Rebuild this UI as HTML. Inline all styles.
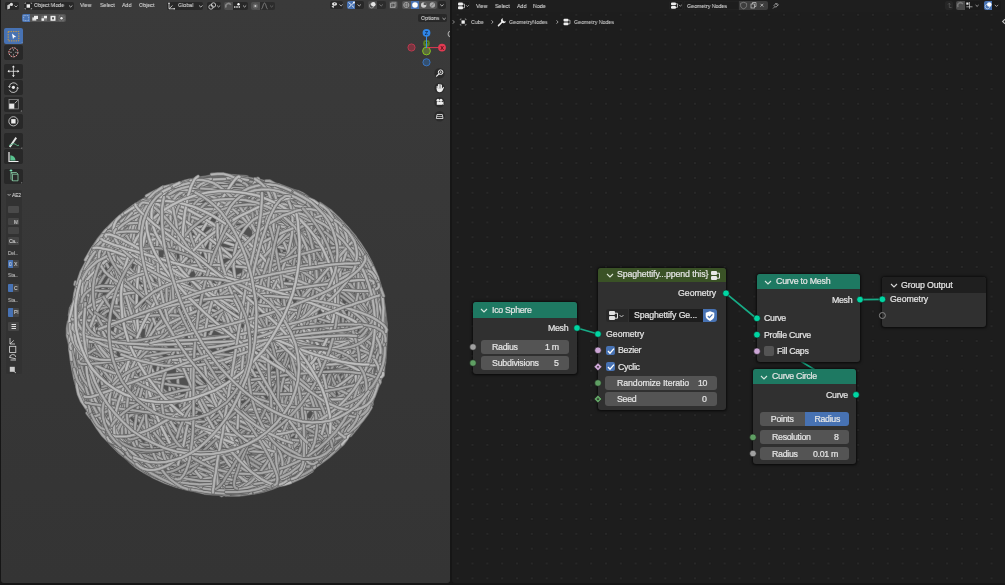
<!DOCTYPE html>
<html><head><meta charset="utf-8">
<style>
*{margin:0;padding:0;box-sizing:border-box}
html,body{width:1005px;height:585px;overflow:hidden;background:#161616;font-family:"Liberation Sans",sans-serif;color:#e6e6e6}
.a{position:absolute}
#vp{left:1px;top:0;width:449px;height:583px;background:linear-gradient(#3a3a3a,#343434);border-radius:0 0 3px 3px;overflow:hidden}
#ne{left:452px;top:0;width:553px;height:583px;background-color:#1d1d1d;border-radius:0 0 0 3px;overflow:hidden;
}
.ht{will-change:transform;-webkit-text-stroke:0.1px currentColor;font-size:6.1px;color:#d6d6d6;line-height:10px;top:-0.3px;transform:scaleX(.87);transform-origin:0 0;white-space:nowrap}
.hb{background:#282828;border-radius:2px}
.tb{left:4px;width:19px;background:#282828;border-radius:2px}
.node{background:#303030;border-radius:3px;box-shadow:0 0 2.5px 0.5px rgba(0,0,0,0.55),0 1px 3px rgba(0,0,0,0.3)}
.nh{left:0;top:0;right:0;border-radius:3px 3px 0 0;}
.nt{will-change:transform;-webkit-text-stroke:0.2px currentColor;font-size:8.8px;letter-spacing:-0.3px;line-height:10px;color:#e6e6e6;white-space:nowrap}
.fld{background:#545454;border-radius:3px}
.sk{width:6px;height:6px;border-radius:50%}
</style></head><body>
<div id="vp" class="a">
<svg class="a" style="left:-1px;top:0" width="450" height="583" viewBox="0 0 450 583">
<style>#ball use{fill:none;stroke-linecap:round;stroke-linejoin:round}.o0{stroke:#424242;stroke-width:3.8px}.c0{stroke:#747474;stroke-width:2.7px}.h0{stroke:#888888;stroke-width:1.0px}.o1{stroke:#494949;stroke-width:3.8px}.c1{stroke:#7e7e7e;stroke-width:2.7px}.h1{stroke:#929292;stroke-width:1.0px}.o2{stroke:#505050;stroke-width:3.8px}.c2{stroke:#888888;stroke-width:2.7px}.h2{stroke:#9c9c9c;stroke-width:1.0px}.o3{stroke:#575757;stroke-width:3.8px}.c3{stroke:#929292;stroke-width:2.7px}.h3{stroke:#a6a6a6;stroke-width:1.0px}.o4{stroke:#5e5e5e;stroke-width:3.8px}.c4{stroke:#9c9c9c;stroke-width:2.7px}.h4{stroke:#b0b0b0;stroke-width:1.0px}.o5{stroke:#656565;stroke-width:3.8px}.c5{stroke:#a6a6a6;stroke-width:2.7px}.h5{stroke:#bababa;stroke-width:1.0px}.o6{stroke:#6c6c6c;stroke-width:3.8px}.c6{stroke:#b0b0b0;stroke-width:2.7px}.h6{stroke:#c4c4c4;stroke-width:1.0px}</style>
<circle cx="227.5" cy="334.5" r="151.3" fill="#505050"/>
<defs>
<path id="s0" d="M108 232.5l2.5-4.5"/>
<path id="s1" d="M163 474l3.5 2.5"/>
<path id="s2" d="M164.5 190l-6 2"/>
<path id="s3" d="M351 249.5l2.5 2"/>
<path id="s4" d="M104.5 236l6.5-8"/>
<path id="s5" d="M171.5 482.5l-11.5-5-11.5-6"/>
<path id="s6" d="M267.5 477l-10 2.5-10 2"/>
<path id="s7" d="M309.5 459.5l10-7 9-7.5 8.5-8.5 7.5-9"/>
<path id="s8" d="M294.5 192.5l10.5 5"/>
<path id="s9" d="M176 198.5l-10.5 5-10.5 5-9.5 6.5-9.5 6.5-8.5 8-8.5 8-7 9-7 9.5-5.5 10.5-5.5 10-4 11-3 11-2.5 11.5"/>
<path id="s12" d="M224.5 175.5l-12.5 1"/>
<path id="s13" d="M272.5 195.5l10.5 3.5 10.5 5 10 5.5 10 6.5 9 7 8.5 8 7.5 8.5"/>
<path id="s14" d="M368.5 267.5l5 11.5 4 11.5 3 12.5 2 12 1 12.5 0 12.5-1 12.5"/>
<path id="s15" d="M382.5 362l-2.5 12-3.5 12-4.5 11.5-5.5 11.5-6.5 10.5-7 10.5"/>
<path id="s16" d="M109.5 229l-7.5 8.5-6.5 9"/>
<path id="s17" d="M170.5 472l10 4 10 3"/>
<path id="s18" d="M104 432l-7-10"/>
<path id="s20" d="M80 294l4-11"/>
<path id="s21" d="M367.5 262l5.5 11 4.5 11.5 3.5 12 2.5 12.5 1.5 12.5 .5 12.5-.5 13-1.5 12.5-2.5 12"/>
<path id="s23" d="M103 261l-1.5 1.5-1 1.5"/>
<path id="s24" d="M75 284.5l.5-2.5"/>
<path id="s25" d="M140 462.5l10.5 6.5 11 6 11 4.5 11.5 4 11.5 3"/>
<path id="s27" d="M258.5 180l0-.5-1 0"/>
<path id="s29" d="M79.5 363.5l1.5 7 2 7.5"/>
<path id="s30" d="M152 215.5l2.5-1.5"/>
<path id="s32" d="M76 295l3-10.5"/>
<path id="s33" d="M74 317l.5 0"/>
<path id="s34" d="M88.5 385l-3.5-10.5-3-11-2-11-.5-12 0-11.5 .5-12 2-11.5 3-11.5 3.5-11.5 4.5-10.5 5-10 6-9.5"/>
<path id="s35" d="M337.5 226l-.5-1.5-.5-1-2-.5"/>
<path id="s36" d="M172.5 190l10.5-4 11.5-3 12-2.5 12-1 12.5 0 12 .5 12.5 2 12 2.5 12 3.5 11 4.5 11 5.5"/>
<path id="s37" d="M263.5 187.5l6 1 5.5 2"/>
<path id="s38" d="M327.5 454.5l-9.5 7.5-10 6.5-10 5.5-11 5"/>
<path id="s39" d="M138 458l-3-1.5-2.5-2"/>
<path id="s40" d="M376 274l-4.5-10.5-5.5-10.5-6.5-10-7.5-9.5"/>
<path id="s41" d="M117.5 429.5l8 8.5 8.5 7.5 9 7 9.5 6.5 9.5 5.5 10.5 4.5 10.5 3.5 11 3"/>
<path id="s42" d="M204.5 491l10.5 2 10.5 .5 9.5-.5 8.5-1"/>
<path id="s43" d="M354 418.5l-5.5 8.5-7 8.5-8 8.5-8.5 8-10 7-10 6.5-11 6-11 5-11 4-11 2.5"/>
<path id="s44" d="M247 177l-12-1-12.5-.5-12 1-12.5 2-12 2.5-12 4-12 5-11 5.5-11 6.5-10.5 7.5-9.5 7.5-8.5 9-7.5 9"/>
<path id="s45" d="M320 203.5l10 7 9 8.5 8.5 9 8 9.5"/>
<path id="s46" d="M266.5 488.5l-12.5 2.5-12.5 2-12.5 .5-12.5-.5-12.5-1-12.5-2.5-12-3.5-12-4-11.5-5.5-11-6-10.5-7-10-8-9.5-8.5-8.5-9.5-8-10-7-10.5-6-10.5-5-11.5"/>
<path id="s48" d="M121 223l-.5 0 .5 .5"/>
<path id="s49" d="M365.5 301.5l2 10.5 1.5 11 .5 11-.5 11-1 11-2.5 11-3 11-4 10.5-4.5 10.5-5.5 10-6.5 9-7 9-8 8.5-8 7.5-9 7-9 6-9.5 5-9.5 4.5"/>
<path id="s50" d="M188.5 488l11.5 3 12 1.5 12 1 12.5-.5 12-1 12.5-2.5 12.5-3 12-4.5 11.5-5 11-6 10.5-6.5 10-7.5 9-8 8-8.5"/>
<path id="s51" d="M195 183l-1.5-.5-2 1-2.5 1.5"/>
<path id="s52" d="M307.5 197l-4.5-3-5.5-2.5-6-1.5"/>
<path id="s53" d="M94.5 264l6-10 7-10 7.5-9.5 8-8.5 8.5-8 9.5-7 10-6"/>
<path id="s54" d="M369 406.5l5-10.5 4.5-11 3-11.5 2.5-12 1.5-12.5 .5-12.5 0-13-1.5-12.5-2.5-12.5-3-12-4-11.5-5-11-5.5-10.5"/>
<path id="s55" d="M340 224l-8.5-8.5-9.5-7.5-10-7-10.5-6-11-5.5-11.5-4.5-12-3-12.5-2.5-12.5-2-12.5-.5-12.5 .5-12.5 1-12.5 2-12 3.5-11.5 4-11 5-11 5.5-10 7"/>
<path id="s56" d="M375 287.5l0-2.5 0-.5-.5 1.5-1 3"/>
<path id="s57" d="M161.5 477l9.5 4 10.5 4 11 2.5 12 2.5 12 1 13 .5 12.5-1"/>
<path id="s58" d="M350.5 435.5l6.5-8 6-8.5 5-8.5"/>
<path id="s59" d="M358.5 391l-2.5 7.5-3.5 7"/>
<path id="s60" d="M260.5 488.5l.5 0 .5-.5-.5-1.5"/>
<path id="s61" d="M84 281.5l-3.5 9.5-3 10-1.5 10.5"/>
<path id="s62" d="M103.5 235.5l-2 2"/>
<path id="s63" d="M379 349.5l-1 12-2.5 11-3 11-4.5 10.5-4.5 10-6 9-6.5 8.5-7 8"/>
<path id="s64" d="M303 453l2-1 1.5-1.5 1.5-3"/>
<path id="s65" d="M168.5 476.5l4 2 3 1 3-1"/>
<path id="s66" d="M319 219.5l7 5 6 5.5 5 6 4 6 2.5 6"/>
<path id="s67" d="M282.5 186.5l11.5 4.5 11 5.5 11 6 10 7.5 9.5 7.5 8.5 9 8.5 9 7 10.5 6.5 10.5"/>
<path id="s68" d="M379.5 343.5l-.5 9.5-1.5 9.5-2 10-3.5 9.5-4 9.5-5.5 9"/>
<path id="s69" d="M342 237.5l-6.5-8-7.5-7-8-6.5-9-5.5-9-5"/>
<path id="s70" d="M196.5 189l-10 2.5-10 3.5-10 4-10 5.5-10 6-9.5 7-9 7.5-8.5 8.5-8 9-7 9-6 9.5-5 9.5-4.5 9.5"/>
<path id="s71" d="M133 456.5l-9.5-8-8.5-8.5-8-9-7.5-9.5-6-10.5-6-11-4.5-11.5-4-11.5-2.5-12-2-12-1-12.5 0-12 1-12.5 2-12 3-12 4-12 5-11.5 5.5-10.5 6.5-10.5 7.5-10 8-9.5 9-8.5"/>
<path id="s72" d="M209 199l-10.5 1.5-10.5 2.5-10 3-10 4-9 4.5-8.5 5.5-8.5 6"/>
<path id="s73" d="M103.5 237l6.5-8.5 7-8 7.5-7"/>
<path id="s74" d="M135 454l-8-5.5-7-6-6.5-6.5-5.5-7"/>
<path id="s75" d="M305.5 197.5l-2-1-2.5-.5-3 0"/>
<path id="s76" d="M68.5 322l-1 6.5 0 7 1.5 6 2 6.5"/>
<path id="s77" d="M86 369l-2-8.5-1.5-9.5-.5-10.5 .5-11 1-11.5 2-11 2.5-11.5 3.5-11 4-10.5 4.5-10 5-9"/>
<path id="s78" d="M155.5 469.5l-10-6-10-6.5-9.5-8-8.5-8-8-9-7-9.5-6.5-10-5.5-10.5-4.5-11-3.5-11.5-3-11.5-1.5-11.5-1-12 .5-12"/>
<path id="s79" d="M359 383.5l-1 4-2 3.5-2.5 3-3.5 2.5"/>
<path id="s80" d="M286 473l-9.5 5-10.5 3.5-10 3-11 2-10.5 1-10.5 0"/>
<path id="s81" d="M110 441l-1.5-1-1.5-2.5-1-3.5-1-4.5"/>
<path id="s82" d="M278 480l-8.5 4-8.5 3-9 1.5"/>
<path id="s83" d="M345.5 426.5l6.5-8.5 5.5-9 5-9.5 4-10.5 3.5-10.5 2.5-11.5 2-11.5 1-12 0-12-.5-12-1.5-11.5-2.5-11.5-3-11.5-3.5-10-4-9.5-5-9"/>
<path id="s84" d="M135 457.5l-2-1-1-1.5-.5-2 1-2.5"/>
<path id="s85" d="M234.5 491l-11 1-11.5 .5-11.5-1-12-2-11.5-3-11.5-4-11-5-10.5-6-10.5-7"/>
<path id="s86" d="M129.5 448l-4-1.5-3-2.5"/>
<path id="s87" d="M147 453.5l8 5 7.5 4 8 3 8 2.5 7.5 1 7.5-.5"/>
<path id="s88" d="M159 464.5l-8.5-5-8.5-5-7-6-6.5-6.5-6-7.5-4.5-7.5-4-8"/>
<path id="s89" d="M178.5 479l9.5 3.5 8.5 2 9 1.5 8 0 8-1 7.5-2 7-2.5"/>
<path id="s90" d="M376 327l1-8.5 0-8-.5-8-1.5-7"/>
<path id="s91" d="M88.5 381l0 0 1 1 2 1 3.5 1.5"/>
<path id="s92" d="M254 187l-11-2-11-.5-11 0-11 1-10.5 2-10.5 2.5-10 4-9.5 4.5-9.5 6-9 6-8.5 7.5"/>
<path id="s93" d="M140.5 201.5l-9 6.5-8.5 7.5-8 8.5-8 9-7 10-6 10.5-6 11-5 11.5-4 12-3.5 12.5-3 12-1.5 12.5-.5 12 0 12 1 12 2 11.5 3 11.5 4 10.5 5 10.5"/>
<path id="s94" d="M87.5 357l-1 7 0 7 1.5 8 2.5 8 3.5 8.5"/>
<path id="s95" d="M214.5 182l-12 1.5-12 3-12 3.5-11.5 4.5-11.5 5.5-10.5 6-10.5 7-9.5 7.5-9 8-8 8.5-7.5 9.5-6.5 9.5-6 10.5-4.5 11-4 11-3.5 11.5-2 12"/>
<path id="s96" d="M306.5 211l1.5 .5 2 2 2 3 2.5 4.5 2 5.5"/>
<path id="s97" d="M143 452l-8.5-6.5-8-7-7.5-7.5-6.5-8.5-6-9-5.5-9-4.5-10-3.5-10.5-3-11-2-11-1.5-11.5-.5-11.5 .5-11.5 1.5-11.5 2-11 3-11.5 3.5-11 4.5-10.5 5.5-10.5 6-9.5 6.5-9.5 7-8.5 8-8 8.5-7.5 8.5-6.5 9.5-5.5 9.5-5 10-4 10-3 10-2.5"/>
<path id="s98" d="M368.5 397.5l1.5 3 0 2.5-.5 2.5"/>
<path id="s99" d="M316 441.5l5.5-1 5-1.5 5-3 4-3.5 3.5-4"/>
<path id="s100" d="M83.5 336.5l0 7.5 .5 8 2 9 3 9.5 3.5 9.5 4.5 10 5.5 10.5 6 9.5 6.5 9.5 7 9 7.5 8.5"/>
<path id="s101" d="M342 236.5l-3-7.5-4-6.5-5-6-6-5.5-6.5-5"/>
<path id="s102" d="M355.5 396l2.5-5.5 2-5.5 1-6 .5-6.5-.5-6.5-1.5-7"/>
<path id="s103" d="M293 193.5l-9.5-4.5-10-4-10.5-2.5-11-1.5-11-1-11 0-11.5 1.5-11.5 2-11 3-11.5 4-11 4.5"/>
<path id="s104" d="M73 310.5l-1.5 11.5-1 11 .5 11 1.5 10.5 2 10 3.5 10 4 9.5 5.5 8.5 6 8 7 7.5"/>
<path id="s105" d="M149.5 474.5l-6.5-3.5-6.5-4-6.5-5.5-5.5-6.5-5.5-7-5-8.5-4.5-8.5"/>
<path id="s106" d="M174.5 469.5l-11-2.5-10-4-10-5-9.5-5.5-8.5-6.5-8.5-7-7.5-8-6.5-8.5-6.5-9-5-10"/>
<path id="s107" d="M296.5 195l-5-3-5.5-2.5-6.5-1.5-6.5-1-7.5 0-7.5 1-8 2"/>
<path id="s108" d="M96.5 422l-5.5-8-4-7.5-3-8-2-8-.5-7.5 0-7.5 2-7.5"/>
<path id="s109" d="M148 229l5.5-7 6-6 6.5-5 7-4.5 8-3.5 8-3 9-2.5"/>
<path id="s110" d="M326.5 444l4.5 .5 3 0 2.5-.5 1-1"/>
<path id="s111" d="M377.5 333l0-10.5-1.5-10-2-10.5-3-10-4-10.5-5-10-5.5-9.5-7-9.5-7-9-8.5-8.5-8.5-8.5-9.5-7.5-9.5-6.5-10.5-6.5-11-5-11-5-11-3.5-11-3-11.5-2.5-11-1-11-.5-10.5 .5-10.5 1-10 2.5-9.5 3"/>
<path id="s112" d="M246 487l-3 3-3.5 1.5-4.5 1"/>
<path id="s113" d="M272.5 485.5l-12.5 2.5-12.5 2-13 1-12.5 0-13-1-12.5-1.5-12.5-3-12-3.5-11.5-4.5-11-5-10.5-6-10-6.5-9.5-7.5-8.5-8.5-7.5-9"/>
<path id="s114" d="M90.5 286l-2.5 6-1.5 7-1 6.5 .5 7.5 1 7 2 7.5 2.5 8"/>
<path id="s115" d="M143.5 468l9.5 6 10 5 10 4 10 3 9.5 1.5 10 .5 9.5 0 9.5-2 9-2.5 8.5-3.5"/>
<path id="s116" d="M374.5 338.5l2-10 1-10 .5-10-1-9-1.5-9.5-2.5-8.5-3.5-8.5"/>
<path id="s117" d="M220 471l2.5 3.5 2 3 1.5 1.5 2 1 1 0"/>
<path id="s118" d="M366 384.5l-2.5 8-3.5 8.5-5 8-5.5 8-6.5 8-7.5 7.5-8.5 7-8.5 6.5-10 6.5-10 5.5-10.5 5.5-11 4-11.5 4-11 3-12 2-11.5 1.5-11.5 0-11.5 0-11-1.5-11-1.5-10.5-3-10-3.5-9-4.5-9-5-7.5-5.5"/>
<path id="s119" d="M72.5 304.5l-2 4-.5 4 0 3 1.5 3 2.5 2.5 4 2 4.5 2"/>
<path id="s120" d="M81.5 387l-3.5-9-3-10-1.5-10.5-1-11 .5-11 1-11.5 2-11.5 3-11.5 3.5-11.5 4.5-11.5 5.5-11 6-11 7-10.5 7.5-9.5 8-9.5 9-8.5 9.5-8 9.5-7 10.5-6.5 11-5.5 11-4 11.5-3.5 11.5-3 11.5-1.5 12-.5"/>
<path id="s121" d="M177 483.5l-11-4-10.5-4.5-9.5-5.5-8-6-7-6.5-5-6.5-4-7-2-7-1-6.5"/>
<path id="s122" d="M92.5 271.5l2.5-10 3-9 4-9 5-8 6-8 6.5-7.5 8-6.5"/>
<path id="s123" d="M370.5 406l1.5-1.5 0-2-1.5-2-2.5-1.5-4-.5"/>
<path id="s124" d="M213 198.5l0-3.5 .5-3 .5-2 .5-1 .5 0"/>
<path id="s125" d="M132.5 223l-7.5 3.5-6.5 3-5.5 4-4.5 3.5-3.5 4"/>
<path id="s126" d="M239 479.5l7.5 2 6.5 1.5 6.5 0 6.5-.5 5.5-1.5"/>
<path id="s127" d="M104.5 427l-5.5-2-4.5-3.5-4-4-3.5-4.5"/>
<path id="s128" d="M119 435.5l7.5 8 8 7 8.5 6.5 9.5 5.5 10 5 10.5 4 10.5 3.5 11 2.5 11.5 1.5 11.5 .5 11.5 0 11.5-1.5 11.5-2 11.5-3 11-4 11-4.5 10.5-5.5 10.5-6 9.5-7 9-7.5 8.5-8 8-8.5 7.5-9 6.5-9.5 5.5-9.5 5-10 4-10 3-10 2-10 1-10.5 0-10"/>
<path id="s129" d="M291 211.5l5 2 5 3.5 5 4 4 4.5 4 6 3.5 6 3 7 3 8"/>
<path id="s130" d="M125.5 426l-5-5.5-4.5-5.5-3-5.5-1.5-5.5-1-5.5 .5-5 1.5-5.5 2.5-5"/>
<path id="s131" d="M354 249l-5.5-8-6.5-8-7.5-7-8-6.5-8.5-6-9.5-5.5-10-4.5-11-4.5-11-3-11.5-3-12-2-12-1"/>
<path id="s132" d="M169 201l11-4.5 11.5-4 12-2.5 12-2 12-1 12 0 12 1 12 2 12 3 11.5 4 11 5 10.5 6 10 6.5 9.5 7.5 9 8 8 9 7.5 10 6.5 10 6 10.5 5 11.5 3.5 11.5 3 11.5 2 12 1.5 12.5 0 12-1 12-2 12.5-3 11.5-3.5 11.5-5 11.5-5.5 11-6.5 10-7.5 10-8 9-8.5 8.5-9.5 8-10 7-10.5 6-11 5.5-11.5 4-11.5 3.5-12 2.5-12 1-12 .5-11.5-.5-11.5-2-11.5-3-10.5-3.5-10-5-9.5-6-8.5-6.5-7.5-7.5-6.5-8-5.5-8.5-4.5-9.5"/>
<path id="s133" d="M296.5 220.5l7 .5 7 1 6.5 2 6 3 5.5 3.5 5.5 5 5 5.5"/>
<path id="s134" d="M99.5 380.5l-5.5-3-4.5-4.5-4-5-3-6-2-7-1.5-8-.5-9"/>
<path id="s135" d="M329.5 441l-5 8.5-6 7.5-6.5 6.5-7 6.5-8 5-9 4.5-9 3.5"/>
<path id="s136" d="M79 347l-1-8 0-9 1-9 2-9 2.5-9.5 4-10 4.5-9.5 5.5-10 6-9.5 7-9 7.5-9.5 8-8.5 8.5-8.5 8.5-8 9-7.5 8.5-6.5 8-5.5 8-4.5 7-4 6.5-2 5.5-1.5"/>
<path id="s137" d="M376 361l.5 1.5-1 1.5-1.5 1.5-2.5 2.5-4 2.5-4.5 3-5.5 3.5"/>
<path id="s138" d="M365.5 259l5 10 4.5 10 3 10.5 2.5 10.5 1 10.5 0 10.5-1 10-2 10-3 9.5-4 9-5.5 8.5"/>
<path id="s139" d="M379 354.5l2.5 6 1.5 5 .5 5.5-.5 4.5"/>
<path id="s140" d="M275 472l10.5-2 10.5-2.5 10-3 9.5-4.5 8.5-5 8.5-5.5 7.5-6.5 6.5-7 6-8"/>
<path id="s141" d="M263.5 488l-11 2-11.5 1.5-11.5 0-12-.5-11.5-2-11.5-2.5-11.5-4-11.5-4.5-11-5.5-10.5-6.5-10-7-10-8-9-8.5-8.5-9.5-7.5-10-7-10.5-6-11-5.5-11.5-4.5-11.5-3.5-12-3-12-1.5-12-1-12 0-12 1-11.5 1.5-11.5 3-11 3.5-11 5-10 5.5-10"/>
<path id="s142" d="M174 192.5l5.5-2.5 6.5-2.5 7-1 7.5-.5 8.5 0 9.5 1 9.5 2 10.5 2.5 10 3 11 4"/>
<path id="s143" d="M85.5 386l0 3 .5 2.5 2 2 2.5 2 3.5 1.5 4.5 1.5 5.5 1 6 .5"/>
<path id="s144" d="M327.5 451l0 1-.5 0-1-.5-1.5-2-1.5-2.5-2.5-3.5-2.5-4.5"/>
<path id="s145" d="M224.5 178l-12 .5-12 1.5-11.5 2.5-11.5 3.5-11 4.5-11 5.5-10.5 6-9.5 7.5-9.5 7.5-8.5 9-8 9-7.5 10-6.5 11-5.5 11-5 11.5-3.5 11.5-3 12.5-2 12-1 12.5 .5 12.5 1.5 12.5 2 12 4 12 4.5 11.5 5.5 11 6.5 10 7 10"/>
<path id="s146" d="M371 366l-2.5 12-3 11.5-4 11.5-5 11-6 10.5-7 10-7.5 9.5-8.5 9-9 7.5-9 7.5-10 6-10.5 5.5-10.5 4.5-11 3.5-11 2.5-11 1.5"/>
<path id="s147" d="M75 322.5l-1 7.5 .5 7 1 5.5 2.5 4.5 3.5 3 4 2 5 0"/>
<path id="s148" d="M257 457l-1.5 4.5-1.5 4-2 3-2 2-2.5 1.5-2.5 .5"/>
<path id="s149" d="M174.5 190l10-3.5 11-2.5 10.5-2 11-.5 11.5 0 11.5 1 11 2 11.5 3 11 4 11 4.5 10.5 6 10.5 6.5 9.5 7 9.5 8 9 8.5 8 9 7.5 10 6.5 10.5 6 10.5 5 11.5 4.5 11.5 3 11.5 2.5 12 1.5 12 .5 12-.5 11.5-1.5 12-2.5 11.5-3.5 11.5-4 11-5.5 10.5-6.5 10.5-7 10-8 9-8.5 8.5-9.5 8-10 7-10.5 6.5-11 5-11.5 4.5-11.5 3.5-11.5 2-11.5 1-11.5 .5-11-1-11.5-2-11-2.5-11-4-11-4.5-10.5-5.5-9.5-6.5-9.5-7.5-8.5-8-8-9-7.5-9.5"/>
<path id="s150" d="M105.5 372.5l-5.5-7-4.5-7.5-3.5-7.5-2.5-8-2-8-1-8 0-8.5 1-8 2-8"/>
<path id="s151" d="M168.5 196l-10.5 5.5-10.5 6-10 7-9 8-8.5 8.5-7.5 9.5-7 9.5-6 10.5-5 11-4.5 11.5-3.5 11.5-3 12-2 12-1 12-.5 12 1 12 1 11.5 2 11.5 3 11 4 10.5 4.5 10 5 9 5.5 8.5 6.5 7.5"/>
<path id="s152" d="M213.5 189l-8-3-8-2-8.5-.5-8.5 0-8.5 1.5-8.5 2.5-8.5 4-8.5 4.5"/>
<path id="s153" d="M100.5 307.5l-4 1-3.5 1-2.5 1-1.5 1-.5 1"/>
<path id="s154" d="M127.5 438.5l-3 3-3 1.5-2 1-2 .5-1-1"/>
<path id="s155" d="M371 354.5l4.5-8 3.5-8 2.5-8.5 1.5-9 .5-8.5-.5-9-2-9-3-9.5"/>
<path id="s156" d="M320.5 450l.5 4 0 3.5 0 2.5-1 2"/>
<path id="s157" d="M183 472l-2.5 0-3-1-3.5-2.5-3.5-3-4-4-4-5.5-4.5-6-4.5-7.5-4.5-7.5"/>
<path id="s158" d="M228 495l11 0 10.5-1.5 11-2 10.5-3 11-4.5 10.5-5 10-6 10-7 9.5-8 9-8.5 8.5-9.5 8-10 7.5-10.5 6-11 6-11.5"/>
<path id="s159" d="M284 478.5l-1.5 1-2 .5-2.5-1-2.5-1.5-3.5-2.5-3.5-3-4-4.5"/>
<path id="s160" d="M86.5 355l-5-2-4-2.5-3-2-2-2.5-1-3.5-.5-3.5"/>
<path id="s161" d="M204 492l8 1.5 8.5 .5 9.5-.5 10-1 10.5-2.5 10.5-3.5 11-4 10.5-5 11-6 10.5-6.5 10.5-7.5 10-7.5 9.5-8.5 9.5-8.5 8-9 8-9 6.5-9 6-9 4.5-8.5 3.5-8 2.5-7.5"/>
<path id="s162" d="M277.5 476l-7.5 3-7.5 2-9 1-9.5 .5-10 0-10.5-1.5-11-1.5-11-3-11-3.5-11.5-4-10.5-5-11-5.5-10-6.5-10-6.5-9-7.5-9-8-8-8.5-7.5-8.5-6-8.5-6-9-4.5-9-4-9"/>
<path id="s163" d="M375 274.5l3.5 9.5 3 10 2 10.5 1 11 0 11-.5 12-2 11.5-2.5 12-3.5 12-4.5 11.5-5.5 11.5-6 11-7 10.5-7.5 10-8.5 9.5-9 9-10 8-10 8-11 6.5-11 6-11.5 5-12 4-12 3-12 2-12 1.5-12.5 0-12-1-12-2-12-3-11.5-4-11-4.5-11-6-10-6.5-9.5-7.5"/>
<path id="s164" d="M377.5 322.5l1 5 .5 6-.5 7-2 7.5-2.5 8-3.5 8.5-4 9-5 9.5-5.5 10-6.5 10-6.5 10-7.5 10-7 9.5-8 9-7.5 8-7 7.5-7.5 6.5-6 5.5-6 4-4.5 2.5-3.5 1.5"/>
<path id="s165" d="M146 442l3.5 7.5 4.5 7 5.5 6 6 5.5 6.5 4.5 7.5 4 7.5 3 8 2"/>
<path id="s166" d="M126 452.5l4 3.5 4.5 3.5 6 3 6.5 2.5 8 2 8.5 1.5 9 .5 10 .5 10.5 0"/>
<path id="s167" d="M311 206l-4.5-3.5-5-3-5.5-2-6-1-6 0-6.5 .5-7 1.5-7.5 2.5-7.5 3.5"/>
<path id="s168" d="M381.5 314.5l-1.5-10.5-2.5-10.5-3.5-10-4.5-10-5-10-6-9-7.5-9-7.5-8.5-9-8-9-7.5-10-6.5-10.5-6-11-5.5-11.5-5-12-3.5-12-3.5-12-2-12.5-1.5"/>
<path id="s169" d="M123 454l-9.5-8.5-8.5-9.5-7.5-9.5-6.5-10.5-5.5-10.5-5-11-3.5-11-2.5-10.5-1-11 0-10.5 1-10 2.5-9 4-8.5 4.5-8 6-7 6.5-6 8-4.5"/>
<path id="s170" d="M177 195.5l-6 2-6 3-6 4-5.5 5-5 5.5-5 6.5-4 7.5-3.5 7.5-3 8.5"/>
<path id="s171" d="M284 204.5l-5.5-6-5-5.5-5.5-4.5-5.5-3-5-2.5-5.5-1.5"/>
<path id="s172" d="M303 228l-5.5-8-6-7-6.5-6-7-5.5-7-4.5-8-3.5-8-2.5-8-2-8.5-1"/>
<path id="s173" d="M104 234.5l-2.5 3-1.5 3-1 4 .5 4 1.5 4.5 2 4.5 3.5 5"/>
<path id="s174" d="M383 353l1-.5 0-1.5-1-2-2-2.5-3-3-4-3.5-4.5-4-6-4"/>
<path id="s175" d="M367.5 392l-3 6.5-4 7-4.5 7-6 7-7 7-8 6.5-8.5 6.5-9.5 6-10 6-10.5 5.5-11 5-11 4.5-11.5 4.5-11 3.5-11 3-10.5 2.5-9.5 1.5-9.5 1-8 0-7.5 0-6-1.5"/>
<path id="s176" d="M308.5 435.5l3 4 3 3.5 3 2.5 2.5 1.5 2 0 2-.5 1.5-1.5"/>
<path id="s177" d="M218 476l8 4.5 8.5 3.5 9 2.5 9.5 1.5 9.5 0 10-1 10-2.5 10-3 10-4.5 9.5-6"/>
<path id="s178" d="M97 255l-2.5 2.5-2 3.5-1 4.5-.5 5 0 6 1 7 1 7.5 2.5 8 2.5 8.5"/>
<path id="s179" d="M212.5 458.5l-10 1.5-10 0-9.5-.5-10-2-10-3-9.5-4-9-5-8.5-6-8.5-6.5-7.5-7.5-7-8-6-9-5.5-9.5-5-10-4-10.5-3-11-2.5-11-1-11-.5-11.5 .5-11.5 1.5-11 2-11 3.5-11 4-10.5 5-9.5 5.5-9.5 6.5-9 7-8 7.5-7 8.5-6.5 8.5-5.5 9.5-4.5 9.5-3.5 9.5-3 10.5-2 10-.5 10.5 0 10.5 1 10 2 10.5 2.5 10 4 10 4.5 9.5 5"/>
<path id="s180" d="M309 460l8.5-5.5 8-6.5 7.5-7 6.5-8 6-8.5 5.5-9 4.5-10 4-10 3.5-11 2.5-11 1.5-11.5 1-11.5 .5-12-.5-12-1.5-12-2.5-11.5-3-12-3.5-11-4-11-5-10.5-5.5-10"/>
<path id="s181" d="M136 432l-2 6-1 6 0 5 1.5 5 3 5 4 4.5 5.5 4 6.5 3.5"/>
<path id="s182" d="M195.5 198l-3-4.5-3-4-3-2.5-3-1.5-2.5-.5-2.5 0"/>
<path id="s183" d="M148.5 228l.5-6 2-6 2-5 2.5-4 3-3 3-2.5"/>
<path id="s184" d="M93 279.5l-6 6.5-5.5 6.5-4.5 6-3.5 6-2.5 5-1.5 5.5"/>
<path id="s185" d="M76.5 331.5l0-9 1-9.5 2-9 3-9 4-8.5 5-9 5.5-8.5 6.5-8.5 7.5-8 8-8 8.5-8 9.5-7 10-7 10-6.5 10.5-6 11-5.5 10.5-5 11-4 10.5-3.5 10-2.5 10-2 9.5-1 8.5-.5 8 0 6.5 1.5"/>
<path id="s186" d="M168.5 193l11.5-4 11.5-3.5 11.5-2.5 12-1.5 12-.5 12 .5 12 2 11.5 2.5 11.5 3 11 4.5 11 5.5 10 6 9.5 7 8.5 8 8 8.5 7.5 9 6 9.5 5.5 10.5 4.5 10.5 3.5 11 2.5 11.5 1.5 11.5 .5 11.5-.5 12-1.5 11.5-2.5 12-3 11.5-4 11-5.5 11"/>
<path id="s187" d="M362.5 372.5l2 8.5 1 8 0 8-.5 7.5-2 7-3 7-3.5 6"/>
<path id="s188" d="M233 194l-10.5 1.5-10.5 2-11 3-11 3.5-10.5 4-11 4.5-10 5.5-10 6-9.5 7-9 7-8 7.5-8 8-6.5 8.5-6.5 9-5 9-4.5 9.5-4 9-2.5 9.5-2 9-.5 9"/>
<path id="s189" d="M194 182l-.5-.5-1.5 .5-2 1.5-2 3-3 4-3 5-3 5.5-4 7-3.5 7.5"/>
<path id="s190" d="M308.5 230l-6.5-9-7-8.5-7.5-7.5-8-6.5-8.5-6-9.5-4.5-10-4-10-2.5-10.5-2-10.5-.5-11 0-10.5 1.5-10.5 2-10.5 3.5"/>
<path id="s191" d="M114.5 390l2 11 2.5 10.5 3.5 10 4.5 9.5 5.5 9.5 6 8 7 8 7.5 7 8.5 6 9 5.5 9.5 4.5 10.5 4 11 2.5 11 2 11.5 .5 12 0 12-1.5"/>
<path id="s192" d="M79.5 390.5l-2.5-5-2-6.5-1-7-.5-8.5 .5-10 1-10 1.5-11 2.5-11.5 3-12 3-12 4-12.5 4.5-11.5 4.5-11.5 5-11 6-10.5 5.5-9.5 6.5-9 7-8"/>
<path id="s193" d="M90 403l4.5 6 6 6.5 7 6.5 8 7 9 7 9.5 7 10 7 10.5 6.5 10.5 6 11 5.5 11 5 10.5 4.5 10.5 3.5 10 3 9.5 2 9 1 8 .5 7.5-.5 7-1.5"/>
<path id="s194" d="M354.5 293.5l1.5-8.5 1-8.5-.5-8.5-1-7.5-2-7.5-2.5-6.5-3.5-6.5-4-5.5"/>
<path id="s195" d="M330.5 380l7-5 7-6 5.5-6 5-7 4.5-7 3-7.5 2.5-8.5 1-8.5 .5-9-1-9-1.5-9-3-9.5-3.5-9.5"/>
<path id="s196" d="M344 411.5l-5.5 8.5-6 7-6.5 7-7.5 6-8 6-8.5 4.5-9 4.5-9.5 3-10 2.5-9.5 1.5-10.5 1-10-.5-10.5-1-10-1.5-10.5-3-10-3.5-9.5-4.5-10-5-9-6"/>
<path id="s197" d="M298.5 197l7 3.5 6.5 4.5 6.5 5.5 6.5 6.5 6 7.5 6 8.5 5.5 9.5 5 10 4.5 10.5 4 11 3.5 11.5 3 12 2 12 2 12.5 1 12.5 .5 12-.5 12-1 12-1.5 11.5-2 11-3 10-3.5 10-4 9-5 8.5-5.5 7.5-5.5 7-6.5 6"/>
<path id="s198" d="M112.5 407l-8.5-3.5-7-3.5-6-3.5-5.5-3-4-3.5-3-3-2-3-1-3.5"/>
<path id="s199" d="M229 179l10.5 0 10 1 10.5 2.5 10 3 10 4 9.5 5 9.5 6 8.5 6.5 8.5 7.5 7.5 8.5 7 9 6.5 10 6 10 5 11 4.5 11.5 4 11.5 3 12"/>
<path id="s200" d="M147.5 457l1.5 1.5 1.5 0 1.5-.5 2-1.5 2-3 2-3.5 2-4.5 2-6 2-6.5"/>
<path id="s201" d="M310 457l-9.5 6.5-10 5-10 4.5-11 3.5-10.5 2.5-11 2-11.5 .5-11 0-11.5-1-11.5-2-11-3-11-4-10.5-4.5-10-5.5-10-6.5-9-7-8.5-8-8-8.5-7.5-9.5-6.5-9.5-5.5-10.5-5-10.5-3.5-11.5-3-11.5-2-11.5-.5-11.5 0-12 1.5-11.5 2.5-11.5 3.5-11 5-10.5 5.5-9.5 7-9 8-8 8.5-6.5 9.5-5.5"/>
<path id="s202" d="M201 489l1.5 1.5 2.5 .5 2-.5 2.5-2 3-2.5 3-3.5 3.5-4 3.5-5.5 4-6 4-7"/>
<path id="s203" d="M309.5 441l-7 9-7.5 8.5-8.5 7.5-9 6.5-9.5 5.5-10 4.5-10 4-11 2.5-11 1.5-11 .5-10.5-.5-11-1.5-11-2.5-10.5-3.5"/>
<path id="s204" d="M322.5 264l-2-9-2-8-2.5-8-2.5-6.5-2.5-6-3-5.5-2.5-4-3-2.5-2-2"/>
<path id="s205" d="M182.5 212l-8.5-2-7-1.5-6.5-1-4.5-1.5-3.5-1-2-.5-.5-.5"/>
<path id="s206" d="M331.5 413l5 4.5 4.5 3.5 3.5 3.5 3 2.5 2 2 1.5 1.5 .5 .5 0 0"/>
<path id="s207" d="M334.5 328.5l3.5 9.5 2.5 9.5 2 9 1.5 9.5 .5 9-.5 9-1 8.5-2 8.5-3 8-3.5 8-4.5 7.5-5.5 6.5-6 6-6.5 5.5-7 5"/>
<path id="s208" d="M249.5 182l4.5 0 5.5 1 6 2.5 7 3.5 7 4.5 7.5 5.5 8 6.5 7.5 7 8 8 8 9 8 9 7.5 10 7.5 10 7 10 6.5 10 6 10.5 5 10 4.5 10 4 9.5 3 9 2 8.5 1.5 7.5 0 7.5-.5 6.5"/>
<path id="s209" d="M139.5 204l-6 4-6 5-5.5 6-5.5 7.5-5 8-4.5 9-4.5 10-4 10.5-3.5 11.5-3 11.5-2.5 12-1.5 12.5-1.5 12.5-.5 12.5 0 12.5 0 12.5 1 12 1.5 11 1.5 10.5 2 9.5 2.5 9 3 7.5 3 6.5 3.5 5"/>
<path id="s210" d="M326 254.5l-5.5-10-6-9-6-8.5-6-7.5-6-7-5.5-5.5-5-5-4.5-4-4.5-2.5-3.5-1"/>
<path id="s211" d="M91.5 377.5l-2.5-8.5-2-8.5-1-9 0-9 .5-9 2-9 2.5-9.5 3-9 4.5-9.5 5-9 5.5-8.5 6.5-8.5 7-8.5 8-8 8.5-7 9-7 9.5-6.5 9.5-6 10-5 10.5-5 10.5-4 11-3.5 10.5-2.5 10.5-2 10-2 10-.5 9.5-.5 9 0 8 1 7.5 1.5 7 2 6 2.5 5.5 3.5"/>
<path id="s212" d="M315.5 420l-4 10.5-5 9.5-5.5 9.5-6.5 8-6.5 8-7.5 6.5-8.5 6-8.5 5-9.5 4-9.5 3-10.5 2-11 1-11-.5-11.5-1.5-11.5-2-11.5-3.5-12-4.5"/>
<path id="s213" d="M368.5 289.5l1 1 1 2.5 .5 4-.5 5-1 6.5-1.5 7.5-2 8.5-2.5 9-3.5 9.5-3.5 10-4.5 10-5 10.5-5.5 10.5"/>
<path id="s214" d="M170 447.5l10 5 10.5 4 11 3.5 11 2.5 11.5 1.5 11 1 11 0 11-.5 10.5-1.5 10.5-2 10-2.5 9.5-3.5 8.5-4 8.5-5 7.5-5 6.5-5.5 6-6"/>
<path id="s215" d="M128 263.5l4-10 4.5-9.5 5.5-9 5.5-8.5 6.5-7.5 6.5-7 7.5-6.5 7.5-5 8-4.5 8.5-4 8-2.5 9-2 8.5-.5"/>
<path id="s216" d="M304 249.5l-7-8.5-8-7.5-8.5-7.5-9-6-9-5.5-9.5-5-10-4-10-3-10-2-10.5-1-10 0-10.5 .5-10 2-10 3-10 3.5-9.5 4.5-9 6-8.5 6-8 7-7.5 8-6.5 8"/>
<path id="s217" d="M342.5 432l-7 8.5-8.5 8-8.5 7-9.5 6.5-10 5.5-10.5 4.5-11 4-11.5 3-11.5 2.5-11.5 1-12 0-11.5-.5-11.5-2-11.5-2.5-11-4-10.5-5-10.5-5.5-9.5-6.5-9-7.5-8.5-8-7.5-9-6.5-9.5-6-10-5-10.5-4-11-3-11.5-1.5-11.5-1-12 .5-11.5 1.5-12 3-11"/>
<path id="s218" d="M380.5 312.5l-.5-7-1.5-7-2.5-7.5-3.5-7.5-4.5-7.5-5.5-7.5-6.5-7.5-7.5-7.5-8.5-7.5-8.5-7-9.5-6.5-10.5-6-10.5-6-11-5-11.5-5-12-4-12-3.5-12-2.5-12-2.5-11.5-1.5-12-1-11 0-11.5 .5-10.5 1.5-10.5 2.5-10 3-9 3.5-9 5-8.5 5.5-7.5 6-7 7-6.5 7.5"/>
<path id="s219" d="M76 336l-.5 .5 0 .5 1.5-.5 2-.5 3.5-1.5 4-1.5 5-2 6-2.5 6.5-3 7.5-3"/>
<path id="s220" d="M363.5 269l2 2 .5 2-.5 2-2 2-2.5 1.5-4 1.5-5 1.5-5.5 1-7 .5-8 0"/>
<path id="s221" d="M157 473l-11-5.5-10-6.5-8.5-7-7.5-7-6.5-7.5-5-7.5-3.5-7.5-2-7.5-.5-7 1-7.5 2-7 3.5-6.5 5-6 6-5.5 7-5.5"/>
<path id="s222" d="M255 477l-12 1-12.5 0-12.5-.5-12.5-1.5-12-2.5-12-3.5-12-4.5-11.5-5-10.5-6-10.5-6.5-10-7.5-9-8-8.5-8-8-9-7-9.5-6-9.5-5.5-10-4-10-3.5-10-2.5-10.5-1.5-10 0-9.5"/>
<path id="s223" d="M157.5 477l.5 .5 .5-.5 .5-1.5 0-3 0-4.5-.5-5-.5-6.5-1-7.5-1.5-8.5"/>
<path id="s224" d="M311.5 243l9 .5 8 .5 7.5 1.5 6.5 1.5 5.5 2.5 5 2 4 3 3 3 2 3"/>
<path id="s225" d="M84.5 273.5l3-7.5 4-7 5-7 5.5-6 6.5-5.5 7-5.5 8-4.5 8.5-4 9.5-3 9.5-2.5 10.5-1.5 10.5-.5 10.5 0"/>
<path id="s226" d="M199 207l11.5-3.5 12-3 12-2 12-.5 12.5 .5 12 1.5 11.5 2.5 11.5 4 11.5 5 10.5 6 10 7 9.5 7.5 8.5 9 8 9.5 7 10 6.5 11 5 11 4.5 12 3 12 2 12 1 12.5 0 13-1 12.5-2.5 12-3.5 12.5-4.5 11.5-5 11.5-6 11-7 10.5-8 10-8.5 9-8.5 8.5-9.5 8-10 7-10.5 6.5-10.5 5-11 4.5"/>
<path id="s227" d="M374.5 385l-2 6-2.5 5.5-3.5 6-4.5 5.5-6 5-6 5-7.5 4.5-8 3.5-8.5 3.5-9.5 3-10 2-10 1.5"/>
<path id="s228" d="M374.5 382l2-8.5 1.5-9 0-9-.5-9.5-1-10-2.5-10-3-10-4-10.5-4.5-10-5.5-10.5-6.5-10-7-10-7-10-8-9.5-8.5-9-8.5-8.5-8.5-8.5-8.5-7.5-8.5-7-8-6.5-8-5-7-4.5-7-3.5-6.5-3-6-1.5-5 0"/>
<path id="s229" d="M179.5 477.5l6.5 2.5 6.5 2 7.5 1 7 0 8-1 7.5-1.5 8-3 8-3.5 8-4.5 8.5-5 8-6 8.5-7 8-7 8-8"/>
<path id="s230" d="M152 238.5l-8.5-1-8.5 .5-8 .5-7.5 2-6.5 2.5-6.5 3-5 4-5 4-3.5 5.5-3 5.5"/>
<path id="s231" d="M307.5 198l7.5 4 7 5 7 6 6.5 7 6 8 5.5 8.5 5 9.5 4 10 3.5 11 3 11 2 11.5 1.5 12 .5 12.5 0 12.5-.5 12.5-2 12.5-2 12.5-3.5 12-4 12-4.5 12-5.5 11-6.5 11-7 10-7.5 10-8 8.5-9 8.5-9 7.5-9.5 6.5-10 5.5-10 5-10.5 4-10.5 2.5-10.5 2-10.5 1-10 0-10.5-1.5"/>
<path id="s232" d="M91.5 253.5l-5.5 9.5-5 9.5-3.5 10.5-2.5 10-1.5 10.5-1 11 .5 10.5 1.5 11 2.5 10.5 3.5 10.5 4 10.5 5.5 10.5 6 10 6.5 9.5 8 9.5 8.5 9 9 8.5 9.5 7.5 10.5 7"/>
<path id="s233" d="M266 181l3.5 0 3.5 2 4.5 2.5 5 4 5.5 5.5 6 6 6 7 7 8.5 7.5 8.5 7.5 9.5 7.5 10 8 10 7 10.5 7.5 10 7 10 6 9 5.5 8.5 5 7.5 4 7 3.5 5.5 2 4 1 2.5 .5 1.5"/>
<path id="s234" d="M274 189.5l10.5 3.5 10.5 4.5 9.5 5 9.5 6.5 9 7 8 7.5 7.5 8.5 7 9 6 10 5.5 10 4.5 11 3.5 11 2.5 11.5 2 11.5 1 12 0 12-.5 12-2 12-3 12-3.5 11.5-5 11-6 10.5-6.5 10.5-7.5 9-8.5 8.5-9.5 8-10 6.5-10.5 5.5-11 4.5-11.5 3.5-12 2-11.5 1-12-.5"/>
<path id="s235" d="M250.5 181l10 1.5 10.5 3 10 3.5 9.5 4.5 9.5 5.5 8.5 6.5 8.5 7 8 8 7 8.5 7 9.5 5.5 10 5.5 10.5 4 11 3.5 11.5 3 12 1.5 12 1 12 0 12.5-1 12-2 12.5-2.5 12-3 12-4 11.5-5 11.5-5 11-6 10.5-6 10-6.5 9-7 9-7.5 7.5-7 7-7.5 6-7.5 5-7.5 4-7.5 3"/>
<path id="s236" d="M85.5 260l6-10.5 6.5-9.5 7-9 7.5-7.5 8-6.5 8-5.5 8.5-3.5 8-2.5 8-.5 8 1 7.5 2 6.5 4 6.5 5 6 6.5 5.5 7.5"/>
<path id="s237" d="M353.5 322.5l5-8 4-7.5 3.5-7.5 3-6.5 2-5.5 1-6 0-5-.5-5-2-4.5"/>
<path id="s238" d="M331.5 270.5l-5.5-11-5.5-10.5-6.5-9.5-7.5-9.5-7.5-8.5-8-7.5-9-7-9-6-9.5-5.5-10-4-10-3.5-10.5-2.5-10.5-1.5-10.5-.5-10.5 .5-10.5 2-10 2.5-10 3.5-9.5 4"/>
<path id="s239" d="M340 264l-7.5-9.5-8-9-8-9-9-8-9-7.5-9.5-7-10-6-10-5.5-10-5-10-3.5-10-3-10-2.5-10-1.5-9.5 0-9.5 0-8.5 1.5-9 2"/>
<path id="s240" d="M353 328.5l4-10 3-9.5 2.5-9.5 1-9.5 .5-9 0-8.5-1.5-8.5-2-8-3-7.5-4-7-5-6.5"/>
<path id="s241" d="M104 327.5l-3 10.5-2.5 11-2 10-1.5 10-.5 9.5 0 9 1 8.5 1.5 7.5 2 7 2.5 6.5 3.5 5.5"/>
<path id="s242" d="M345 236.5l.5-.5-.5-1-2-.5-3.5-1-4-.5-6-.5-6.5-.5-7.5-.5-9-.5-9.5-.5-10 0-11-.5"/>
<path id="s243" d="M377 337.5l-2.5 12.5-3 12-4 12-4.5 12-5.5 11.5-6 11.5-6.5 11-6.5 10.5-7 10-7.5 9.5-8 8.5-8 7.5-8.5 7-8.5 6-9 5-9.5 4-9 3-9.5 2"/>
<path id="s244" d="M290 200l10 6.5 10 7.5 9.5 8.5 9 8.5 8.5 10 8 10 6.5 10.5 6.5 11.5 5 11.5 5 11.5 3.5 12 3.5 12 2 11.5 1.5 11.5 1 11.5-.5 11-.5 10.5-2 10-2.5 9.5-3 8.5-4 7.5"/>
<path id="s245" d="M358 255l.5-1-1.5-1.5-3-2-4.5-2.5-5.5-3.5-7-3.5-8.5-3.5-9-4-9.5-4-11-4.5-11-4-11.5-4.5-11.5-4"/>
<path id="s246" d="M383.5 322l-.5-7.5-1.5-7.5-2.5-8-3-7.5-4.5-7.5-5.5-7.5-6.5-8-7-7.5-8-7.5-8.5-7.5-9.5-7.5-10-7-10.5-7-10.5-6-11-6-11.5-5.5"/>
<path id="s247" d="M127 276l-3.5-8-3-7-2-7-1-7-.5-6 .5-6 1.5-5 2-4.5 3-4 4-3.5"/>
<path id="s248" d="M328.5 217l-2-3-1.5-.5-.5 1 0 3 1.5 5 2 6.5 3 8.5 3.5 9.5 4.5 10.5 4.5 11 5 11 5 11.5 5 11 5 10.5"/>
<path id="s249" d="M124 328l-7.5 3.5-6.5 3.5-5.5 4-5 3.5-4 3.5-3 3.5-2.5 3.5-1.5 3.5-.5 3.5 .5 3.5"/>
<path id="s250" d="M187.5 452l11 4.5 11 3.5 11 3 11.5 2 11 1.5 10.5 1 10.5 0 10-1 10-1 9-2 8.5-2.5 7.5-3.5 7-3.5 6-4.5"/>
<path id="s251" d="M122 395l0 10 1 10 2 9 2.5 9 4 8.5 5.5 8.5 6 7.5 7 6.5 8 6 9.5 5.5 9.5 4.5 10.5 3.5 11 3 11.5 2 12 .5 12 0 12.5-1 12-2 12-3 11.5-3.5 11-5 10.5-5 9.5-6 8-7 7.5-7 6-7.5 4.5-7.5 3-7.5 1-7.5-.5-7-2.5-6.5-4-6-5.5-5-6.5-4.5-8.5-3.5-9-3-10.5-2-11-1-11.5-.5-12 .5"/>
<path id="s252" d="M382 299l.5 3 .5 4-.5 5.5-1.5 7-2 8-2.5 9-3.5 9.5-4 11-4 11-5 11.5-5 11.5-5.5 11.5-5.5 11-6 11-6 10"/>
<path id="s253" d="M111 365l-6.5 5-5.5 5.5-4.5 6-3 6-2 6-1 6.5 .5 6 1.5 6.5 2.5 6 3 5.5"/>
<path id="s254" d="M236 184l12 1 12 2 11 2.5 11 4 10.5 4.5 10 5.5 9.5 6.5 8.5 6.5 7.5 8 7 8 6.5 9 5 9 4.5 10 3 10 2.5 10.5 1.5 11 .5 10.5-.5 11.5-1 11-2 11.5-3 11-3.5 11.5-4 11-4.5 11-5.5 11-6 10.5-6.5 10-7 10-7 9-8 9-8 8-8 7"/>
<path id="s255" d="M116 225l-7.5 8-7 8.5-6 9-5 9.5-4 9.5-3 10-2 10.5-1 10.5-.5 11 1 10.5 1.5 11 3 11 3.5 11 4.5 10.5 5.5 10.5 6.5 10 7 9.5 8 9 9 8.5 9.5 8 10 7"/>
<path id="s256" d="M340 245.5l-6.5-7.5-7-7.5-8-6-8-6-9-4.5-9-4-9.5-3-9.5-2-10-1.5-9.5 0-10.5 .5-10 2-10 2-10 3.5-10 4-10 4.5-9.5 5.5-9.5 6.5-9 6.5-8.5 7.5-8 8-8 8.5-7 9-6.5 9.5-6 9.5-5.5 10-4.5 10.5-3.5 10-3 10.5-2.5 10.5-1 10.5-.5 10.5 0 10 1 10 2 9.5 2.5 9 3 9 4 8 4.5 7.5 5.5 7 6 6 6.5 6"/>
<path id="s257" d="M374.5 326l-.5-9-1-9-2.5-9-3-9-4-8.5-5-9-5.5-8-7-8-7-7.5-8.5-7-8.5-7-9.5-6-10-5.5-10-4.5-11-4-11-3-11.5-2.5-11.5-1-12-.5-11.5 .5-12 1-11.5 2.5-11.5 3-11 3.5-11 4.5-10.5 5-10 6-9.5 6.5-9 7"/>
<path id="s258" d="M154.5 235l9.5-7 10-6.5 10.5-6 10.5-5.5 10.5-4.5 10.5-3.5 10.5-3 11-2 10.5-1.5 10.5-.5 10 .5 10 1.5 9.5 2 9 3 8.5 4 8 4.5 7 5"/>
<path id="s259" d="M340 359.5l8-2.5 7.5-2.5 7-2 6-1.5 5-1.5 3.5 0 3 0 2 1 1 1.5-.5 2.5"/>
<path id="s260" d="M162 476.5l1.5 1.5 1.5 0 2-.5 2-2 2.5-2.5 2.5-4 2.5-4.5 2.5-6 3-6.5 3-7 3.5-8"/>
<path id="s261" d="M192 180.5l-3.5 0-3.5 1-2.5 1.5-2 3-1 3 0 4.5 .5 5 1.5 5.5 2.5 6 3.5 7 4.5 7 5.5 7.5"/>
<path id="s262" d="M222 221l9.5-5 9-4.5 8.5-4 9-3 8.5-2.5 8-1.5 7.5-.5 7.5 0 7 1.5 7 1.5 6 3 5.5 3.5"/>
<path id="s263" d="M129.5 379.5l-8 2.5-6.5 2.5-6.5 2.5-5.5 2-4.5 1.5-4 1-3 .5-2 .5-1.5-.5-.5-1"/>
<path id="s264" d="M145 411.5l-7-8.5-7-9-6-9-5.5-9.5-5.5-9.5-4.5-9.5-4-9.5-3-9.5-2.5-9-2-9-1.5-8.5-.5-8 0-7.5 1-7 1.5-6 2-5.5"/>
<path id="s265" d="M111 226.5l6.5-7.5 7.5-6.5 8-5.5 8.5-5 9-4.5 9.5-3 10-2.5 10-1.5 10.5-.5 11 .5 11.5 1.5 11 2 11.5 3 11.5 3.5 11.5 4.5 11.5 5 11 5.5 11 6.5 11 7 10 7.5 10 8 9 9 8.5 9 8 9 7.5 9.5 6.5 9.5 6 9.5 5 9 4 9.5 3.5 9 2 9 1.5 9 .5 8.5-.5 8.5-2 8.5"/>
<path id="s266" d="M249 472l11.5-4 11-4.5 11-5 10.5-6 10.5-7 10-7 9.5-8 8.5-8.5 8.5-8.5 8-9 7-9 6-9 5.5-9.5 5-9 3.5-9.5 3-8.5 2-9 1-8 0-7.5"/>
<path id="s267" d="M378.5 362.5l-2.5 12-4 11.5-4.5 11.5-5.5 11-6.5 10.5-7 10-8 9-8.5 8.5-9.5 7.5-9.5 7-10.5 5.5-10.5 5-11 4-11 2.5-11.5 1.5-11 .5-11-.5-11-2-10.5-3-10-4-9.5-5-9.5-6-8.5-7-8-7.5-6.5-9-6.5-9-5-10-4-11-2.5-11-1.5-11.5-.5-11.5 .5-12"/>
<path id="s268" d="M335 314l7.5-3 7-2.5 6.5-1.5 6-.5 5 0 4 1.5 3.5 2 2.5 3.5 2 4.5 .5 5.5"/>
<path id="s269" d="M289.5 464.5l-7 3.5-7 2.5-7.5 2-8 .5-8 0-8-1-8.5-1.5-8.5-3-8-3.5-8.5-4.5-8.5-5-8.5-5.5-8.5-6.5-8.5-7-8.5-7-8.5-8-8-8-8-8.5-7.5-9-7-8.5-7-9-6-9-6-8.5-5.5-8.5-4.5-8-4-8-3-8-2.5-7-2-6.5-1-6.5 0-6 1-5.5 1.5-5.5"/>
<path id="s270" d="M241 480.5l10.5-1 10-2 10-3 9-3.5 9-4.5 8-5.5 7.5-6 6.5-7 6-7.5 5-8 4-8.5 3.5-9.5 2.5-9.5 2-10 1-10 0-10.5-.5-11-.5-11-1.5-11.5-1.5-11.5-2.5-11.5"/>
<path id="s271" d="M191.5 185.5l-8 1.5-8.5 3-7.5 4-7.5 4.5-7 5.5-7 6.5-6 7.5-6 8-5 8.5-4.5 9.5-4 10-2.5 10.5-2 10.5-1 11 0 11 1.5 11.5 2 11"/>
<path id="s272" d="M93 278.5l5.5-9 6-8.5 7-8 8-8 8.5-7.5 9-6.5 9.5-6 10-5.5 11-4.5 11-3.5 11-3 11.5-2 12-1 11.5 0 12 .5 11.5 1.5 12 2.5 11 3 11.5 4 10.5 5 10.5 5 9.5 6.5 9.5 6.5 8.5 7.5 8.5 8 7 8.5 6.5 8.5 6 9.5 5 9 4 10 3 9.5 2.5 10"/>
<path id="s273" d="M148.5 398.5l9 8.5 9.5 8 10 7.5 11 6 10.5 6 11.5 4.5 11.5 3.5 12 2.5 12 1.5 12 0 12-.5 11.5-2 11.5-2.5 11-4 10.5-5.5 10-6 9.5-7 8.5-7.5 7.5-9 7-9 6-10 5-10.5 4.5-10.5 3-11 2-11.5 1-12 0-11.5-1-12-2.5-11.5-3-11.5-4-11-5.5-11-6-10.5-7-10-8-9.5-8.5-8.5-9.5-8-10-7.5-10.5-6.5-11-5.5-11.5-4.5-12-4-12-2.5-12-2-12.5-.5"/>
<path id="s274" d="M341 276.5l6.5 10.5 5.5 11 5.5 11 4 11 4 11 3 11 2 11 1 10.5 .5 10.5-.5 10-1.5 9-2 9-2.5 8-3.5 7-4 6.5"/>
<path id="s275" d="M224 201l5-1 4.5 0 4.5 1 5 1.5 4.5 2.5 5 3.5 4.5 4 4.5 5 4.5 6 4.5 6.5 4.5 7 4 7.5 3.5 8.5 3.5 8.5 3 9.5 2.5 9.5 2.5 10"/>
<path id="s276" d="M284.5 242l-5-9.5-5.5-9-5.5-8-5.5-7-6-6.5-6.5-6-6.5-4.5-7-3.5-7.5-3-7.5-2-7.5-.5-8 0-8.5 1.5"/>
<path id="s277" d="M176 248.5l-9-3.5-9-2.5-9-2-8.5-.5-8.5 .5-7.5 1.5-7.5 2.5-7.5 4-6.5 4.5-5.5 6-5.5 7-4.5 7.5-4 8-3 9.5"/>
<path id="s278" d="M382.5 328l.5 11.5-1 11.5-1.5 11-2.5 11-3.5 10.5-4.5 9.5-5.5 9-6 8.5-7 8-8 7-8.5 6.5-9 5.5-9.5 5-10.5 4-10.5 3.5-11.5 2.5-11.5 2-11.5 1.5-12.5 1-12 0-12.5 0-12.5-1-12.5-1-12-1.5-11.5-1.5-11.5-2.5"/>
<path id="s279" d="M176 195.5l.5-1 1 0 1 .5 1 2 1 3 .5 4 1 4.5 .5 6 0 6.5 .5 8-.5 8-.5 9-1 10"/>
<path id="s280" d="M138.5 290.5l-9.5 4-9 4.5-8 5-7 6-6.5 7-5.5 7-4.5 8-3 8-2.5 8.5-1.5 8.5 0 8.5 .5 9 2 8.5 3 9 3.5 8.5"/>
<path id="s281" d="M364 348.5l-2.5 12.5-3 12.5-4 12.5-4.5 11.5-5.5 11.5-5.5 11.5-6.5 10.5-7 9.5-7.5 9.5-7.5 8.5-8 7.5-8 7-8 6-8 5-8 3.5-8 3-8 2"/>
<path id="s282" d="M340.5 418.5l4.5-11 4.5-11.5 3.5-12 3.5-12 3-12.5 2.5-12 2-12.5 1.5-12 1-11.5 .5-11.5 0-10.5-.5-10.5-1-9-2-9-2.5-7.5-2.5-7-3.5-5.5-3.5-5"/>
<path id="s283" d="M263.5 411.5l-4.5 9-4.5 8.5-5 8-6 6.5-6 6.5-6 5.5-6.5 4.5-6.5 3.5-6.5 3-6.5 2-6.5 1-6.5 .5-6.5-1-6-1.5-5.5-2.5"/>
<path id="s284" d="M116.5 306l0-12 .5-11.5 1.5-11.5 2.5-11 3.5-11 4-10 4.5-9.5 5-8.5 5.5-8.5 6.5-7 7-6.5 7-5.5 7.5-5 8.5-4 8-2.5 9-2"/>
<path id="s285" d="M198 188.5l10-1.5 9.5-1 10.5 0 10 1 10 1.5 9.5 3 9.5 4 9 4.5 8.5 5.5 8.5 6.5 7.5 7 7 8 6 8.5 6 9 5 10 4.5 10.5 3.5 10.5 2.5 11 2 11.5 1.5 11.5 .5 12-.5 12-.5 11.5-1.5 12-2 11.5-2.5 11.5-3 11.5-3.5 10.5-3.5 10.5-4 10-4 9-4 8.5-4.5 7.5-4.5 7-5 6-5 5-4.5 4.5-5 3-4.5 2"/>
<path id="s286" d="M253 190l-6.5-1.5-7-.5-7 0-7 1-6.5 2-7 3-7 4-7 5-7.5 5.5-7 6-7 7-7 7.5-7 8.5-6.5 9-6 9.5-6 9.5-5.5 10.5-5.5 10.5-4.5 11-4 11-3.5 11-2.5 11.5-2.5 11-1.5 11-1.5 11-.5 10.5 .5 10.5 .5 10 1 9.5 2 8.5 3 8.5 3.5 8 4 7.5 5 6.5 5.5 6.5 6.5 5.5 7 5 8 4"/>
<path id="s287" d="M176.5 439.5l9 8 9 7 9.5 6.5 10 5.5 10 5 10 3.5 9.5 3 9.5 2.5 9.5 1 9.5 .5 9-1 8.5-1.5 8-2.5 8-3.5 7.5-4.5"/>
<path id="s288" d="M359.5 264.5l-2.5-5.5-3.5-5-4-5-5-4-5.5-4-6.5-3-7-2.5-7.5-2-8.5-1.5-9-.5-9 0-10 .5-10 1.5-10 2-10.5 3-11 3"/>
<path id="s289" d="M248 180l-9-1.5-8.5-.5-8 .5-7.5 1.5-7.5 3-7 3.5-6 4-5.5 5.5-5 6.5-4.5 7-4 8-3.5 8.5-2.5 9-2.5 10-2 10.5-1 11"/>
<path id="s290" d="M274 239.5l-7.5-9-8-8.5-8-7.5-9-6.5-9.5-5.5-9.5-4.5-10-3.5-10-2-10.5-1.5-10 0-10 .5-10 2-9.5 3-9.5 4.5-9.5 5-8.5 6.5-8.5 7-8 8.5"/>
<path id="s291" d="M288 425.5l11-1 10-1.5 9.5-2 8.5-2.5 8-2 7-2.5 6-2 5.5-2 4-2 3-2 1.5-2.5"/>
<path id="s292" d="M218.5 492.5l-5 0-4.5-1-4.5-2-4-3-4-4-4-5-4-6-4-6.5-4-7.5-4-8.5-4.5-9-4-10-4-10.5"/>
<path id="s293" d="M283.5 253.5l9.5-1.5 9.5-1 9-.5 8.5-.5 7.5-.5 6.5 0 5.5 0 5 0 3.5 .5 2.5 0 1.5 .5 .5 .5"/>
<path id="s294" d="M123.5 317.5l-8-5-7-4.5-7-4.5-6-3.5-5-3.5-4.5-2.5-3.5-3-2.5-2-2-1.5-1-.5 0 0"/>
<path id="s295" d="M336 339.5l7.5 5.5 7 4.5 6.5 4 6 3.5 5 2.5 4 1.5 4 1 2.5-.5 2-2 1-2.5"/>
<path id="s296" d="M355 251.5l6 9 5 9.5 4 10 3 9.5 2 10 1 9.5-.5 9.5-1.5 9-2 9-3.5 8.5-4.5 8-5.5 7.5-6.5 7-7 6.5-8 6-8.5 5-9.5 4.5-10 4-11 3-11 2-11 1"/>
<path id="s297" d="M79.5 376.5l1 4.5 2 5 3.5 4.5 4.5 5 5 5 6.5 5.5 7.5 5.5 8 5.5 9 5.5 9.5 6 10.5 6 10.5 6 11 5.5 11 5 11.5 5 11 4.5 11.5 4 11 3.5 10.5 3 10 2.5 9 2"/>
<path id="s298" d="M371.5 321.5l-2 10.5-3 10.5-3.5 11-4.5 11-5 11-5.5 11-6 11-6.5 10.5-7 10-7.5 10-7.5 9.5-8 9-8 8-7.5 7.5-7.5 7-7.5 5.5-7 5-6.5 4-6 3-5.5 2-5 1"/>
<path id="s299" d="M100.5 402l3.5 7.5 4.5 7.5 5.5 6.5 6 6 6.5 5.5 7.5 5 7.5 4 8.5 3.5 9 2.5 9 2 9.5 1 9.5-.5 10-.5 10-2 10-2.5 9.5-4 10-4 10-5 9.5-5.5 9-6.5 9.5-7 8.5-7.5 8.5-8 7.5-8.5 7.5-9 7-9 6.5-9.5 5.5-9.5 5-10 4-10 3-10.5 2-10.5 1.5-10.5 0-10.5-1-10.5-2-10-3-10-4-9.5-4.5-9-5.5-8.5-6-8-7-7-7.5-6.5-8-6-9-5-9-4-9.5-3.5-10.5-2.5-10-1.5-10.5-1"/>
<path id="s300" d="M317.5 458.5l-3.5 3.5-5 2.5-5 2.5-6.5 1.5-6.5 .5-8 .5-8-.5-9-1.5-9-1.5-10-2-10.5-3-11-3-11.5-3.5-11.5-3.5-12-3.5-11.5-4-11.5-4-11-4"/>
<path id="s301" d="M352.5 278.5l1.5 2 .5 2.5 0 3.5-1 3.5-1.5 4.5-2.5 4.5-3 5-3.5 5.5-4.5 5.5-5 6-6 6-6 6-7 5.5-8 6-8 5.5"/>
<path id="s302" d="M359 264.5l3 5.5 2 6 1.5 7 1 7.5 0 7.5-1 8.5-1.5 9-2 9.5-2.5 9.5-3.5 10-4 10.5-4.5 10.5-5 10.5-6 10-6 10.5-7 9.5-7 9.5-7.5 9.5-7.5 8.5-8 8-8.5 7.5-8.5 7-8.5 6"/>
<path id="s303" d="M176 473l4 2.5 5 1.5 5 .5 5.5-.5 6-1 6-2 6.5-3 7.5-3.5 7.5-4 8.5-5 8.5-5 9-6 9-6 9.5-7 9-7 9.5-7.5 9-7 9.5-7.5 8.5-7.5 8.5-7.5 8-7.5 7.5-7 7-7 6-7 5.5-6 4.5-6 4-4.5 3-4 2-3.5 1-2.5"/>
<path id="s304" d="M94.5 267l4-7.5 4-7.5 5.5-6.5 6-6.5 6.5-5.5 7.5-5 8.5-4.5 8.5-4 9.5-3.5 10-3 11-2 10.5-1.5 11.5-1 11.5 .5 11.5 .5 11.5 1.5 11.5 2.5 11.5 3 11.5 4 11 4.5 10.5 5.5 10 6 10 7 9 7.5 8.5 8.5 8 8.5 7 9.5 6 10"/>
<path id="s305" d="M330 451l-3.5 4.5-5 3.5-5.5 3.5-6.5 2.5-7.5 2.5-8 1.5-9 1-9.5 0-10 0-11-1-11-1-11.5-2-11.5-2.5-12-3.5-12-3.5-11.5-4.5-11.5-4.5-11.5-5.5-11-5.5-10.5-6-10-6-9.5-6.5-8.5-7"/>
<path id="s306" d="M93 263.5l5-9 5.5-9 6.5-8 7.5-8 8-7 8.5-6 9.5-5.5 9.5-4.5 10-4 10.5-3 11-1.5 10.5-1 11.5 0 11 1 11 2.5 11 2.5 11 4 10.5 5 10 5.5 9.5 7 9.5 7.5 8.5 8 8 9 6.5 10 6 10.5 5 11 3.5 11.5 2.5 12 1 12"/>
<path id="s307" d="M350 407l1.5-7 1-7 0-8 0-8.5-1-9-2-9.5-2-9.5-2.5-10.5-3-10.5-3.5-10.5-3.5-11-4-11-4.5-10.5-4.5-10.5-5-10-5-10-5.5-9-5.5-9-6-8-5.5-7.5-6-7-5.5-5.5-5.5-5-5-4-4.5-3.5-4-2-3.5-1"/>
<path id="s308" d="M149 199l-5 3-4 3-2 3.5-.5 3.5 .5 3.5 3 3.5 4 3.5 6 3.5 7 3 8.5 2.5 9.5 2.5 10.5 2.5 11.5 2"/>
<path id="s309" d="M374 331l.5 9-.5 9-2 8.5-2.5 8.5-3 8.5-4.5 7.5-5 7-6 7-7 6-7.5 5.5-8 5-8.5 4.5-9.5 4-10 3.5-10.5 3-10.5 2.5-11.5 1.5-11 1-11.5 .5-12-1-11.5-1.5"/>
<path id="s310" d="M215.5 489l4 1 4.5 0 5-1 5.5-2 5.5-2.5 6-4 6-4.5 6-5.5 6-6.5 6.5-7.5 6-8 6-8.5 6-9 6-10 6-10.5 5.5-10.5"/>
<path id="s311" d="M139 252l9.5-7.5 10-7 10-6.5 10.5-6 11-5.5 11-4.5 11-4 11.5-3 11-2 11.5-1.5 11-1 10.5 0 10.5 1 10.5 1.5 9.5 2.5 9.5 3 8.5 4 8 4.5 7.5 5.5 6.5 5.5 5 5.5"/>
<path id="s312" d="M241.5 234l-6.5-8.5-6-8-6.5-7-6.5-6.5-6.5-5-6.5-4.5-7-3.5-6.5-2-7-1.5-7 0-7 1-6.5 2-6.5 3"/>
<path id="s313" d="M83 320l-1 11.5 .5 11.5 1.5 11.5 2 11.5 3 11 4 10.5 5 10 5.5 10 6.5 8.5 7 8.5 8 7.5 8.5 6.5 9 5.5 9.5 4.5 9.5 4 10 2.5 10 1.5 10.5 .5 10.5-1 10-1.5 10-3 10-3.5 9.5-4.5 9.5-6 8.5-6.5 8.5-7.5 7.5-8 7-9 6-9.5 5.5-10 5-10.5 4-11 3-11"/>
<path id="s314" d="M86 407.5l-4.5-6.5-3-7-1.5-7-.5-6.5 .5-6 1.5-6 3-5.5 4.5-4.5 5-4.5 6.5-3 7.5-2.5 8.5-1.5 9.5-.5 10 .5 10.5 1"/>
<path id="s315" d="M287 287.5l10-2 9.5-1 9.5-.5 9 1 8.5 1.5 8 2.5 7 3.5 6.5 4 6 5 4.5 5 4 6.5 3 7 2 7.5 1 8.5 0 9-1 9.5"/>
<path id="s316" d="M374.5 277.5l4 8.5 2.5 8.5 1.5 9 1 9-.5 8.5-1.5 8.5-2.5 8.5-3.5 9-4.5 8.5-5 8.5-6.5 8.5-6.5 8.5-8 8.5-8 8-9 8-9.5 8.5-9.5 8-10 8-10 7.5-10 7.5-10 7-10 6.5-9.5 6-9.5 5.5-9.5 4.5-8.5 4-8.5 3.5-8 2-7.5 1.5"/>
<path id="s317" d="M169 217.5l-6 7-6 8-6 8-6 9-5.5 9.5-5 10-4.5 10-4.5 10.5-3 11-3 11-2 11.5-2 11-.5 11.5-.5 11 .5 11 1 11 2 10.5 2.5 10 3 10 3.5 9 4 8.5 4.5 8 5 7 5 6.5 6 6 6.5 5 6.5 4 6.5 3"/>
<path id="s318" d="M225 179l-12.5 .5-12 1.5-12.5 2.5-12 3.5-11.5 5-11 5.5-10.5 6.5-9.5 7.5-8.5 8-7.5 9-6.5 9.5-5.5 9.5-4.5 10.5-4 11-2.5 11-1.5 11.5-1 11.5 .5 12 1 11.5 2.5 12 3 11.5 4 12 4.5 11 6 11 6.5 11 7 10 8 10 9 9 9 8.5 9.5 8 10 7.5 10.5 6 11 5.5 11.5 5 11 3.5 11.5 3 11.5 2 11.5 1.5 11 .5 11-.5 10.5-1.5"/>
<path id="s319" d="M104.5 318l1.5-13 2.5-12.5 3-12.5 3.5-11.5 3.5-11.5 4-11 4.5-10.5 4-9.5 4.5-8.5 5-7.5 4.5-7 4.5-5.5 5-5 4.5-3 4-2.5"/>
<path id="s320" d="M243.5 465l11.5-3.5 11.5-5 11-5.5 10.5-6.5 10-7 9.5-7.5 9.5-8.5 8.5-9 8-9 7.5-10 7-9.5 6-10.5 5.5-10 4.5-10 4-10.5 3-10.5 2-10.5 1-10 .5-9.5-.5-9.5-1.5-9-2-8.5-3-8.5-4-7.5"/>
<path id="s321" d="M230 437.5l-4.5 8.5-4.5 8-4 7.5-3 7-3 5.5-2.5 5.5-2 4-1 3.5-.5 2.5 0 1.5 1 .5"/>
<path id="s322" d="M369.5 381l-1.5 4.5-2 4.5-3.5 4.5-4 4-5 4-6 3.5-7 3.5-7.5 3-8.5 3-9 2.5-9.5 2.5-10 2-11 2.5-11 2-11.5 2-12 2-11.5 2-12 2-11.5 2.5-11 1.5-11 2-10 2-9.5 1.5-9 1-8 1-7.5 .5-6.5 .5-5 0-4.5-.5-4-.5-2.5-1.5-2-2"/>
<path id="s323" d="M227.5 488.5l-12-.5-12-2-11-2.5-11-3.5-10.5-4-9.5-5.5-9-6-8-7-7-7.5-6-8.5-5-8.5-4.5-9.5-3.5-10-3-10.5-2-11-1.5-11-.5-11.5 .5-11.5 1-12 1.5-12 2.5-12 3-11.5 4-12 4.5-11.5 5.5-11 6-10.5 7-10 7.5-9.5 8.5-8.5 9-8 9.5-7 10-6.5 10.5-5.5 11-4.5 10.5-3.5 11-2.5 11.5-1.5 11-1 10.5 0 10.5 1.5 10.5 1.5 10 3 9.5 4 9.5 4.5 8.5 6 8 6 7.5 7.5"/>
<path id="s324" d="M286.5 414.5l8 5 8 4.5 7 3.5 7 3.5 6.5 2.5 5.5 2 4.5 1.5 4 1 3 .5 2.5 0 1.5-1"/>
<path id="s325" d="M315 455.5l-1.5 2-2.5 1.5-3 1-4 .5-5.5 0-5.5-.5-7-1-7.5-1.5-8-2-9-2.5-9-3-9.5-3.5-10-4-10.5-4.5-10.5-4.5-11-4.5-11-5-10.5-5.5-11-5-10.5-5-10.5-5-9.5-4.5-9.5-5-8.5-5-8-4.5-7.5-5-6.5-5-5.5-5-5-5.5-4-5.5-3-5.5-2-5.5-1-5 0-5.5"/>
<path id="s326" d="M299.5 363.5l8 5 8 4.5 7.5 4 7 3 6.5 2 6 2 5.5 1.5 5 .5 4 0 3-.5 2.5-1 2-1.5 .5-2"/>
<path id="s327" d="M347.5 230l7.5 9.5 7 10 6 10.5 5.5 11 4 11.5 3.5 11.5 2 11.5 1 12 .5 12-1 12-2 12-2.5 12-4 11.5-4.5 11.5-6 10.5-6.5 10.5-7.5 10-8.5 9-9 8.5-9.5 7.5-10.5 7-11 5.5-11.5 5-12 3.5-12 3-12.5 1.5-12.5 .5-12.5-.5-12.5-1.5-12.5-2.5-12.5-3.5-11.5-4.5-11.5-6-11-6.5-10-7.5-9.5-8.5-8.5-9.5-7.5-10.5-6-11-5-11.5-4-12-3-12.5-1.5-12.5-.5-13 1-12.5 1.5-12.5 3-12.5 4-12 5-12 6.5-11 7-10.5 8.5-9.5"/>
<path id="s328" d="M227.5 186l-9.5 .5-9.5 2-9 2.5-9 3.5-8.5 4-8.5 5.5-7.5 6-7 7-6.5 7.5-6 8.5-5.5 9-5 9.5-4.5 10-3.5 10.5-3 11-2.5 11.5-1.5 11.5-1 11.5 0 12 .5 12 1.5 11.5 2.5 11.5 3 11.5 4 11 5 11 5 10.5 5.5 9.5 6.5 9.5 6 9 7 8 7 7.5 7 7 7.5 6 7.5 5 7.5 4.5 7.5 3.5 7.5 2.5 7.5 1.5 7 1 7-.5"/>
<path id="s329" d="M178.5 425.5l10.5 6.5 11 5.5 11.5 5 11 4 11.5 3 11.5 2.5 11.5 2 11.5 .5 11-.5 11-1.5 10.5-2 10.5-3.5 10-4.5 9.5-5.5 8.5-6 8-7 7.5-8 6.5-8 6-9 4.5-9.5 4-9.5 3-10 2-10.5"/>
<path id="s330" d="M74 369l1.5 5.5 2 6 3.5 5.5 4 5.5 5 6 6.5 5.5 7 5.5 8 5 8.5 5 9.5 4.5 10 4.5 11 3.5 11 3.5 11.5 3 12 3 12.5 2 12 2"/>
<path id="s331" d="M294.5 460l4.5-6.5 5-7.5 4.5-8.5 4-8.5 4.5-10 4-10 3.5-10.5 3.5-11.5 3.5-11 2.5-12 2-11.5 2-12 .5-12 .5-12 0-11.5-1-11.5-1.5-11.5-2-11-2.5-10.5-3-9.5-4-9.5-4.5-9-5.5-8-6-8-6.5-6.5-7.5-6.5-8.5-5-9-5-9.5-3.5-10-3-11-1.5-10.5-1"/>
<path id="s332" d="M140.5 416l9.5 6 10 5.5 10.5 5.5 10.5 4.5 11 4 11.5 3.5 11 3 11.5 2 11.5 1.5 11 1 11.5 0 10.5-.5 10.5-1 10-2 9.5-2 9-2.5 8-3 7-3 6.5-3.5 5.5-4 4.5-4 3.5-4"/>
<path id="s333" d="M274 258.5l10.5-2 10-1.5 10-1 9-.5 9 0 8 .5 7.5 2 7 2 6.5 3 5.5 3.5 5 4 4 4.5 3 5.5 2.5 5.5"/>
<path id="s334" d="M109 430l-.5 .5 .5 1 2 1 3.5 .5 4.5 1 5.5 1 7 .5 7.5 1 9 1 9.5 .5 10.5 1 11 1 11.5 1 12 .5 12.5 1 12 .5 12 1 12 .5"/>
<path id="s335" d="M78.5 302.5l0-1.5 1.5-2.5 2.5-3 3.5-4 4.5-4 5.5-5 6.5-5.5 7.5-5.5 8-5.5 9-6 9.5-6 9.5-6 10.5-6 10.5-5.5 11-5.5 11-6 10.5-5 10.5-5 10-5 9.5-4.5 9-3.5 8.5-3.5 7.5-2.5 7-2.5"/>
<path id="s336" d="M162.5 450l-6.5-8-6.5-8.5-6-9-6-10-5.5-10-5.5-10.5-5-11-5-11-4.5-11-4-11-3.5-11-3-10-3-10-2.5-9.5-1.5-9-1.5-8-1-7 0-6.5 0-5 .5-4.5 1.5-3"/>
<path id="s337" d="M323 210.5l2.5 1.5 1.5 2 1.5 3 0 3.5-.5 4-1 4.5-2 5.5-2.5 6-3.5 6-4.5 7-4.5 7-5.5 8-5.5 8-6 9"/>
<path id="s338" d="M196.5 411l-5 8.5-4.5 8.5-4.5 7.5-4 7-3.5 6.5-3 6-2 5.5-1.5 4.5-1 4 0 3 .5 2.5 1 1.5 1.5 1"/>
<path id="s339" d="M72 333.5l-.5-4.5 1-5 1.5-4 3-4.5 3.5-3.5 4.5-4 5.5-4 6.5-3.5 7-3.5 8-3 9-3 9-3 10.5-2 10.5-2 11-1"/>
<path id="s340" d="M373 388.5l3-8.5 2-8.5 1.5-8.5 0-8-1-8.5-2-8.5-3-7.5-4-7.5-5.5-7-5.5-6.5-7-6-8-5.5-8.5-4.5-9.5-4-9.5-3-10.5-2-11-1-11.5 0"/>
<path id="s341" d="M92.5 420l5 8 5 7 5.5 5.5 6 4 6 3 6 1.5 6.5 0 6-1.5 5.5-3 6-4.5 5-6 5-7 4-8.5 3-10 2-10.5 1-12"/>
<path id="s342" d="M142 427.5l-2.5-7.5-2.5-8.5-2-9-1.5-9-1-10-1-10.5-.5-10.5 0-10.5 0-11 0-11 .5-11.5 .5-10.5 1-11 1-10.5 1.5-10 2-9.5 2-9 2.5-8.5 2.5-8 3.5-7 3.5-6.5 3.5-6 4-5 4.5-4 4.5-3 4.5-2.5"/>
<path id="s343" d="M340 446.5l3-2.5 2-3.5 2-4.5 1.5-5 .5-6 0-7-.5-7-1.5-8-2-8.5-3-8.5-3.5-9-4.5-9.5-4.5-10-5.5-9.5-6-10.5"/>
<path id="s344" d="M305 464.5l-6 4-6 2.5-7 2-7 1.5-7.5 0-8-.5-8.5-1-9-2-9-3-9-3.5-9.5-4.5-9.5-5-10-5.5-9.5-6.5-9.5-6.5-9.5-7.5-9.5-7.5-9-8-8.5-8.5-8.5-8.5-8.5-8.5-7.5-8.5"/>
<path id="s345" d="M350 234l-3.5-5-4-5-5.5-4-6-3.5-7-3.5-8.5-3-8.5-2.5-10-1.5-10-1.5-11-.5-11 0-11.5 1-11.5 1.5-12 2.5-12 3-11.5 4-12 4.5-11 5.5-11.5 6.5-10.5 6.5-10.5 7.5-10 8"/>
<path id="s346" d="M375.5 304l1.5 2.5 0 3-1 3-1.5 3.5-2.5 3.5-3.5 4-4.5 4.5-5 5-5.5 5.5-6.5 6.5-7 6.5-7.5 7.5-7.5 8-8 8-8 8.5-8.5 9-8 9.5-7.5 9-7.5 9-7.5 9-7 8.5-7 8-6 7-6 7-5 6.5-5 5.5-4.5 4.5-3.5 3.5-3.5 3-2.5 2-2 1.5-1 0"/>
<path id="s347" d="M363 288l-6.5-9.5-7.5-9-8.5-8.5-9-8-9.5-7-10.5-7-10.5-6-11.5-5.5-11.5-5-12-4.5-12-4-12.5-3-12-3-12-2-12-1.5-12-.5-11.5 0-11 1-11 2-10.5 3-10 3-9.5 4.5-8.5 4.5-8 5.5-7 6-6 6.5-5.5 7-4.5 7.5"/>
<path id="s348" d="M89.5 400l3 7.5 4 7 5 6.5 6 6 6.5 6 7.5 5 8 4 8.5 4 9 2.5 9.5 2 10 1.5 10.5 .5 10.5-.5 11-1.5 11-1.5 11-3 11-3.5 11.5-4 11-5 10.5-5.5 10.5-6.5 10-7 9.5-7.5"/>
<path id="s349" d="M157.5 475l9 3 9 1.5 9 1 9.5 0 9.5-1.5 10-2 9.5-2.5 10-4 10-5 9.5-5.5 9.5-6.5 9-7 9-8 9-8.5 8-9 8-9.5 7.5-10 7.5-10.5 7-10.5 6-11 5.5-11 5-11 4-11.5 3.5-11 2.5-11 2-11.5 .5-11 0-11-1.5-10.5-2-10-3-10-4-9.5-5-9-6-8.5-6.5-7.5-7.5-7.5-8.5-6-9-6-9.5-4.5"/>
<path id="s350" d="M258.5 179l-.5-.5-.5 0-1 1.5-1.5 2-2 3.5-2.5 4-3.5 4.5-4.5 5.5-5 6-6.5 7-6.5 7-7.5 7.5-8 8-8.5 8.5-8.5 8.5"/>
<path id="s351" d="M226 417l10 4.5 9.5 4.5 9.5 4 9 4 8.5 3 8 3.5 7.5 2.5 6.5 2.5 5.5 2 5 1.5 4.5 .5 3.5 .5 3-.5 2.5-1"/>
<path id="s352" d="M161.5 274l2.5-11.5 2.5-10.5 2.5-10 3-9.5 3-9 3.5-8.5 3.5-7 3.5-7 4-5.5 4-5 4-3.5 3.5-3 4-2 4-1"/>
<path id="s353" d="M343.5 315.5l-3 11-2.5 11-3 11-3.5 11.5-3.5 11.5-3.5 11-3.5 11.5-4 10.5-3.5 10.5-4 9.5-3.5 9-3 8.5-3 7-2.5 6.5-2 5-1.5 4-1.5 2.5-.5 1.5-.5 .5"/>
<path id="s354" d="M88.5 342l.5 6 1 6 2 6 3 6.5 3.5 6.5 5 6 5 6.5 6.5 6 7 5.5 7.5 5.5 8 5 9 4 9 3.5 10 3 10 2.5 10.5 2 10.5 1.5 11 1 11 .5 11.5 0 11-.5 11-1 11-1.5 10.5-2.5 10.5-2 10-3"/>
<path id="s355" d="M219 306.5l7.5-8.5 8-8.5 8.5-8 8.5-7 8.5-6 9-5.5 9-4 9.5-3 9.5-2 9-.5 9 .5 8.5 2 8.5 2.5 7.5 4.5 7.5 5.5 6.5 6.5 5.5 8 5 8.5 4 10 3 10.5 2 11 .5 11.5 0 12-1.5 11.5-2.5 11.5-3.5 11.5-4 10.5-5.5 10.5-6 9-7 8.5-7.5 7.5-8.5 6-8.5 5.5-9 3.5-9 2.5-9 1-9 0-9-2-8.5-3-8-4.5-7-6-7-7"/>
<path id="s356" d="M363.5 377l-2.5 8.5-3.5 7.5-3.5 6.5-5 6.5-5 5-5.5 4-6 3.5-6.5 1.5-7 1-6.5-1-7-1.5-7-3-7-4-7-5-6.5-6.5-6-7.5-5-8.5-5-9.5-4.5-9.5-3.5-10.5"/>
<path id="s357" d="M98 414.5l-6-11-5-11.5-4-11.5-3-12.5-2-12-.5-12.5 0-12.5 1.5-12.5 2.5-12 3.5-12 5-11 5.5-11 7-10 7.5-9.5 8.5-9 9-8 10-7 10.5-6 11-5 11.5-4 12-3 12-1.5 12.5-.5 12 .5 12 2 12 3.5 11.5 4 11 5.5 11 6 10 7 10 8 9 8.5"/>
<path id="s358" d="M329.5 396l3.5-12 3.5-12.5 3-12 3-12.5 2.5-12 2.5-12 2-11.5 2-11.5 2-10.5 1-9.5 1-9.5 0-8.5-.5-8-1-7-1.5-6.5-2.5-5.5-3-5-3.5-4"/>
<path id="s359" d="M165 471.5l.5 1 1.5 .5 2-.5 3-1 3.5-1.5 4.5-2.5 5.5-3 6-3.5 7-4 7.5-4.5 8-5 8.5-5 9-6 9.5-6 10-6.5 10-6 10-6.5 10.5-6.5 10-6.5 10-6 10-6 9.5-5.5 9-5.5 8.5-5 7.5-4.5 7.5-4.5 6-3.5 5.5-3 4.5-2 3.5-2 3-.5 1.5 .5 .5 1"/>
<path id="s360" d="M152 468l7 4 6 2.5 5.5 1.5 5-.5 4-1.5 3-3 2-4.5 1-5.5 0-7-1-7.5-2-9-2.5-9-4-10-4.5-10.5-5-10.5-6-10.5-6.5-10.5"/>
<path id="s361" d="M360 266l3 4 2 4 1 5 .5 5.5-.5 6-1 6.5-2 7.5-2.5 7.5-3 8.5-4 8.5-4 9.5-5 9-6 9.5-6 9.5-7 9-7 9.5-8 9-8 9-8 8.5-8.5 8.5-8.5 8-8.5 8-8 7-8.5 7-8 6-8 5.5-7.5 5-7.5 4-7 3.5"/>
<path id="s362" d="M363.5 300l.5-1.5-.5-1-1-1-2-.5-3-.5-4 0-4.5 0-5.5 .5-6 .5-6.5 1.5-7.5 1.5-8 2-8.5 2-8.5 3-9.5 3-9.5 3.5-10 3-10.5 3.5"/>
<path id="s363" d="M299.5 469.5l11-5 10-6 10-7 9.5-8 8.5-9 7.5-10 7-10.5 6-11 5-12 4-12 2.5-12 1.5-12 .5-12-1-12-2-11-3.5-10.5-4.5-9.5-5.5-9-6.5-8.5-7.5-7-8-6-9-4.5-9.5-3.5-10-2.5-10.5-.5-10.5 .5-11 1.5-11 2.5-11 3.5-11.5 4.5-11 5-10.5 6-11 7-10 7"/>
<path id="s364" d="M157 462.5l3.5 2.5 4.5 2 5.5 1.5 5.5 .5 6.5 0 6.5-1 7.5-2 7.5-2.5 7.5-3 8-4 8-5 8-5.5 8-6 8-7 7.5-7.5 7.5-8.5 7-8.5 6.5-9.5 6.5-9.5 6.5-10 6-10 6-10 5.5-10 5.5-10 4.5-10 5-9.5 4-9.5 4-9 3.5-8.5 3-7.5 2.5-7.5 2-6.5 1.5-6 1-5 1-4 0-3.5-.5-2.5-1-2"/>
<path id="s365" d="M145.5 389l-9.5-8-8.5-8-8.5-7.5-7.5-8-7.5-7.5-6.5-7.5-5.5-7-5-6.5-4.5-6-3.5-5.5-2.5-5-2-4.5-.5-4 0-3"/>
<path id="s366" d="M161.5 332l0-11 1-10.5 .5-10.5 1.5-10.5 1.5-10 2-9.5 2-9 2.5-9 3-8 3.5-8 3.5-7 3.5-6 4-6 4.5-4.5 4.5-4.5 5-3 5-2.5 5.5-2 5-.5"/>
<path id="s367" d="M253.5 268.5l10.5-4.5 10.5-4 9.5-3.5 10-3 9-2.5 9-2 8-1.5 8-.5 7 0 6.5 1 6.5 2 5 2.5 5 3.5 4 4 3 4 2 5"/>
<path id="s368" d="M345 231l7 7.5 6 8 4.5 8.5 4 8.5 2.5 8.5 1.5 8.5 0 8.5-1 8-2.5 8-3.5 7-5 6.5-6 6-7 5-8 4.5-9 3-10 2.5-10.5 1.5-11 .5-11.5-.5-11.5-1.5"/>
<path id="s369" d="M102.5 235l-4 4.5-3.5 5.5-2.5 6.5-2 6.5-1 8-.5 8 .5 8.5 1.5 9 2 9.5 2.5 10 3.5 10.5 4 10.5 4.5 10.5 5.5 11 6 10.5 6.5 10.5 7.5 10.5 7.5 10.5 7.5 10 8 10 7.5 10 8 9 8 9 8 8.5 7.5 7.5 7.5 7.5 7 6 6.5 5.5 6 5 5.5 4 5 3 4.5 2 4 1"/>
<path id="s370" d="M201 220l11 3 11 3.5 11.5 4.5 11 5.5 10.5 6 10.5 6.5 10.5 7.5 9.5 7.5 9.5 8.5 8.5 9 8.5 9.5 7.5 10 6.5 10.5 5.5 10.5 5 11 3.5 11.5 2.5 11.5 1.5 11.5 .5 11.5-1 11.5-1.5 11-2.5 10.5-3.5 10.5-4.5 10-5.5 9-7 9-7.5 8-8 7.5-9.5 6.5-10 5.5-10.5 4.5-11.5 4-12 2.5-12 1.5-12.5 1-12.5-.5-12.5-2-12.5-2.5-12-3.5-11.5-4.5-11-6-10-6.5"/>
<path id="s371" d="M125.5 430.5l3 4.5 4 4 4.5 3.5 5.5 2.5 5.5 2 6 1 7 .5 7 0 7.5-1 8-1 8.5-2.5 9-2.5 9-3.5 9-3.5 9.5-4.5 9.5-5 9.5-5 9.5-5.5 9.5-6 9.5-6.5 9-6.5 9-7 8.5-7 8-7.5 7.5-7.5 7-7"/>
<path id="s372" d="M209 400.5l4 10.5 3.5 10 4 9.5 3.5 9 4 8.5 3 7.5 3 7 3 6 2.5 5.5 2.5 4.5 2 3.5 2 2.5 2 1.5 2 .5 2 0"/>
<path id="s373" d="M274.5 279l7-8 6.5-8 6.5-7.5 6-7 5.5-6 4.5-6 4-5.5 3.5-4.5 3-4.5 2-3.5 1.5-3 .5-2 0-1.5-.5-1"/>
<path id="s374" d="M255.5 185l4 .5 4 1.5 3.5 2 3 3 3.5 4.5 3.5 5 3.5 6 3.5 7 4 8 4 8.5 4 9 4.5 10 5 10.5 5 10.5 5.5 11 5 11 5.5 11 5.5 10.5 5 10.5 4.5 10 4.5 10"/>
<path id="s375" d="M95.5 274l1-3 1.5-3 3-3.5 4-3.5 5-3 5.5-3 6.5-2.5 7.5-2.5 8-2.5 9-2 9.5-2 10-2 10.5-1 11-1 11.5-.5 11 .5 11.5 0 12 1 11.5 1 11.5 1 11 1.5 11.5 2 10.5 2 10 2.5 10 2.5 9 2.5 8.5 2.5"/>
<path id="s376" d="M151.5 245l11-5.5 11.5-4.5 11.5-4 12-3.5 12.5-3 12.5-1.5 12.5-1 12.5 0 12 .5 12.5 2 12 2.5 11.5 3.5 11 4.5 10.5 5 10 5.5 9.5 6 8.5 6.5 8 7 7 7.5 6.5 8.5 5.5 8.5 4.5 9 3.5 9.5 2.5 9.5 1.5 10 .5 10-.5 10.5"/>
<path id="s377" d="M163 345l-8.5-9-8.5-8-8.5-6.5-9-6-8.5-4.5-8-3-8-2-7-.5-6.5 1-6 2.5-5 4-4 5.5-3 6.5-2 7.5-1 8 .5 9.5 1.5 10"/>
<path id="s378" d="M366 264l1 0-.5 0-1.5-.5-2.5 0-3.5-.5-5-.5-6-1-7-1.5-8-1.5-9-1.5-9.5-2-11-2.5-11-2.5-11.5-2.5-12-3-12-3.5-12-3.5-11.5-3.5-11.5-4-10.5-4-10-4.5-9-4-8-4.5-6.5-4-5.5-4-3.5-4-2-3.5-.5-3"/>
<path id="s379" d="M96.5 252.5l.5-1 1 .5 1 1 2 2.5 2 3 3 4.5 3 5.5 3 6.5 3.5 7.5 3.5 8 4 9.5 4 9.5 4 10.5 4.5 11 4 11.5 3.5 11.5 3.5 12 3.5 12 3 11.5 2.5 11.5 2 11 1.5 10 .5 9.5 .5 8.5 0 7.5-.5 7-.5 5-1 4.5-1.5 3-2 2-2.5 0-2.5-1"/>
<path id="s380" d="M89.5 353.5l-1.5-1.5 0-1 1-.5 2 .5 2.5 1 4 2 4.5 3 5.5 3.5 6 4 7 4.5 7.5 4.5 8 4.5 9 4.5 9 4.5 9.5 4 10 3.5 10.5 3.5 11 2.5 11 2 11 2 11 1.5 11 .5"/>
<path id="s381" d="M98.5 332.5l3.5 11.5 4.5 11.5 4.5 11.5 5.5 11.5 5.5 11.5 6 11.5 6.5 11 6.5 10.5 7 10 7 9.5 7 9 7 8.5 7 7.5 7 6.5 7 6 6.5 4.5 7 4 6 3 6.5 2 5.5 1"/>
<path id="s382" d="M148 383l8 8.5 8 8.5 8.5 8 8.5 8 8.5 7.5 8.5 7.5 8 7 7.5 6.5 7 6.5 7 5.5 6 5.5 5.5 4.5 5 3.5 4 3.5 3.5 2 3 2 1.5 .5 1 0"/>
<path id="s383" d="M155 459.5l8.5 3 9 2 9.5 1.5 9.5 .5 9.5-.5 10.5-1 10-2 10-3 10-4 10-4.5 9.5-5.5 9-6 9-7 8.5-8 8.5-8 7.5-8.5 8-9 7-9 6.5-9.5 6.5-10 5.5-10 5-10 4-9.5 4-10 3-9.5 2.5-9.5 1.5-9 1.5-8.5"/>
<path id="s384" d="M343.5 245.5l4 4 3 5 3 5.5 2 6.5 1 7 1 7.5 0 8-1 8.5-1.5 8.5-2.5 9-3 9.5-4 9-5 9-5.5 8.5-6.5 8.5-7.5 7.5-8 8-9 7-9 7-9.5 6-10.5 6-10.5 5-11 4-11 4-11 3.5-11.5 2.5-11.5 2-11 1-11 .5-11-.5-10.5-.5-10-1.5-9.5-2-9.5-2.5-8.5-3-8-4-7-4-6.5-4.5-6-5-5-5.5-4-5.5-3-6.5"/>
<path id="s385" d="M256.5 401l-9.5 7.5-9.5 6.5-10 6-10 5.5-10 5-9.5 4-10 3.5-9.5 2.5-9 2-9 1-9 .5-8-.5-7.5-1.5-7-2-6.5-2.5-6-3-5-4-4-4.5-3.5-4.5"/>
<path id="s386" d="M346.5 321.5l2.5 12.5 .5 12.5 0 13-2 12.5-3 12-4.5 12-5 11.5-6.5 11-7 10.5-8.5 9.5-8.5 8.5-10 8-10 7-11 6-11.5 5-12 4-12 2.5-12.5 1.5-12.5 .5-12.5-.5-12.5-2-12.5-3-12-4.5-11.5-5-11-6.5-10-7.5-10-8.5-9-9-7.5-10-7-11-6-11-4.5-12-3-12-1.5-12 0-11.5 2-11.5 3-10 5-9 6.5-7.5 7.5-6 9-3.5 9.5-2 10 .5"/>
<path id="s387" d="M365 302l-1.5-7.5-2.5-7.5-3.5-7-4-6.5-5-6.5-6-5.5-6-5-7-4.5-7.5-3.5-8.5-3-8.5-2-9-1.5-9.5-1-9.5 0-10.5 .5-10 1-10.5 2-10.5 2.5-10.5 3.5-10 4.5-10 5-9.5 5.5-9.5 6.5-9 7-8.5 7.5-8 8-7 8.5"/>
<path id="s388" d="M160 314.5l-4-11-2.5-11.5-2-11-1-11 0-10.5 .5-10.5 1.5-10 2.5-9 3-9 4-8 5-7.5 5-6.5 5.5-5.5 6-4.5 6-4 7-3 7-2 7.5-1"/>
<path id="s389" d="M324.5 263.5l-9.5-8.5-10-7.5-10.5-7.5-10.5-7.5-10.5-7-11-6-11-6-10.5-5.5-10-5-10-4.5-9-4-9-3-8-2.5-7.5-2-7-1-6-.5-5.5 .5-4.5 1"/>
<path id="s390" d="M303.5 463.5l-2 2.5-3 2-3 1-4-.5-3.5-1-4-2-4.5-2.5-4.5-4-5-4.5-5-5-5-6.5-5.5-6.5-5.5-7.5-5.5-8-6-8.5-6.5-9-6-9.5-6.5-9.5-7-10"/>
<path id="s391" d="M97.5 278.5l-4.5 11.5-3.5 12.5-2.5 12-1 13-.5 12.5 1 12.5 2.5 12.5 3 12.5 4.5 12 5 11.5 6.5 10.5 7.5 10.5 8 9.5 9 9 10 7.5 11 7 11 5.5 12 4.5 12 3 12.5 2.5 12.5 .5 12.5-.5 12.5-1.5 12-3 12-4 11-5.5 11-6 10-7.5 9.5-8.5 8.5-9 7-10"/>
<path id="s392" d="M291.5 354l11 1.5 10 1.5 10 2 9 2 8 2 7.5 2.5 6.5 2.5 6 2 4.5 3 4 2.5 2.5 3 2 2.5 1 2.5-.5 2.5"/>
<path id="s393" d="M224 482.5l1.5 1 1 .5 1-1 1-2 1-2.5 1-4 .5-4.5 .5-5.5 0-6 0-7-1-8-1-8.5-2-9-2.5-9.5-3.5-9.5-4.5-10-5-10.5-6-10-6.5-10-7-9.5-7.5-9-8-9-8-8-9-7-8.5-5.5-9-5-9-3.5-8.5-2.5-8-1-7.5 0-6.5 1.5-6.5 2.5-5 4.5-4.5 5-3.5 6.5-2.5 7.5-1 8.5-.5 9 1 10 2 9.5 3 10.5"/>
<path id="s394" d="M285.5 200.5l1.5 0 1.5 1 1.5 2 1.5 3 1.5 4 1 4.5 .5 5.5 0 6 0 7-1 7.5-1 8-2 8.5-2.5 9-3 9.5-3.5 9.5-4 10-4 10-5 10.5-5 10"/>
<path id="s395" d="M294 363l6 9.5 6 9.5 6 8.5 5.5 7.5 5.5 7 5.5 6 4.5 5.5 4.5 4.5 4 3.5 3 3 3 2.5 2 1 1.5 1 1-.5"/>
<path id="s396" d="M140.5 460l-6-5.5-5.5-6.5-5-7-4.5-7.5-3.5-8-3-9-2-9.5-1.5-9.5-.5-10.5 1-10 1.5-10.5 2.5-10 3.5-10.5 5-10 5.5-9.5 6.5-9.5 7.5-9 8-8 9-8 9.5-7.5 10-7 10.5-6 11-5.5 11-5 12-3.5 11.5-3 12-1.5 12-1 11.5 .5 11.5 2 11.5 2.5 10.5 3.5 10.5 4.5 9.5 5 9.5 6 8 7 7.5 7.5 6.5 8 6 9 4.5 9 3.5 10 2.5 10 1.5 10.5 .5 11-1 10.5-2 11-3 11-4 11-5.5 10.5-6 10-7 9.5-8 9-9 8.5"/>
<path id="s397" d="M265 280l10.5-5 10-5 10-4 9.5-3.5 9.5-2.5 8.5-2.5 8.5-1 8-.5 7.5 1 6.5 1.5 6.5 2.5 5.5 4 5 5.5 4.5 6 3.5 7.5 3 8"/>
<path id="s398" d="M343 310.5l0 11.5-1.5 12-2 12-3 11.5-4.5 11-5 11-6 10.5-6.5 10-8 9.5-8 9-9 8-9 7.5-10 7-10 6-10.5 5-10.5 5-10.5 3.5-10.5 3-11 2-10.5 1-10.5 0-10.5-1-10.5-2.5-10-3-9.5-4-9.5-5-9-6.5-9-7.5-7.5-8.5"/>
<path id="s399" d="M293 467.5l7-3.5 6.5-4 6-4.5 5.5-5.5 4.5-6 4-7 3-7.5 2.5-7.5 2-8.5 .5-9 0-9-1-9.5-1.5-10-2-10-3-10-3.5-10.5-4-10.5-4.5-10.5-5-10.5-5.5-10.5-6-10-6.5-10-7-9.5-7.5-9-8.5-8.5"/>
<path id="s400" d="M162 201.5l8-4.5 8.5-3 7.5-2 7.5-1 6.5 .5 5.5 1.5 4.5 3 3.5 4 3 5 2 6 1 7 .5 8-.5 8.5-1 9-2 9.5-2.5 10.5-2.5 10.5-4 10.5-4 10.5-5.5 11-5.5 10.5"/>
<path id="s401" d="M284.5 474l-1 1-1 0-2.5-.5-3-1.5-4-2-5-2.5-5.5-3-6-3.5-7-4.5-7.5-5-7.5-5.5-8-6-8.5-6.5-9-7-9-7.5-9-7-9.5-8-9-7.5-9.5-8-9-7.5"/>
<path id="s402" d="M282 263.5l10 7.5 9.5 8.5 8.5 9 8 9 7.5 10 7 10 6 10 5.5 10 4.5 10 4 10 3 9.5 2.5 9.5 1 9.5 .5 9-.5 9-1.5 8.5-2.5 8.5-3.5 8-4 7-5.5 7-6.5 6.5"/>
<path id="s403" d="M126 433l-.5-5.5 0-6.5 1-7 1.5-7.5 2.5-7.5 3-8 3.5-8.5 4.5-9 5-8.5 6-9 6-9 7-9 7-9 8-8.5 8.5-8.5 8.5-8 9-7.5 9.5-7 10-6.5 10-6 10-5 10.5-4 10.5-3.5 10.5-2 10.5-1 10-.5 10 1.5 9.5 2 9.5 3.5 8.5 4.5 7.5 5.5 7 6.5 6.5 7.5 5 8.5 4.5 8.5 3.5 10 2 10 1.5 10.5 0 11-1 11.5-2.5 11-3 11.5-4.5 11-5 10.5-6.5 10-7 9.5-7.5 8.5-8.5 8-9 7-9.5 6-10 5"/>
<path id="s404" d="M368 282l4 10.5 2.5 10.5 2 11 .5 10 0 10.5-1 9.5-2.5 9.5-3 9-4.5 8-5 7.5-6 6.5-6.5 6-7.5 5-8.5 3.5-8.5 3-9 1-9.5 .5-10-1.5-9.5-2.5-10-3.5-9.5-4.5-9.5-6-9.5-6.5-8.5-7.5-8.5-8.5-7.5-9.5-7-9.5-6.5-10"/>
<path id="s405" d="M241 487.5l4 0 4-1.5 3.5-2 3.5-3 3.5-4.5 4-5 3.5-6 4-6.5 4.5-7.5 4-8.5 4-9 4-10 4-10 3.5-11 4-11 3-11.5 3.5-12 3-11.5 2.5-12 2.5-12 2-12 1-12 1-11.5 .5-11.5-.5-11.5-1-10.5-1.5-10.5-2.5-10-3.5-9.5-3.5-8.5-5-8.5-5.5-7-6-7-6.5-5.5-7-5-8-4.5-8.5-3"/>
<path id="s406" d="M307 466.5l1 .5 1-.5 .5-1.5 .5-2.5 .5-4 .5-5 1-6.5 .5-7 1-8 1-9 1-10 1-10.5 1-11 1.5-11.5 1-12 1.5-12.5 1-12 1-12.5 .5-12.5 1-12 0-12 .5-11.5 0-10.5-.5-10.5-.5-10-1-9-1-8.5-2-7.5"/>
<path id="s407" d="M111.5 237l-2 1.5-1.5 1.5 0 2 1.5 1.5 2 2.5 3.5 2 4.5 2 5 2.5 6.5 2.5 7 2.5 8.5 2.5 9 2.5 9.5 2 10.5 2.5 11 1.5 11.5 2 12 1 12 1.5 12 .5"/>
<path id="s408" d="M226.5 216l11 4.5 11.5 5 11 5 11.5 6 11 6 10.5 6.5 10.5 7 10.5 7.5 9.5 7.5 9 7.5 9 7.5 8 7.5 7 8 6.5 7 6 7.5 5 7 4 7 3 6 2.5 6.5 1 5.5 .5 5-.5 4.5"/>
<path id="s409" d="M182.5 465l3.5 1.5 4.5 .5 4.5 0 4.5-1 5.5-1.5 5.5-2.5 6-3 6-4 5.5-5 6-5.5 5-6 5.5-7 5-8 4-8.5 4-9 3-9.5 2.5-10 1.5-10 .5-11-.5-10.5-2-11-2.5-10.5-3-10.5-4.5-10.5-5-9.5-6-9.5-6.5-8.5-7-7.5-8-7-8.5-6-8.5-5-9-4-9-3-9-2-9-1.5-9 0-8.5 1-8 1.5-7.5 2-7 3.5-7 3.5-6 4.5-5 5.5-5 5.5-4 6.5-3 7-2.5 8"/>
<path id="s410" d="M278.5 479l-2.5 1.5-3 1-4-.5-4-1-5-1.5-5.5-2.5-5.5-3.5-6-4.5-6.5-5-6.5-6-7-6.5-7-7-7-7.5-7.5-8.5-7-9-7-9-7-10-6.5-10-6.5-10.5-5.5-11"/>
<path id="s411" d="M187.5 282.5l-1-11.5-.5-11.5-.5-10.5-.5-10.5 0-9.5 0-8.5 0-8.5-.5-7 0-6-1-5.5-.5-4-1-3.5-.5-2-1-1-1 0"/>
<path id="s412" d="M116.5 446l-1.5-1-1.5-2-1.5-3.5-.5-4-.5-5.5 0-6.5 0-7 1-8 1.5-8.5 1.5-9.5 2-10 2.5-10.5 2.5-11 3.5-11.5 3.5-11.5 4-12 4-11.5 5-11.5 5-11.5 5.5-11.5"/>
<path id="s413" d="M93.5 402.5l-1-.5-1-1 0-2.5 1-3 1-4 2-5 2.5-5.5 3-6 4-7 4-7 5-8 5-8.5 6-8.5 6-9 6.5-9.5 7-9.5 7.5-9 8-9 8.5-9 8.5-8.5 8.5-8 9-8"/>
<path id="s414" d="M349 260.5l-5-8.5-5.5-7.5-6-6.5-6.5-6-7-5-7-4-7.5-2.5-7-1.5-7 0-7 1-7 2-6.5 3.5-5.5 5-5.5 5.5-5 7-4 8-3.5 9-2.5 9.5-2 10-1.5 10.5-.5 11-.5 11 0 11.5 1 11 1.5 11.5 2.5 11 2.5 11 3.5 10.5 3.5 9.5 5 9 5 8.5 5.5 7.5 6 6 6.5 5.5 6.5 4.5 6.5 3 6.5 2.5 6.5 1 6 0 6-1 6-1.5 5.5-3 5-4.5"/>
<path id="s415" d="M196 470l1.5-5 3-5.5 4-6.5 5.5-6.5 6.5-6.5 8-7 8.5-6.5 10-6 10.5-6 11-5 11.5-4.5 11-3 11.5-2 10-1.5 9.5 .5 8.5 1.5 7 2.5 5 3.5 4 4.5 2 5.5 0 5.5-1 6-3 6.5-4.5 6.5-6 6.5-7 6"/>
<path id="s416" d="M356 245.5l-3-5.5-4-4.5-4.5-4-5.5-4-6-3-7-2.5-8-2-8-1-9-.5-9.5 0-10 .5-10.5 1-11 2-11 2.5-11.5 2.5-11.5 3.5-11.5 4.5-11.5 4.5-11.5 5-11.5 5.5-11 6-11 5.5-10.5 6.5-10 6-9.5 6.5-9 6.5"/>
<path id="s417" d="M301.5 252.5l6.5 10.5 6 11 5 11.5 5 12 3.5 12 3 12 1.5 12.5 1 12.5-.5 12.5-2 12.5-3 12-4 12-5 11-6 11-7 10-8 9.5-8 8.5-9 8-9 7-9.5 6.5-10 5-10.5 4.5-10.5 3.5-10.5 2.5-10.5 1.5-10.5 .5-10.5-1-10.5-1.5-10-2.5-9.5-3.5-9.5-4.5-9-5"/>
<path id="s418" d="M270 200l-9.5-3-9-2-9-1-8.5 .5-8.5 1-7.5 2-6.5 3-6.5 3.5-5 5-4.5 5.5-3 6.5-2.5 7-1 7.5 0 8 1 8.5 2 9 3 9 4.5 9 4.5 9.5 5.5 9 6.5 9 7 8.5 7.5 8.5 8.5 7.5 9 7 9 6"/>
<path id="s419" d="M176 476.5l-1.5 0-2-1-1.5-2-2-3-2-4-1.5-5.5-2-6-2-7-2-7.5-2-8.5-2-9.5-2-10-2.5-10.5-2-11-2.5-11.5-2-12-2.5-11.5-2-12-2.5-12-2.5-11.5-2.5-11-3-11-2.5-10-3-9-3-8"/>
<path id="s420" d="M295 197.5l-7-4-7-3-7-2-7-1-7 .5-7 1-6.5 2.5-6.5 3-6 4.5-5 5.5-5 6.5-4 7.5-3.5 8-3 9-3 10-2.5 10-2 10.5-2 11.5-2 11.5-1 12-1 12 0 12"/>
<path id="s421" d="M356 268l-3-6-3.5-4.5-3.5-3.5-4-2.5-4-1-4.5 1-4 2-4 3.5-4.5 5-3.5 6.5-4 7-3.5 8.5-3 9.5-2.5 10-2.5 10.5-2.5 11-1.5 11.5-1.5 11.5-1 11.5-.5 11.5 .5 11 .5 10 1 10 1 9 1.5 8 2.5 7.5 2.5 5.5 3 5"/>
<path id="s422" d="M95 251.5l-5 7.5-4 7.5-3 8-1.5 8-1 8 .5 8.5 1 8.5 2 8.5 3 9 4 8.5 5 9 5.5 8.5 7 8 7 8.5 8 8.5 8.5 8 9.5 7.5 9.5 8 10 7 10.5 6.5 11 6.5 11.5 5.5 11 5 12 4.5 11.5 3.5 11.5 3.5 11.5 2.5 11.5 2 11 1"/>
<path id="s423" d="M146.5 209l0-.5 0 1 0 1.5 .5 2.5 .5 4 1 4.5 .5 6 0 6.5 .5 8 0 8.5 0 9.5 0 10-.5 10.5-.5 11.5-.5 11.5-.5 11.5-.5 12-1 12-1.5 12-1.5 11-2 11-2 10.5-2.5 9.5-2.5 8.5-2.5 8-2.5 6.5-3 5.5-2.5 4.5"/>
<path id="s424" d="M68.5 333.5l.5-9 1-8 2-8.5 3-8.5 4-8 5-8 6-7.5 7-7 7.5-7 8.5-6 9-5.5 10-4.5 10-3.5 11-3 11.5-2 11.5-1 12 0 12 1 12 1.5 12 3 12 4 11.5 4.5 11 6 11.5 6 10.5 7 10 8 9.5 8 9 9 8 9 8 9.5 6.5 10 6.5 9.5 5.5 10 4.5 10 4 10 3 9.5 1.5 10 1.5 9.5 0 9-1 9-1.5 8-2 8-3 7-4 6.5-4.5 5.5"/>
<path id="s425" d="M263 187l-3-1.5-3.5 0-4 .5-3.5 1.5-4 2.5-4 3.5-4 4.5-4.5 5-4.5 6-5 6.5-4.5 7.5-5 8-5.5 9-5.5 9-5.5 9.5-6 10-5.5 10.5-5.5 10.5-6 11-5.5 10.5-6 10.5-6 10.5-5.5 10.5-5.5 10-5 9.5-5 9.5-4.5 9-4 8-4 7.5-3.5 6.5-3.5 6-3.5 4.5-3 4-2 2.5-2.5 1.5-1.5 .5-1.5-.5"/>
<path id="s426" d="M267 342.5l9.5 7 9.5 6.5 8.5 6 8.5 6.5 8 6.5 7.5 6 6.5 6 6 5.5 5 5 4.5 5 4 4.5 3.5 3.5 2 3.5 2 3 .5 2.5 0 2-1 1.5"/>
<path id="s427" d="M305.5 196.5l4 3.5 3.5 4 3 5 2.5 5.5 2 6.5 1.5 7.5 .5 7.5 0 8.5 0 9.5-.5 10-1 10.5-1.5 11-1.5 11.5-1 12-1.5 12-1.5 12.5-1.5 12.5-2 12.5-1.5 12.5-1.5 12.5-2 11.5-2 11.5-2 11-3 10.5-2.5 10-3.5 9-3 8.5-3.5 7.5-3.5 6.5-3.5 6-4 5-3.5 3.5-4 3-4 2"/>
<path id="s428" d="M211.5 174.5l6-.5 6 0 6 1.5 5.5 2.5 6 3 5.5 4.5 5.5 5 5.5 6.5 5.5 7 5 7.5 5 9 5 9 4.5 10 5 11 4 11 4.5 11.5 4 12 4.5 12 4 12 4 12.5"/>
<path id="s429" d="M350.5 428l2-1.5 .5-1.5-.5-2-1.5-2.5-2-2.5-3.5-2.5-4.5-3-5-3.5-6-3.5-7-3.5-7.5-4-8.5-4-9.5-4-9.5-4-10.5-3.5-11-3.5-11.5-3.5-11.5-3.5"/>
<path id="s430" d="M354 241.5l6 8 5 8 4 8 3 8.5 2 9 1 9 0 9-1.5 9.5-2 8.5-3.5 9-4 8.5-5 8.5-6.5 8.5-7 8-7.5 8-8.5 7.5-9 7-10 6.5-10.5 6-11 5.5-11.5 4.5-12 4-12 3-12 3-12.5 2-12.5 2-12.5 1-12 .5"/>
<path id="s431" d="M280.5 275.5l-8.5-8.5-9-8-9.5-8-9.5-7-10-6.5-10-6-9.5-5-10-4.5-9.5-4-9.5-3-9-2-9-1.5-8-1-8 0-7 .5-6.5 1.5-6.5 2-5.5 3-5 4"/>
<path id="s432" d="M239.5 477.5l-10.5-1-10.5-2-10.5-3-10.5-4-9.5-5-9.5-5.5-8.5-7-8-7.5-7-8.5-6-9-5-9.5-4.5-10.5-3-10.5-2-11-1.5-11.5 0-11 1.5-11.5 2-11.5 3.5-11.5 4-11 5-10.5 5.5-10.5 6-10.5 7-9.5 7-9.5 8-8.5 8-8.5 8-7.5 8.5-7.5 8.5-6.5 8-6 8-5.5 7.5-5 7.5-4 7-3.5 6-3 6-2 5.5-1.5 5-.5 4 .5 4 1"/>
<path id="s433" d="M376 380l2-5.5 1-4.5 0-4.5-1-4-2.5-3.5-3.5-2-4.5-1.5-6 0-6.5 1-8 2-8 3-9 4-9.5 5-9.5 6-10 6.5-10 7.5-9.5 8-9 8.5-9 8.5-7.5 9-7 8.5-6 9-4.5 8.5-3.5 7.5-2 7.5-.5 6.5 .5 5.5"/>
<path id="s434" d="M201 477.5l-4.5-5-4.5-6-5-7-5.5-7.5-5-8.5-5.5-9-5-9.5-5-10-5-11-4.5-11-4.5-11-4.5-11.5-4.5-12-4-11.5-3.5-11.5-3-11.5-3-11.5-2.5-11-2-10.5-1.5-10.5-1-10 0-9 0-9 1-8 1-7.5 2-6.5 2-6 2.5-4.5 3-4 3-3"/>
<path id="s435" d="M278 480.5l-.5 .5-1-.5-2-1-3-2-3.5-2.5-4.5-3.5-5.5-4-6.5-4-7.5-5-8-5.5-8.5-5.5-9.5-6-9.5-6.5-9.5-7-10-7-10-7-10-7-10-7-10.5-7-9.5-6-9.5-6-9-5.5-8.5-5"/>
<path id="s436" d="M170.5 472.5l4 2 4 .5 4 0 4-1.5 4-2 4-3.5 3.5-4 3.5-5.5 3-6 2.5-7 2-8 2-9 1-9.5 .5-10 .5-10.5 0-11-.5-11.5-1-11.5-1-11.5"/>
<path id="s437" d="M182 470.5l5.5-2.5 6.5-3 6.5-4 7-4.5 7.5-5 8.5-5.5 8-6 9-6.5 8.5-7 9-7.5 9-8 8.5-8 9-8 8.5-8.5 8.5-8.5 8.5-8 8.5-8 8-7.5 7.5-7.5 7-7 6.5-6.5 6-6 5.5-5 4.5-4.5 4.5-3.5 3-3 2.5-2.5 1.5-1.5 1-.5 0 .5"/>
<path id="s438" d="M189.5 316l-3-11.5-3-11-2.5-10.5-2.5-10.5-2-10-2-9.5-1.5-9-1-8.5-1-7.5-.5-7 0-6.5 1-5.5 1-5 1.5-4.5 2-3 3-2.5 3.5-2"/>
<path id="s439" d="M247.5 300.5l9-8 9-7.5 8-7.5 8-7.5 7-7 6.5-7 5.5-7 4.5-7 3.5-6.5 2.5-6 1-6 .5-6-1-5-1.5-5-3-4-4-3.5-4.5-3"/>
<path id="s440" d="M354.5 423l.5 1-.5 0-.5-1-1-2-2-3-2-4-2.5-5-3-6-3-7-3.5-7.5-4-8.5-4-9.5-4-10-4-10.5-4.5-11-4.5-11.5-4.5-11.5-4.5-11.5-4.5-11.5-4.5-11.5-4-11.5-4-11"/>
<path id="s441" d="M211.5 344l-11-6.5-10-7-10-7-9-8-8-8-7.5-8.5-6-9-5.5-9-4-9-3.5-9-2-9-1.5-8.5 0-8 1-8 2-7.5 3.5-7.5 4.5-6.5 6-6 7-6 8.5-4.5 9-4.5 10-3 10.5-2.5"/>
<path id="s442" d="M220 494.5l1.5 1 1-.5 .5-1-.5-2.5-1-3.5-1.5-4-2.5-5.5-3.5-6-4-7-5-7.5-6-8.5-6.5-8.5-7-9-7.5-9.5-8.5-9.5-8.5-9.5-8.5-9.5-8.5-9.5-9-9-8.5-9-8.5-8-8-7-7.5-7-7-6-6.5-5"/>
<path id="s443" d="M94.5 358.5l6.5 9 7 9 8 9 8.5 8.5 9.5 8 10 8 10.5 7 11 6.5 11.5 5.5 12 5.5 12 4.5 12 4 12 3.5 12.5 2.5 12 2 12 1 12 0 11.5-.5 11.5-1 10.5-2 10-2.5 9.5-3 9-3.5 8-4 7.5-4.5 6-5 5.5-6 4.5-6 4-6.5"/>
<path id="s444" d="M87.5 282l-2 5-1 5-.5 5 1 5 2 5 3 4.5 4 5 4.5 5 5.5 5 6.5 5 7 5 8 4.5 8.5 5 9 4.5 9.5 4.5 10.5 5 10 4.5 11 4.5 11 4.5 11 4 11.5 4"/>
<path id="s445" d="M180.5 359.5l-9.5 7-9 6.5-9 6.5-8 6-8 5.5-7.5 5.5-6.5 4.5-6 4-6 3.5-4.5 3-4.5 2-3.5 1.5-2.5 1-2 .5-1.5-.5"/>
<path id="s446" d="M289 473.5l-5 2.5-4.5 1.5-3.5 0-3-1-1.5-2.5-1.5-4 0-5 0-6 1-7 1.5-8 2.5-8.5 2.5-9.5 3-10 3.5-10.5 3.5-11 4.5-11 4.5-11.5 4.5-11 5-11.5 5.5-10.5 5-10.5 5.5-9.5 5.5-9 5.5-8"/>
<path id="s447" d="M189 301.5l-11 5-10.5 4.5-10.5 5-9.5 5-9.5 4.5-9 4.5-8.5 4.5-8 4-7 4-6 4-6 3.5-4.5 3-4 2.5-3 2.5-2 2-1.5 2 0 1.5"/>
<path id="s448" d="M203.5 461.5l-7-6.5-7-7-6.5-8.5-6.5-8.5-6-9.5-6-9.5-5.5-10.5-5-10.5-5-11-4-11.5-3.5-11.5-3.5-12-3-11.5-2-11.5-2-11.5-1.5-11.5-1-11-.5-10.5-.5-10 .5-9.5 .5-9 1-8.5 2-7.5 2-7 2.5-6 2.5-5 2.5-4 2.5-3 3-2"/>
<path id="s449" d="M199 248l10.5 3 11.5 2.5 11 3 11.5 3 11.5 3 11.5 3 11.5 3 11 3.5 10.5 4 10 3.5 9.5 4 9 4.5 8.5 5 7.5 5 7 5.5 6 6 5.5 6 4 6.5 3.5 6 3 6.5 1.5 6 1 6-.5 6"/>
<path id="s450" d="M318 379l.5-11.5 0-12-1-12-1.5-12-1.5-11.5-2.5-12-2.5-12-3-11.5-3-11-2.5-11-3.5-10.5-3-10-3-9-3.5-8.5-3-8-3-7-3.5-6-3-5-2.5-4.5-2-3-2-1.5-1-1"/>
<path id="s451" d="M210 245.5l12 2.5 12 2.5 12.5 2.5 12 3 12 3.5 12 4 11.5 4 11 4 10.5 5 10 5 9.5 5.5 8.5 6 8 6.5 7 6.5 6 7 5.5 7.5 4 7 3.5 7.5 2.5 7.5 1.5 7.5 .5 7.5-.5 7.5-1.5 7.5"/>
<path id="s452" d="M201 188.5l9.5 .5 10 2 10.5 2.5 10 3 10.5 4.5 10 5 9.5 5.5 9.5 7 8.5 7.5 8.5 8.5 7.5 9 7 9.5 6 10.5 5.5 11 4 11.5 3.5 11.5 2.5 12 1.5 12 .5 12.5-.5 12-1 12.5-2.5 12-2.5 12-4 11-4.5 11.5-5 10.5-6 10-6 9.5-7 9-7.5 8-8 7.5-8 6.5-8.5 5.5"/>
<path id="s453" d="M262.5 304.5l12.5 2.5 11.5 3 11.5 2.5 11.5 3.5 10.5 3 9.5 3 9.5 3.5 8.5 4 8 3.5 6.5 4.5 6 4 5 4.5 4 4 3.5 5 2 4.5 1 4.5 0 4.5-1 5"/>
<path id="s454" d="M192 408.5l12 1.5 12.5 1.5 12 1.5 12 1 12 1 11.5 1.5 11.5 1.5 10.5 1.5 10 1.5 9 2 8 2 7 2.5 5.5 2.5 4 3 2.5 3.5 1.5 3.5-.5 3-2 3.5-3 3.5"/>
<path id="s455" d="M155.5 312l-4 11.5-4 12-4 12-4 11-3.5 11-4 10-3.5 10-3 9.5-2.5 8.5-2.5 7.5-2 7.5-2 6-1.5 5-1 4-1 3-.5 2 0 .5"/>
<path id="s456" d="M91.5 414.5l3 6 3 4.5 3.5 3 4 1.5 4 .5 4-1.5 4.5-2.5 4-4 4-5.5 4-7 4-8 4-9 3.5-9.5 3.5-10.5 3.5-11.5 3.5-11.5 3.5-12 3-12 3-12.5 3-12 3-12.5"/>
<path id="s457" d="M234 373.5l9.5 8 8.5 7.5 9 7.5 8.5 7.5 7.5 7 7.5 6.5 6.5 6.5 6 6.5 5 5.5 4.5 5 4 5 2.5 4.5 2 3.5 1.5 3.5 0 2.5-.5 2-1.5 1.5"/>
<path id="s458" d="M235.5 480.5l-7.5-1.5-6.5-3-6-3.5-6-4-5-5.5-5-6-4.5-7-4-8-3.5-8.5-2.5-9-2.5-9.5-2.5-10-1-11-1-10.5-.5-11.5-.5-11.5 .5-11.5 1-12 1.5-11.5 2.5-11.5 3-11.5 4-11 4.5-10.5 5.5-10 5.5-9.5 6.5-9 7-8 7.5-7 8-6.5 8.5-5.5 8.5-4.5 9-3 9-2 9.5-1 9.5 1 10 2 9.5 3.5 9 4.5 9 6 8.5 7.5 8 8 7 9 6 10 5.5 11 4 11"/>
<path id="s459" d="M225.5 391l6.5-9 6.5-9 6.5-9 6-9.5 6.5-9.5 6-9.5 6-9.5 5.5-10 5-9.5 4-9.5 4-9.5 3-9.5 2-9 1.5-9 1-8.5 0-8-1-8-2-7.5-2.5-6.5-4-6-4-5.5-5.5-5-6-4-7-3.5-7.5-2.5-8-1.5-8.5-.5"/>
<path id="s460" d="M103 240.5l2-4 3-3.5 3.5-3 4.5-3 5.5-2 6-1.5 7-.5 7 0 8 1 8 2 8 3 8.5 3.5 9 4.5 8.5 5 9 6 9 7 9 7 9 8 8.5 8 8.5 9 8.5 9.5 8 9.5 7.5 10"/>
<path id="s461" d="M85.5 316l1.5 7.5 2.5 8 3.5 8 4 8 5.5 7.5 6 7.5 7 6.5 7.5 6 8.5 6 9 5 9.5 4.5 10.5 4 10.5 3 11.5 2 11 2 12 .5 11.5 0 11.5-1 12-1.5 11.5-2.5 11.5-3.5 11-4 10.5-4.5 10-5 9.5-6 9-6.5 8-7 7.5-8 7-8 5.5-8 5-8.5 4-9 3.5-8.5 2-8 2-8.5 .5-8 0-7.5-.5-7-1.5-6.5-2.5-6-3-5.5"/>
<path id="s462" d="M125.5 235.5l.5-1 0 .5 1 1 1 2 1.5 3 2 3.5 2.5 4.5 3.5 4.5 3.5 5.5 4.5 5.5 5 6.5 5 6.5 5.5 7.5 5.5 7.5 6 8.5 6 9 5.5 9 5.5 10 5.5 9.5 5.5 10 5.5 10.5 5 10 5 10 4.5 9.5 4.5 10 4 9 3.5 9 3.5 8.5 2.5 8.5 2.5 7.5 2 7 1 6 0 6-1 5-1.5 4-2.5 3.5"/>
<path id="s463" d="M319 404.5l-7-6-7.5-6-9-6-9-5.5-10.5-5.5-11-5-11.5-4-12-3.5-12.5-3-12.5-2-12.5-1-12.5 0-12.5 1-11.5 1.5-11 3-10.5 4.5-9 5-7.5 6-7 6.5-5 7.5-3.5 8-2 8.5-.5 8.5 1.5 9 3 9 4.5 8.5 6 8.5 7 7.5 8.5 7.5 9.5 6.5 10.5 5.5 11 5 12 4 12 3 13 2 12.5 1 12.5-.5 12.5-1"/>
<path id="s464" d="M211.5 457l11-1.5 11.5-2 11.5-3 11-3.5 11-5 10.5-5.5 9.5-6.5 9.5-7.5 8.5-8.5 7.5-9 7-9.5 5.5-10.5 4.5-11 4-11.5 2.5-11.5 1.5-12 .5-11.5 0-12-1.5-12-2.5-11.5-3.5-11-4.5-11-5.5-10.5-6-9.5-7.5-9-7.5-8.5-9-8-9-6.5-10-6-10-5.5-10.5-4-11-3"/>
<path id="s465" d="M97 255.5l6-9 6-8.5 7-7.5 7.5-6.5 7.5-5 7.5-4 8-2.5 8-1.5 7.5 0 7.5 1.5 6.5 3 7 4 6 5.5 5.5 6.5 5 7.5 4 9 3 9.5 1.5 10.5 1 11.5-.5 11.5-1 11.5-2 12-3.5 12-3.5 11.5-5 11-5.5 10.5-6.5 9.5"/>
<path id="s466" d="M366 255.5l5.5 10 4.5 10.5 4 10.5 2.5 11 1.5 11 .5 10.5-.5 10.5-1.5 10.5-3 10-3.5 9.5-5 8.5-6 8-7 7.5-7.5 6.5-8.5 5.5-9.5 5-10 4-10.5 3-11 2-11.5 1.5-11.5 0-12-1-12-2-12-3-11.5-4.5-11.5-5.5-11-6.5-10.5-7.5-9.5-8.5-9-9-8.5-9.5-7.5-10-6.5-10.5"/>
<path id="s467" d="M288.5 218l3 8 3 9 2.5 9.5 2 10 2 10.5 1.5 11 1.5 11 1 12 .5 12 .5 12 .5 12-.5 12.5-1 12-1 12-1.5 11.5-2 11.5-2.5 11-2.5 10.5-3 10-4 9.5-4 9-4.5 8-5 7-5.5 7-6 5.5-6 5-6 3.5-6.5 3-6 2-6.5 1.5-6 0"/>
<path id="s468" d="M150.5 204l-1.5 4-1 5-.5 6 0 6.5 .5 7 1 8 1.5 8.5 2 9 2 10 2.5 10 3 10.5 3.5 10.5 4 11 4.5 11 5 11 6 11 6 11 6.5 10.5 7 10 7.5 9.5 8 9 8 8.5 8.5 8 9 7.5 8.5 6.5 9 5.5 9 4.5 9.5 3.5 9 2.5 9.5 1 9.5 0 9-1.5 9-3 8.5-4.5 8.5-5 7-6 7-7 6-7.5 5-8.5 4.5-9 3.5-10 3-10.5 2-11"/>
<path id="s469" d="M260 290l10.5 7 10.5 7 10.5 6 10 5.5 10.5 5.5 9.5 4.5 9.5 3.5 9 3 8.5 2.5 7.5 1.5 7 .5 6 0 5-1 4-1.5 3-2.5 2-3.5 1-4.5 0-5.5"/>
<path id="s470" d="M239.5 177l-1-.5-1.5 1-1.5 1.5-2 2.5-2.5 3.5-3 4.5-3.5 5.5-4 6-4.5 7-4.5 7.5-5.5 8.5-5.5 9-6 9-6.5 10-6.5 10-6.5 10.5-6.5 11-6.5 10.5-6 11-6.5 11-6 11"/>
<path id="s471" d="M84.5 272l-2 10-.5 10 .5 10 1.5 10 2.5 10 4 9.5 5 9 6 9 7 8 7.5 8 9 7 9.5 6.5 10.5 5.5 10.5 5.5 11.5 4.5 12 4 12 3 12.5 3 13 2 12.5 2 12.5 1 13 0 12.5-.5 12-1 12-2.5 11.5-3 11-4 10.5-4.5 10-5.5 9-6 8.5-6.5 7.5-7 6.5-7 5.5-8 4.5-8.5 4-9 2.5-9 1-9.5 .5-10-1-10-2-10-3-10.5-4.5-10"/>
<path id="s472" d="M71 349l-1-3 .5-2 1.5-2 2.5-1 3.5-.5 4.5 .5 5.5 .5 6 .5 7 1.5 8 1.5 9 1.5 9 2.5 10 2.5 10.5 3 11 3 11.5 3.5 11.5 3 12 3 12 3.5 12.5 3 12 3.5 12 3.5 12 3.5 11.5 3.5 11 3 11 2.5 11 2.5 10 1.5 9.5 1.5 9.5 1 8.5 0 8-.5 7.5-1 6.5-2 6-2.5 5-3.5 4.5-4 3-4 2.5-4.5 1.5-5"/>
<path id="s473" d="M197.5 491l7 2 7 .5 7.5 0 7.5-1.5 7-2 7-3.5 7-4 6.5-5.5 6-6 6-7 5.5-8 5-8.5 5-9.5 4.5-10 4.5-10.5 4.5-11 4-11.5 3.5-12 3-12.5 2.5-12.5 2-12.5 2-12.5 1.5-12.5 1.5-12.5 1-12.5 0-12-.5-11.5-1-11.5-1.5-10.5-2.5-10.5-3.5-10-4-9-5-8.5"/>
<path id="s474" d="M289.5 473.5l.5 1 0 0-.5-1-1-2-1.5-2.5-2.5-3-2.5-4.5-3.5-4.5-4-5.5-4.5-6-5-6.5-5.5-7.5-6-7.5-6-8.5-6-8.5-6.5-9.5-6.5-9.5-6.5-10-7-10-7-10-7-10-7.5-9.5-7.5-9.5-7.5-9-7.5-9-7.5-8.5-7.5-7.5-7-7.5-7-6.5-6.5-6.5-6-6-5-5.5-5-4.5-4-4-4-3.5-3-2.5-2.5-1.5-2-1.5-1 0"/>
<path id="s475" d="M113.5 339.5l6 10.5 6 10 7 10.5 7.5 10 7.5 10 8.5 9.5 8.5 9 9 9 9.5 8.5 9.5 8 9.5 7 9 7 9.5 6.5 8.5 6 9 5 8 4.5 7.5 4 7.5 3 6.5 2.5 5.5 1.5 5.5 1 4 0 3.5-.5"/>
<path id="s476" d="M318 208.5l2.5 2 2.5 2.5 2 3.5 1 4.5 1 5 1 6 0 7-.5 8-.5 8-1.5 9-1.5 9.5-2.5 10-2.5 10.5-3 10.5-3.5 11.5-4 11-4 11.5-4 12-4 11.5-4.5 11.5-4.5 11.5-4 11.5-4 11-3.5 10.5-3 10-2.5 10-1 8.5-.5 8 0 7 .5 6 1.5 4.5"/>
<path id="s477" d="M344.5 437l.5 .5-.5 0-1-1-2-1.5-2.5-2-3-3-4-3.5-5-4-5-4.5-6-5-7-5.5-7-6-7.5-6-7.5-7-8.5-7.5-8.5-7.5-8.5-8-9-8-9-8.5-9-8.5-9.5-8-9.5-8.5-9-8-9.5-8-9-8-8.5-7.5-9-7-8.5-6.5-8-6-8.5-5-8-4-7.5-3.5-7.5-2-6.5-1.5-6.5 0-6 .5-5.5 2-5.5 3.5-4.5 5-4 6-3 6.5-2.5 8"/>
<path id="s478" d="M309.5 462.5l-3.5 .5-3-.5-3-1.5-3-3.5-2.5-4-2.5-5.5-2-6.5-2-7.5-1.5-8-1.5-9.5-2-9.5-1.5-10.5-1.5-10.5-1.5-11.5-1.5-11.5-2-12-1.5-12-1.5-12-1.5-12-1-12-1.5-12-1-11.5-1.5-11-1-11-1-10-1.5-10-1.5-9-1.5-8.5-2-7.5-2-7-2-6-2-5-1.5-4.5-1.5-3-1.5-2.5-1.5-1-1.5-.5"/>
<path id="s479" d="M273.5 302l5 11 5 11.5 4.5 11.5 5 11.5 4.5 11 4.5 10.5 4 10 4.5 10 3.5 9 3.5 9 3.5 7.5 3 7.5 2.5 6.5 2 5.5 1.5 5 1.5 4 .5 3 .5 2.5 0 1-.5 .5"/>
<path id="s480" d="M352 262.5l0-1-1-1-1.5-1-2.5 0-3.5 0-4 .5-5 1-6 1-6.5 1-7.5 1-8.5 1.5-8.5 1.5-9.5 1.5-10 2-10 2.5-10.5 2.5-10.5 2.5-11 3.5-11 3.5-10.5 4-11 4-10.5 4.5-10.5 5-10 5-9.5 5-9.5 5.5"/>
<path id="s481" d="M108 231.5l2-.5 2 0 3 1 3 2 4 3 4 3.5 4.5 5 4.5 6 4.5 7 5 7.5 5 9 4.5 9 5 10 5 10.5 5 11 4.5 11.5 4.5 11.5 4 12 4 12 4 12 4 11.5 3.5 11.5 4 11 4.5 10.5 4 10 4 9.5 4 9 5 8 4.5 7 5 6.5 5 5.5 5 4.5 5.5 3.5 5 2.5 5.5 1.5 5.5 .5 5.5-.5 5.5-2"/>
<path id="s482" d="M169 191l7.5-1 8 0 8.5 1 8.5 2 8.5 2.5 8 4 8.5 4.5 7.5 6 7.5 6.5 7 7.5 6.5 8.5 6 9.5 5 9.5 5 10.5 4.5 11 4 11.5 3 12 2.5 12 2.5 12.5 2 12.5 1.5 12 .5 12.5 .5 12.5-.5 12-.5 11.5-1 11-1 11-2 10.5-2 9.5-2.5 9-3 8.5-3 7.5-3.5 7-4 6-4.5 5-5 4.5-5.5 3-5.5 2.5-6 1-7 .5"/>
<path id="s483" d="M229 494.5l-3 .5-2.5-.5-2-1.5-2-3-1.5-3.5-.5-4.5-.5-5.5 .5-6 .5-7.5 1-8 1.5-8.5 2-9.5 3-10 3.5-10 4.5-11 4.5-11 5.5-11 6.5-11 6.5-11 6.5-10.5 7.5-11 7-10 8-10 7.5-9 8-9 8-7.5 7.5-6.5 8-6 8-4.5 7.5-3.5 7-2 6.5-1.5 6.5 0 5.5 1.5 5 2 4 3.5 4 5 2.5 6 2.5 7"/>
<path id="s484" d="M93 291.5l-.5-.5 .5-.5 1.5 0 2.5 0 3 .5 4 0 5 0 6 0 6.5 0 7.5 0 8 0 8.5 0 9.5 0 10-.5 10-.5 11-.5 10.5-.5 11.5 0 11-.5 11.5 0 11.5 0 11 .5 11 0 11-.5 10 0 10-.5 9.5-.5 9-.5 8 0 8 .5"/>
<path id="s485" d="M204 286l10-8 10-7.5 9.5-7.5 10-6.5 9-7 9.5-6 9-5.5 8.5-5 8-4.5 8-3.5 7-3 7-2.5 6-2 5-1.5 4.5-1 3-.5 2.5 0 1.5 .5"/>
<path id="s486" d="M320 204.5l4 2.5 4 3.5 3 4.5 3 5 2.5 6 1.5 7 1.5 7.5 1 8.5 .5 9.5-.5 10-.5 10-1 11-1.5 11.5-2.5 11.5-2.5 11.5-3.5 12-4.5 12-4.5 11.5-6 11.5-6.5 11-7 10.5-7.5 10-8.5 9.5-9 9-9.5 8-10 7.5-10.5 6.5-11 5.5-10.5 4.5-11 4-10.5 3.5"/>
<path id="s487" d="M273 476.5l6-3 4.5-3.5 3.5-4.5 2-5 1-5.5 0-6-1-6-2.5-7-3-7-4-7.5-5-8-5.5-8-6-8-7-8.5-7-8.5-7.5-8.5-8-8.5-8.5-8.5-9-8-9-7.5-9-8-9.5-7-9-7-9-6-9-6-9-5-8.5-4.5-8.5-3.5-8-3-7.5-2-7-1-6.5-.5-6 0-5 1.5-4.5 1.5-3.5 2.5-3 3-2 3.5-1 4"/>
<path id="s488" d="M106 244l-1-.5 0 0 .5 1 1 1.5 2 2 2.5 2.5 3.5 3.5 3.5 4.5 4.5 5 4.5 5.5 5 6.5 5 7.5 5.5 8 6 8.5 6 8.5 6 9.5 7 9.5 7 9.5 7 9.5 7.5 10 7.5 9.5 7.5 9.5 8 9 7.5 9.5 7.5 8.5 7.5 8.5 7 8 7 8 7 7 6 6.5 6 6.5 5 5.5 5 5 4 4 3.5 4 3 2.5 2.5 2.5"/>
<path id="s489" d="M198 323.5l-12-.5-12-.5-11.5 0-11-.5-11 0-10-.5-9.5 0-8.5-.5-8 0-7.5-.5-6.5 0-5.5 0-4.5-.5-3.5 0-3-.5-1.5 0-.5-.5"/>
<path id="s490" d="M370 402l-1 5-2 3.5-3 3-3.5 2-4 1.5-4.5-.5-5-1-5-3-5-4-5.5-5-5.5-6.5-6-7.5-5.5-8-6-9-5.5-10-5.5-10.5-5.5-11-5-11.5-4.5-11.5-4.5-12-3.5-12-3.5-12-2.5-12-2-11-1-11-.5-10.5 .5-9.5 1-8.5 2.5-7.5 3.5-6 4.5-5 5-3 6-2 6.5-.5"/>
<path id="s491" d="M158.5 199.5l-4 1-4 2.5-3.5 2.5-2.5 4-2.5 4.5-1.5 5.5-1 5.5-.5 7 .5 7 1.5 7 2.5 8 3.5 8 4 8 5.5 8.5 6 8 7 8 8 7.5 8.5 7.5 9.5 7 10 6.5 10.5 6.5 11 5.5 11 5.5 11 5 11 4.5 11 4 11 3.5 10.5 3 10.5 2 10 1 9.5 1 9.5 0 8.5-1 7.5-1 7-2.5 6.5-2.5 5.5-3 4.5-3 3.5-3.5 2.5-4 2-4"/>
<path id="s492" d="M248 367l-10.5-3.5-11-3.5-11-4-10.5-4.5-10.5-4-10-5-10-5.5-9-5.5-8.5-6-8-6.5-7-7-6-7-6-7-4.5-6.5-4-7-3.5-6.5-2-7-1.5-6 0-6.5 .5-6 1.5-5.5 2.5-5.5 3-5 4.5-4.5"/>
<path id="s493" d="M238.5 198l2.5-.5 2.5 1 2.5 1 2 2.5 2 3 1 4 1.5 4.5 .5 5.5 .5 6.5 0 6.5-.5 7.5-1 8-1 8.5-2 9-2.5 9-2.5 10-3.5 9.5-3.5 10-3.5 10-4 10.5-3.5 10.5-3.5 10.5-3.5 10-3.5 10.5-3.5 10-3 9.5-4 9-4 9-4 8-4.5 7-5 7-4.5 5.5-5 5-5 3.5"/>
<path id="s494" d="M247 476l1.5 0 1-.5 .5-1.5 0-2.5-.5-3-1-4-1-5-2-5.5-2-6-3-7-3.5-7.5-3.5-8-4.5-8-4.5-9-5-9-5.5-9.5-5.5-9.5-5.5-10-5.5-9.5-6-10-6-10-5.5-9.5-5.5-10-5.5-9-5.5-9"/>
<path id="s495" d="M177 419.5l-6-10.5-5.5-10.5-5.5-11-5-11.5-5-11-4.5-12-4.5-11.5-4-11.5-3.5-11-4-11-3-10.5-3-10-3-9.5-3-8.5-2.5-7.5-2-7-1.5-6-1.5-5-1-4.5-.5-3 0-2 .5-1.5"/>
<path id="s496" d="M176.5 276l-6.5 10.5-6 11-5.5 11.5-5 11.5-4.5 11-4.5 11.5-4 11.5-3.5 11-3.5 10.5-3 10-3 9.5-2 9-2 9-1 8-.5 7 0 7 1 6.5 1.5 5 2 5 2 3.5 3 2.5"/>
<path id="s497" d="M348 431l4.5-5 3.5-5 2-5 .5-4.5-.5-5-2-4-3-4-4.5-4-6-3-6.5-2.5-8-2.5-9-1.5-9.5-1-10.5-1-11-.5-11.5 0-12 0-12 .5-12.5 1.5-12 1.5-12 2-12 2.5-12 2.5-11 3-10.5 3-10 3-9.5 3.5-8 3.5-7.5 3.5-6.5 4-5 4-3.5 4.5-2.5 4.5-1 5"/>
<path id="s498" d="M374 316l-2 5.5-3.5 5.5-4 6-5.5 5.5-5.5 5.5-7 5.5-7.5 5-8.5 5.5-8.5 4.5-10 5-10 4.5-10.5 4-11 4-11 4-11.5 3-12 3-12 2.5-12 2-11.5 2-12 2-11.5 1-11 1-11 1-10.5 .5-10 0-9.5-.5-8.5-1-8.5-1.5-7.5-2-6.5-2.5-6.5-3-5-4-4.5-4-4-5-2.5-5-2-5.5"/>
<path id="s499" d="M383 359l.5 2-.5 1.5-1 1.5-2 .5-3.5 .5-4 .5-5-.5-5.5 0-7-1-7.5-1-8-1-9-2-9.5-2-10-2.5-10.5-3-11-3.5-11-4-11.5-4.5-11.5-4.5-11.5-5.5-11-5.5-11.5-5.5-11-6-11-6-10.5-6-10-6.5-9-6.5-9-7-8-6.5-7.5-6.5-7-6-6.5-5-6-4.5-5.5-4-5.5-2.5-5-2-4-1-3.5-.5-3 .5-2 1-1.5 1.5"/>
<path id="s500" d="M335 220l4.5 3 3 4 2.5 4 1.5 5 1 5-.5 5.5-1 6.5-2 6.5-3 6.5-4 7-5 7-5.5 7.5-6.5 7-7.5 7.5-8 7.5-8.5 7-9 7.5-9.5 7-10 7.5-10.5 7-11 6.5-11 6-11.5 5.5-11.5 4.5-11.5 4-12 3-11.5 2.5-11.5 1-11.5 .5-10.5-.5-10.5-1.5-10-2-9-2-8.5-3-7.5-3.5-7-4-5.5-4.5-5-5-4-5.5-3.5-6-2-6-1-6 0-5.5"/>
<path id="s501" d="M252 302l-11.5-3.5-12-2.5-11.5-2-12-1.5-11.5-1-11.5-1-11 0-11 0-10.5 .5-10 1-9.5 1-8.5 1.5-8 2-7.5 2-6.5 2.5-6 2.5-5 3-4 3-3 3-2.5 3.5-1 4-.5 3.5"/>
<path id="s502" d="M137 444.5l-1-5-1-6 0-7 1-7 1-8 1.5-8.5 2-8.5 2.5-9.5 3-9.5 3.5-10 4-10 5-10 5-10.5 5.5-10 5.5-10.5 6-10 6.5-10 6-10 6.5-9.5 6-9.5 6-9.5 6-8.5 5.5-8.5 5.5-7.5 5-7.5 5-6.5 4.5-6 4-5.5 3.5-4.5 3-4 2.5-3 2-2 1.5-1.5 .5-.5"/>
<path id="s503" d="M104 246.5l-1 3 .5 3 1 3 2.5 2.5 4 3 4.5 3.5 5.5 3 6 4 7 3.5 8 4 8.5 4 9 4 9.5 4 10 4.5 10.5 4.5 10.5 5 11 4.5 11 4.5 11.5 4.5 11 4.5 11.5 4 11.5 4 11 3 11 2.5 10.5 2 10.5 1.5 10 1 9 .5 9 .5 7.5-.5 7.5-.5 6.5-1 5.5-2 4.5-2 3.5-2 3-2.5 1.5-3 1-3.5-.5-3.5"/>
<path id="s504" d="M180 480.5l-8-2-7-3-7-3.5-6.5-4.5-6-5.5-5-6.5-4.5-6.5-3.5-7.5-3-8-1.5-8.5-1-9 0-9.5 1-9.5 1.5-10 2.5-10 3.5-10.5 4-10 5-10.5 5.5-10 6.5-10 7.5-10 8-9 8.5-9 9-8 10-7.5 10-7 11-6 10.5-5 11.5-4.5 11-4 11-3"/>
<path id="s505" d="M291 352l-6.5 10-7.5 10.5-7.5 9.5-7.5 9.5-8 9.5-8 8.5-8.5 8.5-8 8-7.5 7.5-7.5 7-7 6.5-6.5 6-6.5 5.5-6.5 4.5-6 3.5-5.5 3-5 2-5 1-4.5 .5-4-.5-3-1.5"/>
<path id="s506" d="M220.5 193.5l-6.5 0-6 1.5-5 2-4.5 2.5-3.5 3.5-3 4.5-2 5-1 5.5-.5 6.5 1 6.5 2 7.5 3 7.5 3.5 8 4.5 8 5.5 8.5 6 8 6.5 8.5 7 8.5 8 8 8 8 8 7.5 8.5 7.5 9 6.5 9 6 9 5.5 9 5 8.5 4 8.5 3 8.5 2.5 7.5 1.5"/>
<path id="s507" d="M292 479l4-1.5 3-2.5 2.5-3 2-4 1.5-4.5 1-5.5 0-6.5 0-7-.5-8-1-8.5-1-9-2-9.5-3-10-3.5-10.5-4-10-5-11-5-10.5-6-11-6-11-6.5-10.5-7-10.5-7.5-10.5-8-9.5-8-9.5-9-8.5-8.5-8.5-9-7.5-9.5-6.5-9-6-9.5-4.5-9.5-4-9-3.5-8.5-2-8.5-2-8-.5-7.5 0-6.5 .5-6.5 1.5-6 2.5-5 4-4.5 4.5-4.5 5"/>
<path id="s508" d="M90 375l2 7 2.5 6 3.5 6 4.5 5 4.5 4.5 5.5 3.5 6 2.5 6.5 2 7 .5 7.5 .5 8-1 8-2 8.5-2.5 9-3 8.5-4 9-5 9-5.5 9-6 8.5-6.5 8.5-7 9-7.5 8-8 8.5-8 8-8.5 7.5-8.5 6.5-8.5 6.5-9 5.5-9 5-9"/>
<path id="s509" d="M108 238.5l-4 5-3 5-2 5 0 5 .5 4.5 2.5 4.5 3 4.5 4.5 4 5.5 4 6.5 4 7.5 4 8.5 3.5 9 3.5 9.5 3 10.5 2.5 11 2 11.5 1.5 12 1 12.5 .5 12 0 12.5-1 12-1"/>
<path id="s510" d="M107.5 437.5l1.5 3 2.5 1.5 2.5 1 3.5 .5 4-1 5-1 5.5-2 6-2.5 6.5-3.5 7-4 7.5-5 7.5-5.5 8.5-6 8.5-6 8.5-7 9.5-7 9.5-7.5 9.5-8 9.5-8 9.5-8 9.5-8.5 10-8.5 9-8 9.5-8 9-8 9-7.5 9-7.5 8-6.5 8-6.5 8-5.5 7-5 7-4 6-3.5 5.5-2.5 5.5-1.5 4.5-.5 4 .5 3.5 1.5 2.5 3 2 3.5"/>
<path id="s511" d="M107.5 432.5l3.5 5 3 4 3.5 2.5 4 1 3.5-.5 3.5-2 3.5-3 3.5-4.5 3-6 3-6.5 3.5-8 3-8.5 3-9.5 3-10.5 2.5-11 2.5-11.5 2.5-11.5 2.5-12.5 2-12 2-12.5 2-12 1.5-12 1-12 1-11.5 .5-11 0-10"/>
<path id="s512" d="M303 340l-9.5 5-10 5-10.5 4-11 4-11 3.5-11.5 3-11.5 2-11.5 1-12 .5-11.5 0-11.5-.5-11-1.5-10.5-2.5-10.5-2.5-9.5-4-8.5-4.5-8.5-5.5-7-5.5-6.5-6.5-5.5-6.5-4.5-7.5-3.5-7.5-2-8-1-8.5 0-8.5 1-9 2.5-8.5 3-8.5 4.5-8.5 5-8 6.5-7.5"/>
<path id="s513" d="M189 186.5l-6.5 1.5-6 2-6 3.5-5.5 4-5 5-4.5 6-3.5 6.5-3.5 7.5-2.5 8-1.5 8.5-1 9-.5 9.5 0 10 1 10.5 1.5 11 2.5 11 2.5 11 4 11 4.5 11 5 11 6 10.5 7 10.5 7.5 9.5 8 9 8.5 9 9 8 9 7.5 10 6.5 10 6 10.5 4.5 10.5 3 11 2.5 10.5 1 11-.5 10.5-1.5 10-3 10-4 9-5 9-6 7.5-6.5 7.5-7.5"/>
<path id="s514" d="M128.5 438l0 1 .5 .5 1.5 0 2.5-.5 3-1 4-1.5 4.5-2 5-2.5 6-3.5 6-3.5 6.5-5 6.5-5 7-6 7-6 8-6.5 8-6.5 8.5-7 8.5-7.5 8.5-7 8.5-8 8.5-7.5 8-8 8-8.5 7.5-8.5 7.5-8.5 6.5-8.5 6-8.5"/>
<path id="s515" d="M290.5 190.5l-7-3-6.5-2-7-1-7 0-7 1.5-7 2-6.5 3.5-6 4-6 5.5-5.5 6-4.5 7.5-4 8.5-3.5 9-2 9.5-1.5 10.5-.5 11 .5 11.5 2 11.5 3 11.5 4.5 11.5 5 11.5 6 11 7.5 10.5"/>
<path id="s516" d="M297 296.5l-9.5-8-10-7.5-10.5-6.5-11-6-11-5-11.5-5-11.5-3.5-11.5-3.5-12-2-11.5-1.5-11-1-11-.5-10.5 0-10 .5-9.5 1-9 1.5-8.5 2.5-7.5 2.5-6.5 3.5-6.5 3.5-5 4.5-4.5 4.5-3 5-2.5 5"/>
<path id="s517" d="M360 255l-1.5-3-2-2-2.5-1.5-3-.5-4 1-4 1.5-4 3-4.5 4.5-5 5.5-4.5 6.5-4.5 7.5-4.5 8.5-4.5 9.5-4.5 10-4 11-4.5 11.5-3.5 11.5-4 11.5-3.5 12-3 12-3 11.5-2 11.5-2.5 11-1.5 10.5-1 10-1 9.5-.5 8.5 0 7.5"/>
<path id="s518" d="M287 337l-2.5-12.5-3-12-3.5-12.5-3-12-3-12-3.5-11-3.5-11-4-10.5-4.5-10-5-9-5-8.5-5.5-7.5-5.5-7-5.5-6-5.5-5-5.5-4-5.5-3.5-6-2-5.5-1-5.5 0-6 .5"/>
<path id="s519" d="M239 291.5l-12.5-3.5-12-3-12-3.5-12-3-11.5-3-10.5-4-10-3.5-9.5-4-8.5-4.5-7.5-4-6.5-4.5-5-4.5-4-4.5-2.5-4.5-1.5-5 0-4.5 1-4 2-4 3.5-3.5"/>
<path id="s520" d="M192 489.5l11.5 2 11 1.5 11 .5 11-1 10.5-1.5 10-3 9-4 8.5-4.5 8-5.5 6.5-7 5.5-7 4.5-8 3.5-9 2.5-9 1-9.5-.5-10-2-10-3-10-4.5-10-6-9.5-7.5-9-8.5-8.5-9.5-7.5-10.5-7-11-5.5-12-4.5-12-4-12.5-2.5-12.5-2-12-.5-12 0"/>
<path id="s521" d="M176.5 302.5l-6 11-5.5 11.5-4.5 12-4.5 11.5-3.5 12-3 11.5-2 11.5-1 11.5-.5 11 0 11 1 10 1.5 9.5 2.5 9 2.5 8.5 3.5 7.5 4 7 4.5 6 5 5 5.5 4 5.5 3.5 6 2"/>
<path id="s522" d="M320 439l3-9 2.5-9 1.5-9 .5-10-.5-10-2-10.5-2.5-10-3.5-10.5-4.5-10-5.5-10-6.5-10-7-9-8.5-8.5-8.5-8.5-9.5-8-10-7-10.5-6-11-6-11-4.5-11.5-4-11.5-3-11.5-1.5-11.5-1-11.5 .5-11 1.5-10.5 3-10.5 4.5-9.5 5-8.5 6.5-8 7-7 8-6 9-4.5 9.5-4 10.5-2.5 10.5-1 11 0 11.5 1 11.5 2.5 11.5 4 11 5 11 6 11 7 9.5 8 9.5 9 8.5 9.5 7"/>
<path id="s523" d="M176 453.5l-5.5-9-5-9.5-5-10-4.5-10.5-3.5-11.5-3.5-11.5-3-12-2.5-12.5-2-12.5-2-12.5-1.5-12.5-1-12.5-.5-12.5 .5-12.5 .5-11.5 1.5-12 1.5-11 2-10.5 2-10 2.5-9.5 3-8.5 3-7.5 3.5-7 4-6.5 4-5 4.5-4.5 5-3 5.5-2.5"/>
<path id="s524" d="M272.5 298l-8.5-9.5-8.5-9.5-9-8.5-9-8.5-9-8-9-7.5-9-7-8.5-6.5-8-6-8-5.5-7.5-5-6.5-4-6.5-4-5.5-3-5-2.5-4-1.5-3.5-1-3-.5-2 .5"/>
<path id="s525" d="M217 280l12.5 0 13 0 12.5 1 12.5 .5 12 1.5 12 1 11.5 1 11 1 10 1.5 10 1 9 1.5 8 .5 7 .5 6.5 0 5 0 4-1 3-1 2-1.5 .5-1.5-.5-2"/>
<path id="s526" d="M315.5 261.5l1 11 .5 12 0 11.5-.5 12.5-1 12-1.5 12.5-2.5 12.5-2.5 12.5-3 12.5-3.5 12-3.5 11.5-4.5 11.5-4.5 11-4.5 10.5-4.5 10-5 9.5-4.5 8.5-5 8-5 7-5 6-5 5.5-5.5 4-5 3.5-5 2.5-4.5 1-4.5 .5"/>
<path id="s527" d="M288 419l-11.5-.5-12-.5-12-.5-12.5 0-12.5-.5-12.5-.5-12.5 0-12.5-.5-12-1-11.5-1-11.5-1-10.5-1-10-1.5-9.5-1-8.5-1.5-7.5-1-6.5-1.5-6-1-4.5-.5-3.5-1-2 0-1-.5"/>
<path id="s528" d="M107.5 249.5l1.5 5.5 2.5 5.5 3.5 6 4.5 6.5 5 6 6 6.5 7 6.5 7.5 7 8 7 8.5 6.5 9 7.5 9.5 7 9.5 7.5 9.5 8 9.5 8 9.5 8.5 9 8.5 8.5 8.5 8 9 8 8.5 7 9 6 8.5 5.5 9 4 8.5 3.5 8.5 2 8 .5 7.5-1 7-2 7-3.5 6-5 5-6 4.5-7.5 3.5-9 2.5-9.5 2-10.5 .5-11-.5-11.5-1.5"/>
<path id="s529" d="M122 374.5l9.5 5.5 10.5 5.5 10.5 5 11 5 11.5 4.5 12 4.5 11.5 5 12 4.5 12 4.5 11 4.5 11 5 10.5 4.5 10 5 9 4 8.5 4.5 7.5 4 6.5 3.5 5.5 3.5 5 3 3.5 2.5 3 2 1.5 1.5 0 1-1 1"/>
<path id="s530" d="M132 208.5l4.5-3 4.5-2.5 5-2 6-.5 6 0 7 1 7 1.5 7 2.5 8 3.5 8 4.5 8.5 4.5 8.5 5.5 9 6 9 7 9 7.5 9 8 8.5 8.5 8 9 8.5 10 7.5 9.5 8 10 7 10.5 7 10 6.5 10.5 6.5 10.5 5.5 10.5"/>
<path id="s531" d="M231 337.5l5.5-11 5.5-10.5 5-11 5-11 4-10.5 4-10.5 3.5-10 3.5-10 2.5-9 2-9 2-8 1.5-7.5 1-7 .5-6 0-5.5-1-4.5-1.5-4-2-3-3-2-4-1.5"/>
<path id="s532" d="M270.5 427.5l-9.5-3.5-9-4-9-5-9.5-5.5-9-6.5-8.5-7-8.5-7.5-8-8.5-7-9-6.5-10-5.5-10-5-10.5-3.5-11-3-11-2-11-.5-11.5 0-11 1.5-10.5 2-10.5 3.5-10 5-9 5.5-8.5 7-8 8-6.5 8.5-6 9-4.5 10-3.5 10.5-2.5 10.5-1 10.5 0 11 1 10.5 2.5 10.5 3.5 10 4 10 5.5 9 6.5 9 7 8 8"/>
<path id="s533" d="M103.5 297l4.5 7.5 6 7.5 6.5 7.5 7 8 8 7.5 8 8 9 7.5 9.5 7 10 7.5 10.5 7 10.5 7 10.5 6.5 11 6.5 10 7 10 7 9.5 7 8.5 7 8 7 7 7 6 7 4.5 7 3 7 1.5 6.5 0 6-1.5 5.5-3.5 5-5 4-6.5 4-8 3-9.5 2-11 1-11.5 0"/>
<path id="s534" d="M247 452.5l-7-5-6.5-5.5-7-6.5-6.5-7-6-8-5.5-8.5-5.5-9.5-5-9.5-4.5-10.5-4-10.5-4-10.5-3-11.5-3-11-2-11.5-2-11-1.5-11.5-1-11-.5-10.5-1-10.5-.5-10 0-9 .5-9 .5-8.5 1-8 1-7 1.5-6 1.5-5.5 2-4.5 2-4 2.5-3 2-2 2-1"/>
<path id="s535" d="M323 229.5l-2.5-3-3-2-3-.5-3.5 0-3.5 .5-4.5 1.5-4.5 2.5-5 3.5-5.5 3.5-5.5 4.5-6 5.5-6.5 5.5-6 6.5-6.5 7-6.5 7.5-6.5 8-7 8.5-6 9-6 9.5-6 9.5-5.5 10-5 10.5-5 10-4.5 10.5-4 10-3.5 10-3 10-3 9.5-2 9.5-1 9-1 9 .5 8"/>
<path id="s536" d="M95 312.5l4 2.5 4.5 3 5.5 3.5 6 3.5 6.5 3.5 7.5 4 8 4.5 8 4 9 5 9 5 9.5 5 10 5.5 9.5 5.5 10 5.5 10 6 9.5 5.5 10 6 9.5 5.5 9 5 9.5 5 8.5 4.5 8.5 4 8 4 7.5 3.5 7 3.5 6 2.5 5.5 3 4.5 2.5 3.5 2 2.5 2 1.5 1.5"/>
<path id="s537" d="M198 176.5l-1.5 1-2 2-1.5 3-2 4-1.5 5-2 6-1 7-1.5 7.5-1 8.5-1 9.5-.5 9.5 .5 10.5 .5 11 1 11.5 1.5 11.5 2 12 2.5 12.5 3 12.5 2.5 12.5 3 12.5 3 12.5 3.5 12 4 12 4 11.5 4 11.5 4.5 10.5 4 10.5 4.5 9.5 4 9 4.5 8.5 4.5 7.5 4.5 6.5 4 5.5 5 5 4.5 3.5 5.5 2.5 5.5 1.5 5.5 0 6-1 6.5-2"/>
<path id="s538" d="M102.5 387l5-1.5 6-1 6.5-1.5 7.5-1 8-2 9-1.5 9-1.5 10-1.5 11-1 10.5-1 11.5-1 11.5-.5 11.5 0 12 0 12 0 11.5 .5 11.5 0 11 0 11 .5 10.5-.5 9.5 0 9.5-.5 9-.5 8.5-1 7.5-1.5 6.5-2 6.5-2.5 5-2.5 4.5-3 3.5-3 2.5-3.5 2-3.5 1-4.5"/>
<path id="s539" d="M136.5 464l3.5 3 4 2 4.5 1 5 0 5-1 5.5-2 5.5-2.5 5.5-4 6-4.5 6-6 6-6.5 5.5-7.5 6-8 6-9 5.5-9.5 5.5-10 5-10.5 5.5-11 5-11.5 5-11.5 5-11.5 4.5-12 4-12 3.5-12 3.5-12 2.5-11.5 2.5-11 2-11 2-11 1.5-10 .5-9.5 0-8.5 0-8.5-1-7.5-1.5-7-2-6-2.5-5-3.5-4-4-3.5-4-2.5"/>
<path id="s540" d="M377 383l1.5-4 1-4.5-.5-4-1-4.5-2.5-5-3-4.5-4.5-5-5-4.5-6-5-7-4.5-7.5-4-8.5-3.5-9.5-3-10-2.5-11-2-11-1-12-1-12 0-12 0-12.5 1-12.5 1.5-12.5 1.5-12.5 2-12 3-12 3-11.5 3.5-10.5 4.5-10.5 5-9 5.5-8.5 6.5-7 7-6 8-5 8-3.5 8.5-1.5 9-.5 9.5 1.5 9.5 3.5 9.5 4.5 9.5 6.5 9 8 8.5 9 8"/>
<path id="s541" d="M254.5 484l10-1.5 9-2.5 8.5-3 8-4 6.5-5 6-5 5-6 4-7 3-7 1.5-7.5 1-8-.5-8.5-1.5-8.5-2.5-8.5-3.5-9-5-8.5-6-8.5-7-8-8-8-8.5-7.5-9.5-6.5-10.5-6.5-10.5-5.5-11-5-11.5-4.5-12-3.5-11.5-2.5-11.5-2-11.5-1-11.5-.5-11 .5-10 1-10 1.5-9.5 2.5-8.5 2.5-7.5 3.5-7 3.5"/>
<path id="s542" d="M308 322.5l-6.5 9-6.5 9.5-7.5 9-7.5 9-8 9-8.5 8.5-8.5 8-9 8-9 7.5-9 7.5-8.5 6.5-8.5 6.5-8.5 6-8.5 5.5-7.5 5-7.5 4.5-7.5 3.5-7 3-6.5 2-6 1.5-6 .5-5.5-.5-5-1-5-2.5-5-4"/>
<path id="s543" d="M228 346l8.5-9 8.5-9 7.5-9.5 7.5-9.5 6.5-10 6-9.5 5-10 4.5-9.5 3.5-9.5 3-9.5 2-9 1.5-8 .5-8 0-7.5-.5-6.5-1.5-6-2-5-2.5-4.5-3-3.5-4-3-4.5-2"/>
<path id="s544" d="M289.5 315.5l-3 11.5-3 11.5-4 11.5-5 11-5.5 11-6.5 10-7 10-7.5 9-8.5 8-8.5 7.5-9 7-9 6-9.5 5-9 4.5-9 4-8.5 3-8.5 2.5-8 1.5-8 .5-7 0-7-1-6.5-1.5-5.5-2.5-5.5-3-4.5-4"/>
<path id="s545" d="M178 464.5l1.5-5 1.5-6 2-6.5 1.5-7 1.5-8.5 2-9 1-9.5 1-10 .5-11 .5-11 0-11.5-.5-12-.5-12-1-12-.5-12-1.5-12-1-11.5-1-11-1.5-11-1.5-10.5-1-10-1.5-9.5-1-9-1.5-8-1-7.5-1.5-6.5-1-5.5-1.5-4.5-1-3.5-1.5-2.5-1-2-1-.5-.5 0"/>
<path id="s546" d="M122 400.5l.5-10.5 2-11 2-11 3.5-11 4-11.5 4.5-11 5-11.5 6-11 6-11 6.5-11 7.5-10.5 7.5-10.5 8-9.5 8.5-9 8.5-8.5 9.5-7.5 9-7 10-6 9.5-5.5 9.5-4.5 9-4.5 8.5-3 8.5-3 8-1.5 7-1.5 7-.5 6.5 .5 5 1 5 2 3.5 2.5"/>
<path id="s547" d="M79 294.5l-2 6.5-1.5 6.5 0 5.5 1 5.5 1.5 5 3 5 4 4.5 5 4.5 6 3.5 6.5 3.5 7.5 3 8.5 2.5 9 2.5 10 2 10 2 11 2 11 1 11.5 .5 12-.5 12-1 12.5-1.5 12-3 11.5-3.5 11.5-4.5 11-5.5 10-6.5 9.5-7.5 8-8.5 7-9 5.5-9.5 4-10 2.5-10.5 .5-11-1-10.5-3-10.5-4.5-10-6.5-9-8-8-9-7.5-10.5-5.5-11.5-4.5-12-2.5-12.5-1-12 .5-12 2"/>
<path id="s548" d="M374 356.5l-2.5-1.5-3.5-2-4.5-2-5.5-1.5-6.5-2-7-1.5-7.5-2-8.5-2-9.5-1.5-9.5-1.5-10.5-1.5-11-.5-11 0-11.5 0-12 1-12 1-12 2-12 2-11.5 2-12 2-11 2.5-11.5 2-10.5 2-10.5 2-10 1.5-9 1.5-9 1.5-8 1-7.5 1-6.5 1-5.5 .5-5 .5-4 0-3 0-2.5-.5-1.5-1-.5-1.5"/>
<path id="s549" d="M76 320l-1.5 7 0 6.5 .5 5.5 1.5 5.5 3 4.5 3.5 3.5 4.5 3.5 5.5 2 6 1.5 7 .5 8-.5 8-1.5 8.5-2.5 9.5-3 9.5-4.5 9.5-5 9.5-5.5 10-6.5 10-6.5 9.5-7.5 10-7.5 9.5-7.5 9-8 9-8 8-8.5 8-8 7.5-8 7.5-7.5 6.5-7 6-7 5.5-6.5 5-6"/>
<path id="s550" d="M147 380l11 2.5 11 2 11.5 1.5 12 2 12 1.5 12.5 1 12 1.5 12.5 1 12 .5 12 .5 11.5 .5 11.5-.5 11 0 10.5-1 10-1 9-1.5 9-1.5 8-2 7-1.5 6-2 5.5-1.5 4.5-2 3-1.5 2.5-1.5 1.5-2 0-1"/>
<path id="s551" d="M125.5 450l-4-3.5-3-3.5-2.5-4-1.5-5-.5-5.5 0-6 1-6.5 1.5-7 2-7.5 3-8 3-9 4-9 4-9.5 5-10 5.5-9.5 6.5-10 6.5-9.5 8-9 8-9 9-8.5 9-8 9.5-8.5 9.5-7.5 10-7 9.5-7 10-6 9.5-6 9.5-5.5 9.5-5 9-4.5 8.5-4 8-3"/>
<path id="s552" d="M298.5 269l10 6.5 9.5 7.5 9 8.5 8 9 7 9 6 10 4.5 10.5 3.5 11 2.5 11.5 1 11.5-.5 12-1.5 11.5-3.5 11.5-4.5 11.5-6 10.5-7.5 10.5-8.5 9-9.5 8.5-10 7-11 6-11.5 5-12 3.5-12 2.5-12.5 1-12-.5-12-2-11.5-3-10.5-5-10-5.5-9-7.5-7.5-8-6-9.5-4.5-10-3-11-1.5-11 0-11.5 2-11 3.5-11.5 4.5-11 6-10.5 6.5-10.5 8-9.5 8.5-9 9.5-8.5"/>
<path id="s553" d="M296 247.5l-5.5 6-6 6-6.5 6.5-7 6.5-7.5 7-8.5 7-8.5 7-9 6.5-9.5 6.5-10 6-10 5.5-10.5 5-10.5 4.5-10.5 3.5-10.5 3.5-10 2.5-10 2-9 1.5-9 .5-8 .5-7.5-.5-7-1.5-5.5-2-5.5-3-4-3.5-3-4.5-2-5-1-5.5 0-6.5 1-6.5"/>
<path id="s554" d="M270.5 398l-6-8.5-6.5-9-6-10-6.5-10-5.5-11-5-11-5-11-3.5-12-3-11.5-2.5-11.5-1.5-11.5-.5-11.5-.5-10.5 .5-10.5 1-10 1.5-9 2-8.5 3-7.5 4-7 4.5-5.5 5.5-4.5 6.5-3.5 7-2.5 7.5-1 8 0 8.5 1.5 9 3 9 3.5 9 5"/>
<path id="s555" d="M315 281.5l-2 10.5-2.5 11-3.5 11-3.5 11.5-4.5 11-4.5 11.5-5.5 11-5 11-6 11-5.5 11-5 10.5-5 10.5-5 10-4.5 9.5-4 9-3.5 8.5-3 7.5-3 7-2 6.5-2 5-1 4.5-.5 3.5 .5 2.5 1 1.5 1.5 .5"/>
<path id="s556" d="M315.5 383.5l-1-12-2-11.5-3-12-3.5-12-4.5-11.5-5-12-5.5-11.5-5.5-11-7-11-7-10-7.5-10-8-9-8.5-8.5-9-8-9-7-9-6-9-5.5-9-4.5-9.5-4-9-2.5-8.5-2-8.5-1-8-.5-8 1-7 1.5-7 2.5-6 3.5-6 4"/>
<path id="s557" d="M182 307l11.5-3.5 12-3.5 11.5-3.5 11.5-3.5 11.5-4 11.5-3.5 11-4 10.5-3.5 10.5-3 10.5-2.5 9.5-2.5 9.5-1.5 8.5-1.5 8.5-.5 7.5-.5 7 .5 6 .5 5 .5 4.5 1 3 1 2.5 1.5 1 1"/>
<path id="s558" d="M138.5 359l7.5-7 7.5-7 8-7 8.5-7.5 9-7 9.5-7 9.5-7 9.5-6.5 10-6.5 10-6.5 10-5.5 9.5-6 10-5 9.5-5 9-4.5 9.5-4 8.5-3.5 8.5-2.5 8-2 7.5-2 6.5-1 6-1 5.5-.5 4.5 0 3.5 0 2.5 .5 1.5 .5 1 1"/>
<path id="s559" d="M303.5 291.5l-2 11.5-3 11.5-3 11.5-3 12-4 11.5-3.5 12-4.5 11.5-4 11.5-4.5 11-5 10.5-5 10.5-5.5 10-5 9-5 8.5-5 8-4.5 7.5-4 7-3.5 5.5-3.5 5-2.5 4.5-2.5 3-2.5 2.5-2 1.5-1.5 .5"/>
<path id="s560" d="M383 373l0 2-1 1.5-2 1-3 0-3.5-1-4.5-1.5-5-2-6-3-6.5-3.5-7.5-3.5-8-4.5-9-4.5-9-4.5-10-5-10.5-5-10.5-5-11.5-5-11-5-11.5-5.5-11.5-6-11.5-5.5-11.5-6-11.5-5.5-11-5.5-11-5.5-10-5.5-10-5-9.5-5-9-4.5-8.5-4-8-3.5-7.5-3-6.5-2.5-6-2-5.5-1-4.5-1-3.5-.5-3 .5"/>
<path id="s561" d="M128 279.5l9.5-4 10.5-3 10.5-3 11.5-2 11.5-1 12-1 12-.5 12.5 0 12 1 12.5 1 12 2 12 2.5 11.5 2.5 11.5 3.5 11 4 10.5 4.5 10 5 9 5 8.5 5.5 8 5.5 7.5 5.5 6.5 5.5 5.5 5.5 4.5 5.5 4 5.5 3 5 2 4.5 1 4.5 0 4.5"/>
<path id="s562" d="M373 289.5l2.5 8 1.5 7.5 .5 7.5-.5 7-1.5 6-3 6-3.5 5-5 4-5.5 3.5-7 2.5-7.5 1.5-8 .5-9-.5-9.5-1-10-2-10.5-2.5-10.5-3-11-4-10.5-4.5-11-5-11-6-10-6-10.5-7-9.5-7-9.5-7.5-8.5-7.5-7.5-8-6.5-8.5-5.5-8.5-4.5-8.5-3-8.5"/>
<path id="s563" d="M111 435l4.5 1.5 5.5 0 5.5 0 6.5-1.5 7-2 7-2.5 7.5-3.5 8-4.5 8.5-4.5 8.5-5.5 9-6.5 9-6.5 9-7.5 9-7.5 9-8 9-8.5 9.5-8.5 8.5-9 9-8.5 8.5-9 8.5-8.5 8.5-9 7.5-8.5 7.5-8 7.5-8 6.5-7.5 6.5-7 5.5-6.5 5.5-6 4.5-5 4.5-5 3.5-4 3-3.5 2-2.5 2-1.5 1-1 .5-.5"/>
<path id="s564" d="M268 221.5l3 9 2.5 9.5 2.5 10 2 11 2 11 2 11.5 1.5 12 1.5 12.5 1.5 12 1.5 12.5 1.5 12.5 1.5 12 1.5 12 1.5 11.5 1 11.5 1 11 1.5 10 1 9.5 1 9 1.5 8 1.5 7 1 6 2 4.5 1.5 4 2 2 2.5 1 2.5 0 3-2"/>
<path id="s565" d="M379 384l1-1.5 0-1.5-1-1.5-2-1.5-3.5-1.5-4-1.5-5.5-1.5-6-.5-7.5-1-8-.5-9 0-10 .5-10.5 .5-11 1-11.5 1-12 1.5-12 2-12.5 1.5-13 1.5-12.5 2-12.5 1.5-12.5 2-12 2.5-12 2-11 3-11 3-9.5 3-9 3.5-8 4-6.5 4.5-5.5 4.5-4.5 5-3 4.5"/>
<path id="s566" d="M385 347.5l-.5 9-1.5 8-3 8-3.5 7-4 6.5-5.5 5.5-6 5-7 4-7.5 3.5-8 2.5-9 1.5-9.5 1-10 0-10-1-10.5-1.5-11-2-11.5-3-11-3.5-11.5-4.5-11.5-5-11-6-10.5-6.5-10-8-9.5-8-8.5-9.5-8-10-6.5-10.5-5.5-11-4.5-11"/>
<path id="s567" d="M286.5 481l-3 2-3.5 1.5-4 0-4.5-.5-4.5-2-5-2.5-5-3.5-5.5-4-6-5.5-6-6-6-6.5-6.5-7.5-6.5-8.5-6-8.5-6-10-5.5-10-5.5-10.5-5.5-11-5-11.5-5-11.5-4-12-4-12-4-12.5-3-12-3-12-2.5-11.5-2-11.5-1.5-11.5-.5-10.5-.5-10.5 .5-10"/>
<path id="s568" d="M120.5 446l-5.5-5-4.5-5.5-3.5-6-2.5-6-1.5-6.5-.5-7 1-6.5 2-6.5 3.5-6.5 4.5-6 6-6 6.5-5 8-4.5 9-4 10-3.5 10.5-3 11-2 11.5-1.5 12-1 12.5 0 12.5 .5 12 1 12.5 2 11.5 2.5 11.5 3.5 10.5 4.5 10 5 9 6 7.5 6.5 6.5 7.5 5 7.5 3.5 8 3 7.5"/>
<path id="s569" d="M373.5 283.5l0-1.5-1-1-2-.5-2.5-.5-4 0-4.5 0-5.5 .5-6 .5-7.5 1-7.5 1.5-9 1-9 1-10 1.5-10.5 1.5-11 1.5-11.5 2-11.5 2-12 2-12 3-12 3-12 3.5-11.5 4-11.5 4.5-11 5-10.5 5-10.5 5.5"/>
<path id="s570" d="M233 443l-11.5-4.5-11-5-10.5-6.5-10.5-7-9.5-7.5-9.5-8.5-9-9-8-10-7.5-10-6.5-10.5-6-11.5-5-11-3.5-12-2.5-12-1-12-.5-12 1-12 2-12 3.5-11 4-11 5.5-10.5 7-9.5 8.5-8.5 9-8 10.5-6.5 11-5.5 12-4 12.5-3 12.5-1.5 12.5 .5 12.5 1.5 12.5 2.5 11.5 4.5 11.5 5.5 10 6.5 9.5 7.5 8.5 9 7.5 9.5 6.5 10 5 11 4 11 2.5 12 1.5 12-.5 12-1.5 12-3 12-4.5 11-5.5 10.5-7.5 10-8.5 9"/>
<path id="s571" d="M176 417l11.5 5.5 12 4.5 12 3.5 12.5 3 12 2 12.5 1 12.5-.5 12.5-1 12-2 11.5-3 11-4.5 11-5 10-6.5 9-7 8.5-8.5 7.5-9 6.5-10 5.5-11 4-11 3-12 1.5-12 .5-12.5-1-12.5-2-12.5-3.5-12-4.5-12-6-11-7-10.5-8-10-9-8.5-10-7.5-10.5-5.5-10.5-4.5-11-3-11-.5-10 1-9.5 3-8.5 5-7 7-5.5 8-4 9.5-2.5 10.5-.5 11.5 1.5 11.5 3.5 11.5 5 11.5 7 10.5 8 9.5 9.5 8.5 10 7 11 5.5 10.5 4 11 2 10.5 1 10-.5 9-2.5 8.5-3.5"/>
<path id="s572" d="M242.5 243l5 9 5.5 10 5.5 10.5 5 10.5 5 11 5 11.5 4.5 11.5 4.5 11.5 4 11.5 3.5 11.5 3 11 3 11.5 2 11 2 10.5 1.5 10.5 1 9.5 1 9 .5 8.5 0 8 0 7 0 6-.5 5-.5 4.5-1 3-1 2.5-1 1"/>
<path id="s573" d="M177 437.5l2.5-8.5 3.5-8.5 4.5-8.5 6-8.5 7-8.5 8-8 9-8 10-6.5 10.5-6.5 11-5.5 11.5-4.5 11.5-3.5 11.5-2.5 11-2 11-.5 10.5 0 9.5 1 9 1.5 8 3 7 3.5 5.5 5 5 5.5 3.5 5.5 2 6.5 1 7 0 7-1.5 7-2.5 7-3 6.5"/>
<path id="s574" d="M193.5 339l12.5-1.5 12.5-1 12.5-1.5 12.5-1 12.5-1.5 12.5-1.5 12-1 11.5-1 11-1.5 11-1 10.5-1 9.5-.5 9-.5 8 0 7.5 0 6.5 .5 6 1 5 1.5 3.5 2 3 2 2 3 1 3.5 0 3.5"/>
<path id="s575" d="M273 486l2 .5 1-.5 1-1 .5-2.5 .5-3-.5-4.5 0-5-1-6-.5-7-1-7.5-1-8.5-.5-9.5-1-10-1-10.5-.5-11.5-1-11.5-1-12-.5-12.5-1-12.5-.5-12.5-.5-13 0-12.5 .5-12.5 1-12 1-12 1.5-11.5 2-10.5 2-10 2.5-9.5 2-8.5"/>
<path id="s576" d="M275 422.5l1-8 1.5-8.5 .5-9.5 .5-9.5-.5-9.5-1-10-1.5-10-2.5-10-3.5-10-4-10-5-9-5.5-9-6.5-8.5-7-8-7.5-7.5-7.5-7-8-6-8-5.5-8.5-5-8.5-4-8-3.5-8-2.5-8-2-8-1.5-7.5-.5-7 .5-6.5 .5-6 1.5"/>
<path id="s577" d="M296 310l-11-1.5-11.5-1.5-12-1.5-12-1.5-12-2-12-2.5-12-3-11.5-3.5-11-3.5-11-4-10-4.5-9-4.5-9-5-7.5-4.5-7-5-6-4.5-5.5-4.5-4.5-4.5-3-4-2.5-4-1.5-3.5-.5-3 .5-3 1.5-2"/>
<path id="s578" d="M139.5 206l1-2 2-1.5 2 0 3 .5 3 1.5 3.5 2.5 3.5 3 4.5 4.5 4.5 4.5 5 6 5.5 6.5 5 7 5.5 8 6 8.5 5.5 9 6 9.5 6 10 6 10.5 6 10.5 6.5 11 6 11 6 11 6 11 6 10.5 5.5 11 5.5 10.5 6 10 5.5 9.5 5.5 8.5 5 8.5 5.5 7.5 5 7 5 6 5 5"/>
<path id="s579" d="M332 220.5l-3.5-4-4-3-4.5-2.5-5-1-5.5-1-6 .5-6.5 1-6.5 2.5-7.5 2.5-7 4-7.5 4.5-7.5 5.5-7.5 6.5-7 7-7 8-6.5 9-6.5 9.5-5.5 10.5-5 10.5-4 11.5-3.5 12-2.5 12-1.5 12.5-.5 12.5 .5 12 1.5 12 3 11.5 3.5 11.5 5 10.5 6 9.5 6.5 8.5 7.5 7.5 8.5 6.5 9 5 9.5 3.5 9.5 2.5"/>
<path id="s580" d="M177.5 449l12.5 2 12 1 12.5-.5 12.5-1.5 12-2.5 11.5-4.5 11.5-5 10.5-6.5 10-8 9-8.5 8.5-9.5 7.5-10 6.5-10.5 6-11.5 5-11.5 4.5-12 3.5-12 2.5-12 2-12 .5-12 0-12-1.5-12-2-11.5-3-11-4-10.5-5-10-6-9.5-6.5-9-7-8"/>
<path id="s581" d="M106 236.5l-.5-1 .5-1 1.5 0 2.5 0 3 1 4 1.5 4.5 2 5.5 3 6 3 6.5 4 7 4.5 7.5 5 8.5 5 9 5.5 9 5.5 10 6 10 6 10 7 10.5 6.5 10.5 7 10 7 10 7.5 10 7.5 10 8 9 7.5 9 8 8 8 8 8 7 7.5 7 7.5"/>
<path id="s582" d="M378 384.5l-2 6-2 5.5-3 5-4 4-4.5 2.5-5.5 2-5.5 .5-6-.5-6.5-1.5-7-3-7.5-3.5-7.5-5-7.5-5.5-8-6.5-8.5-7-8-8-8.5-8-8-9.5-7.5-9.5-7.5-10-7-11-6.5-11-5.5-11-5-11.5-3.5-11.5-3.5-11-2-11-2-11-1-10 0-9.5"/>
<path id="s583" d="M73 324.5l-.5 2 0 2.5 1.5 1.5 2 2 3.5 1.5 4 1.5 5 1.5 6 1.5 7 1 7.5 1.5 8.5 1.5 9 1 10 .5 10 .5 11 0 11.5 0 11.5-.5 12-.5 12-1 12.5-.5 12.5-.5 12.5-.5 12-.5 12.5-.5 11.5-.5 11.5-.5 11.5-1 10.5-.5 10-1 10-.5 8.5-.5 8.5 0 7.5 .5"/>
<path id="s584" d="M269 258.5l-3.5 10-3.5 10.5-3 11-3.5 11.5-3 11.5-2 12-2 12.5-1 12 0 12.5 .5 12 1.5 11.5 2 11.5 3 10.5 3.5 9.5 4.5 9 5 8 5 7 6 5.5 6 5 6 3.5 6.5 2.5 6 1.5 6 0 6-1 5.5-1.5 5.5-3 5-4.5"/>
<path id="s585" d="M237.5 428.5l.5-10 1-10.5 .5-10.5 1-11.5 1-11.5 1-11.5 1-12 1-12 1-12 1.5-12 1.5-12 1.5-11.5 2-11.5 2-10.5 2.5-10.5 2.5-9.5 2.5-9 3-8.5 2.5-7.5 2.5-7 3-6 2.5-5 3-4 2.5-3 3-2 2-1.5 2.5 0 2 .5"/>
<path id="s586" d="M368.5 364.5l-5.5 0-6.5-.5-7.5-1-8-1.5-8.5-2-9-2.5-10-3-10-3.5-10.5-4-11-4.5-11-5-11-6-10.5-6.5-10.5-6.5-10.5-7-10.5-7.5-9.5-8-9-7.5-8.5-8-8-8-7-8.5-6.5-8-5.5-8-4.5-7.5-4-7-2.5-7-1.5-7 0-6.5 .5-5.5 2-5.5 3-4.5 3.5-4 5-3.5 5.5-2.5"/>
<path id="s587" d="M343.5 227.5l4.5 4 3.5 5 3 5 1.5 5.5 1 6-.5 6-1 6.5-2.5 6.5-4 6.5-4.5 6-5.5 6.5-6.5 6.5-7.5 6.5-8 6-9 5.5-10 5.5-10.5 5-11 4.5-11.5 4.5-11.5 3.5-12.5 3.5-12.5 2.5-12.5 2-12.5 1.5-12 1-12.5 .5-12 0-11.5-.5-11-.5-10.5-1.5"/>
<path id="s588" d="M121.5 354.5l9.5 3.5 10 3 11 2.5 11 2 12 .5 12 0 12-1 12-2 12.5-3 12-4 11.5-4 11.5-5 11-6 10.5-6 10-6.5 9-7.5 8.5-7 7.5-8 7-8 5.5-8.5 4-8.5 3.5-9 1.5-8.5 1-9-.5-8.5-2-8.5-2.5-8-4-8-5-7-6-6.5-6.5-6-8-5-8.5-4.5"/>
<path id="s589" d="M179 309l5 11.5 5.5 11 5.5 11.5 6.5 11 6.5 10.5 6.5 10.5 7 10.5 6.5 10 7 9.5 6.5 9 6.5 9 6 8.5 5 8 4.5 7.5 4 7 3.5 6.5 2.5 5.5 2 5 1.5 4.5 .5 3.5-.5 3-.5 2-2 1"/>
<path id="s590" d="M356 322l-7.5-4-8.5-3.5-9-4-10-3.5-10-4-11-3.5-11.5-4-11.5-3.5-12-3.5-12-3.5-12-3.5-12-3.5-12.5-3-11.5-3.5-12-3.5-11-3-11-3-10-3-10-3-8.5-2.5-8.5-2.5-7.5-2-6.5-2.5-5.5-1.5-5-2-3.5-1.5-2.5-1-1.5-1-.5-.5"/>
<path id="s591" d="M386 332l.5-2.5-1-2-1.5-2-3-2.5-3.5-2.5-5-3-5.5-2.5-6.5-2.5-7.5-2.5-8-2.5-9-2.5-9.5-2-10.5-2-10.5-2-11.5-1-11.5-1-12.5-1-12 0-12.5 0-13 .5-12.5 1-12.5 1.5-12.5 1.5-12.5 2.5-11.5 2.5-11.5 3-11.5 3-10.5 3.5-10 3.5-9 4-8.5 4"/>
<path id="s592" d="M230.5 220.5l-4.5 7.5-4.5 9-4 9.5-4 9.5-3.5 10.5-3.5 11-3 11.5-2.5 11.5-2.5 12-1.5 12.5-1.5 12-1 12.5-.5 12-.5 12 0 11.5 0 11.5 0 11 0 10.5-.5 10-.5 9-1 8.5-1 7.5-1 7-1.5 5.5-2 5-2 4-2 2.5-2 2-2.5 .5-2-.5"/>
<path id="s593" d="M166.5 340.5l11.5 0 12-.5 12.5-1 12-1 12.5-1.5 12.5-2 12-2.5 12-2.5 12-2.5 11.5-2.5 11-2.5 10.5-3 10-3 9.5-3 8.5-3 8-3 7-2 6.5-2.5 6-1.5 4.5-2 4-1.5 3-1 2-.5 1.5-.5 0 0"/>
<path id="s594" d="M284 370.5l-10-6-10-6.5-10-6.5-10.5-7-10-7.5-10-8-9.5-8-9-8-9-8.5-8.5-8.5-7.5-8.5-7.5-8.5-6.5-8.5-5.5-8.5-5-8-4-8.5-2.5-7.5-2-8-.5-7 .5-7 1.5-6 2.5-6 3.5-5 4-4.5 5.5-3.5 6-3"/>
<path id="s595" d="M330 433l.5-8.5-.5-8.5-2-9-2.5-9-3.5-9.5-4.5-9-5.5-9.5-6-9.5-7-9.5-7-9.5-8-9.5-8.5-9-9.5-8.5-9.5-8.5-9.5-8.5-10-8-9.5-8-9.5-7.5-9.5-7.5-9-7.5-9-7-8.5-6-8-6.5-7-5.5-7-5.5-6-4.5-5-4.5-4.5-4-3.5-3.5-2.5-2.5-2-2.5-1-1.5 0-1"/>
<path id="s596" d="M262 193l0 5.5-.5 6.5-.5 7-1 8-1.5 8.5-2 9.5-2 10-2.5 10.5-2.5 10.5-2.5 11.5-2 12-2 12-2 12.5-2 12.5-2 12.5-2 12.5-2 12-2 12.5-2 12-1.5 11.5-2 11-1.5 10.5-1.5 10-2 9.5-1.5 8.5-1.5 8-1 7.5-1 6.5-1 5-.5 5-.5 3.5-.5 2.5 0 1.5 0 1"/>
<path id="s597" d="M362 326.5l-6.5 1.5-7.5 1.5-8 1-9 1-10 1-10 1-11 1.5-11 1.5-11.5 1.5-12 2-12 2.5-12 3-12 3-12 3.5-11.5 4-12 4-11 4-11 4-10.5 3.5-10 3.5-9.5 3.5-9 3.5-8.5 3-7.5 3-7 2.5-6 2-5.5 2-4.5 1.5-3.5 1-3 0-2 0-1-.5"/>
<path id="s598" d="M161 193.5l-4.5 3.5-4 5-3.5 5.5-3 6.5-2.5 7-1.5 8-1 8.5 0 8.5 1 9.5 2 9.5 2.5 10 3.5 10 3.5 10.5 4.5 10.5 5 11 6 10.5 6 10.5 7 10.5 7 10 8 10 8 9.5 8 9.5 8.5 9 8.5 8 9 8 8.5 7 9 6.5 9 5.5 9 4.5 8.5 4 9 3"/>
<path id="s599" d="M150.5 343l11-2.5 11.5-2.5 11.5-3 12-2.5 12-3 12.5-3 12-3 12.5-3.5 12-3 11.5-3.5 11.5-4 11-3.5 10-4 10-4 9-4 8.5-4 7.5-4.5 7-4 6-4 5-4 4-3.5 3-3.5 2-3 1.5-2.5 .5-2.5-.5-2"/>
<path id="s600" d="M85 308.5l-1 12.5-.5 12.5 1.5 12.5 2 12 3.5 12 4.5 12 5.5 11 6.5 10.5 7.5 9.5 8.5 9 9 8.5 10.5 7 10.5 5.5 11.5 5 11.5 3.5 12 2 12 1 12-.5 12-2 12-3 11-4.5 11-6 9.5-7 9-8.5 7.5-9.5 6.5-10 4.5-11.5 3-11.5 1-12.5-1-12-2.5-12-4.5-11.5-6-11-7.5-10-8.5-9-10-7.5-11-6.5-11.5-5-12-3.5-12.5-1.5-12-.5-12.5 1.5-12 2.5-11.5 4.5-10.5 5.5-9.5 7.5-8.5 8"/>
<path id="s601" d="M99 329l6.5-2.5 8-3 8.5-3 9-3.5 9.5-3.5 10-3.5 10.5-4 11-4 11-4 11.5-4 11.5-3.5 12-3 12-3.5 11.5-3 11.5-2.5 11.5-2.5 11-2.5 11-2 10.5-2 9.5-1.5 9.5-1 8.5-1.5 8-1 7-.5 6-.5 5.5 0 4.5 0 3.5-.5"/>
<path id="s602" d="M296.5 214l1.5 8 .5 9 1 9.5 0 10-.5 10.5-1.5 11-2 11-3 11.5-4 11-5 11.5-6 11-6.5 11-7 10.5-8.5 9.5-9 9.5-10 8-10 7-11 6.5-11.5 4.5-11.5 4-12 2.5-11.5 1-11.5 0-11.5-1.5-10.5-2.5-10.5-3.5-9.5-5-8.5-6-8-7-7-8-5.5-9-4.5-10-3.5-10.5-2.5-11-.5-11.5 0-12 2-12 3-12"/>
<path id="s603" d="M133 259.5l-6.5 9.5-5.5 10.5-4.5 11-3.5 11-2.5 11.5-1.5 12 0 11.5 1.5 12 2.5 11.5 4 11 5 10.5 7 9.5 7.5 8.5 9 7.5 9.5 6 10.5 4 11 2.5 11 0 10.5-2 10.5-3.5 9.5-5.5 9-6.5 7-8.5 6-9.5 5-10.5 3.5-11 1.5-12 0-11.5-1.5-12-3-11-4.5-11-5.5-10"/>
<path id="s604" d="M134 457.5l7.5 2.5 8 2 8 .5 8-.5 8.5-2 8-2.5 8-4 8-5 7.5-6.5 7-7 7-8 6.5-8.5 6-9.5 5.5-10.5 5-11 4.5-11 3.5-12 2.5-12 2-12.5 1-12.5 .5-12.5-.5-12.5-2-12-2-12-3-11.5-3.5-11-4-10-4.5-9.5-5-9-5.5-8-5.5-7.5-6-6-6.5-5.5-6.5-4.5-6.5-3.5"/>
<path id="s605" d="M164 197l-1 5-1 6 0 6.5 0 7.5 .5 8 1 9 1.5 9.5 2.5 9.5 2.5 10.5 3 10.5 3.5 11 4 11 5 11.5 5.5 11 6 11 6.5 11 7.5 10 7.5 10 8.5 9.5 8.5 8.5 9 8 9.5 7.5 9.5 6.5 9.5 5.5 9.5 4.5 10 3.5 9.5 2.5 10 1 9.5-.5 9-1.5 9-3.5 8-4.5 8-5.5 7-7.5 6-8"/>
</defs><g id="ball">
<use href="#s0" class="o4"/><use href="#s0" class="c4"/><use href="#s0" class="h4"/>
<use href="#s1" class="o3"/><use href="#s1" class="c3"/><use href="#s1" class="h3"/>
<use href="#s2" class="o4"/><use href="#s2" class="c4"/><use href="#s2" class="h4"/>
<use href="#s3" class="o2"/><use href="#s3" class="c2"/><use href="#s3" class="h2"/>
<use href="#s4" class="o4"/><use href="#s4" class="c4"/><use href="#s4" class="h4"/>
<use href="#s5" class="o3"/><use href="#s5" class="c3"/><use href="#s5" class="h3"/>
<use href="#s6" class="o2"/><use href="#s6" class="c2"/><use href="#s6" class="h2"/>
<use href="#s7" class="o2"/><use href="#s7" class="c2"/><use href="#s7" class="h2"/>
<use href="#s8" class="o4"/><use href="#s8" class="c4"/><use href="#s8" class="h4"/>
<use href="#s9" class="o3"/><use href="#s9" class="c3"/><use href="#s9" class="h3"/>
<use href="#s12" class="o4"/><use href="#s12" class="c4"/><use href="#s12" class="h4"/>
<use href="#s13" class="o2"/><use href="#s13" class="c2"/><use href="#s13" class="h2"/>
<use href="#s14" class="o3"/><use href="#s14" class="c3"/><use href="#s14" class="h3"/>
<use href="#s15" class="o3"/><use href="#s15" class="c3"/><use href="#s15" class="h3"/>
<use href="#s16" class="o4"/><use href="#s16" class="c4"/><use href="#s16" class="h4"/>
<use href="#s17" class="o2"/><use href="#s17" class="c2"/><use href="#s17" class="h2"/>
<use href="#s18" class="o3"/><use href="#s18" class="c3"/><use href="#s18" class="h3"/>
<use href="#s20" class="o3"/><use href="#s20" class="c3"/><use href="#s20" class="h3"/>
<use href="#s21" class="o3"/><use href="#s21" class="c3"/><use href="#s21" class="h3"/>
<use href="#s23" class="o3"/><use href="#s23" class="c3"/><use href="#s23" class="h3"/>
<use href="#s24" class="o4"/><use href="#s24" class="c4"/><use href="#s24" class="h4"/>
<use href="#s25" class="o3"/><use href="#s25" class="c3"/><use href="#s25" class="h3"/>
<use href="#s27" class="o4"/><use href="#s27" class="c4"/><use href="#s27" class="h4"/>
<use href="#s29" class="o3"/><use href="#s29" class="c3"/><use href="#s29" class="h3"/>
<use href="#s30" class="o2"/><use href="#s30" class="c2"/><use href="#s30" class="h2"/>
<use href="#s32" class="o4"/><use href="#s32" class="c4"/><use href="#s32" class="h4"/>
<use href="#s33" class="o3"/><use href="#s33" class="c3"/><use href="#s33" class="h3"/>
<use href="#s34" class="o3"/><use href="#s34" class="c3"/><use href="#s34" class="h3"/>
<use href="#s35" class="o3"/><use href="#s35" class="c3"/><use href="#s35" class="h3"/>
<use href="#s36" class="o4"/><use href="#s36" class="c4"/><use href="#s36" class="h4"/>
<use href="#s37" class="o3"/><use href="#s37" class="c3"/><use href="#s37" class="h3"/>
<use href="#s38" class="o3"/><use href="#s38" class="c3"/><use href="#s38" class="h3"/>
<use href="#s39" class="o2"/><use href="#s39" class="c2"/><use href="#s39" class="h2"/>
<use href="#s40" class="o3"/><use href="#s40" class="c3"/><use href="#s40" class="h3"/>
<use href="#s41" class="o2"/><use href="#s41" class="c2"/><use href="#s41" class="h2"/>
<use href="#s42" class="o3"/><use href="#s42" class="c3"/><use href="#s42" class="h3"/>
<use href="#s43" class="o2"/><use href="#s43" class="c2"/><use href="#s43" class="h2"/>
<use href="#s44" class="o4"/><use href="#s44" class="c4"/><use href="#s44" class="h4"/>
<use href="#s45" class="o4"/><use href="#s45" class="c4"/><use href="#s45" class="h4"/>
<use href="#s46" class="o3"/><use href="#s46" class="c3"/><use href="#s46" class="h3"/>
<use href="#s48" class="o4"/><use href="#s48" class="c4"/><use href="#s48" class="h4"/>
<use href="#s49" class="o1"/><use href="#s49" class="c1"/><use href="#s49" class="h1"/>
<use href="#s50" class="o3"/><use href="#s50" class="c3"/><use href="#s50" class="h3"/>
<use href="#s51" class="o4"/><use href="#s51" class="c4"/><use href="#s51" class="h4"/>
<use href="#s52" class="o4"/><use href="#s52" class="c4"/><use href="#s52" class="h4"/>
<use href="#s53" class="o4"/><use href="#s53" class="c4"/><use href="#s53" class="h4"/>
<use href="#s54" class="o3"/><use href="#s54" class="c3"/><use href="#s54" class="h3"/>
<use href="#s55" class="o4"/><use href="#s55" class="c4"/><use href="#s55" class="h4"/>
<use href="#s56" class="o3"/><use href="#s56" class="c3"/><use href="#s56" class="h3"/>
<use href="#s57" class="o3"/><use href="#s57" class="c3"/><use href="#s57" class="h3"/>
<use href="#s58" class="o3"/><use href="#s58" class="c3"/><use href="#s58" class="h3"/>
<use href="#s59" class="o1"/><use href="#s59" class="c1"/><use href="#s59" class="h1"/>
<use href="#s60" class="o3"/><use href="#s60" class="c3"/><use href="#s60" class="h3"/>
<use href="#s61" class="o3"/><use href="#s61" class="c3"/><use href="#s61" class="h3"/>
<use href="#s62" class="o4"/><use href="#s62" class="c4"/><use href="#s62" class="h4"/>
<use href="#s63" class="o2"/><use href="#s63" class="c2"/><use href="#s63" class="h2"/>
<use href="#s64" class="o1"/><use href="#s64" class="c1"/><use href="#s64" class="h1"/>
<use href="#s65" class="o3"/><use href="#s65" class="c3"/><use href="#s65" class="h3"/>
<use href="#s66" class="o2"/><use href="#s66" class="c2"/><use href="#s66" class="h2"/>
<use href="#s67" class="o4"/><use href="#s67" class="c4"/><use href="#s67" class="h4"/>
<use href="#s68" class="o2"/><use href="#s68" class="c2"/><use href="#s68" class="h2"/>
<use href="#s69" class="o3"/><use href="#s69" class="c3"/><use href="#s69" class="h3"/>
<use href="#s70" class="o3"/><use href="#s70" class="c3"/><use href="#s70" class="h3"/>
<use href="#s71" class="o3"/><use href="#s71" class="c3"/><use href="#s71" class="h3"/>
<use href="#s72" class="o2"/><use href="#s72" class="c2"/><use href="#s72" class="h2"/>
<use href="#s73" class="o4"/><use href="#s73" class="c4"/><use href="#s73" class="h4"/>
<use href="#s74" class="o2"/><use href="#s74" class="c2"/><use href="#s74" class="h2"/>
<use href="#s75" class="o4"/><use href="#s75" class="c4"/><use href="#s75" class="h4"/>
<use href="#s76" class="o4"/><use href="#s76" class="c4"/><use href="#s76" class="h4"/>
<use href="#s77" class="o3"/><use href="#s77" class="c3"/><use href="#s77" class="h3"/>
<use href="#s78" class="o3"/><use href="#s78" class="c3"/><use href="#s78" class="h3"/>
<use href="#s79" class="o1"/><use href="#s79" class="c1"/><use href="#s79" class="h1"/>
<use href="#s80" class="o2"/><use href="#s80" class="c2"/><use href="#s80" class="h2"/>
<use href="#s81" class="o3"/><use href="#s81" class="c3"/><use href="#s81" class="h3"/>
<use href="#s82" class="o3"/><use href="#s82" class="c3"/><use href="#s82" class="h3"/>
<use href="#s83" class="o2"/><use href="#s83" class="c2"/><use href="#s83" class="h2"/>
<use href="#s84" class="o3"/><use href="#s84" class="c3"/><use href="#s84" class="h3"/>
<use href="#s85" class="o3"/><use href="#s85" class="c3"/><use href="#s85" class="h3"/>
<use href="#s86" class="o2"/><use href="#s86" class="c2"/><use href="#s86" class="h2"/>
<use href="#s87" class="o1"/><use href="#s87" class="c1"/><use href="#s87" class="h1"/>
<use href="#s88" class="o2"/><use href="#s88" class="c2"/><use href="#s88" class="h2"/>
<use href="#s89" class="o2"/><use href="#s89" class="c2"/><use href="#s89" class="h2"/>
<use href="#s90" class="o2"/><use href="#s90" class="c2"/><use href="#s90" class="h2"/>
<use href="#s91" class="o2"/><use href="#s91" class="c2"/><use href="#s91" class="h2"/>
<use href="#s92" class="o4"/><use href="#s92" class="c4"/><use href="#s92" class="h4"/>
<use href="#s93" class="o4"/><use href="#s93" class="c4"/><use href="#s93" class="h4"/>
<use href="#s94" class="o2"/><use href="#s94" class="c2"/><use href="#s94" class="h2"/>
<use href="#s95" class="o4"/><use href="#s95" class="c4"/><use href="#s95" class="h4"/>
<use href="#s96" class="o3"/><use href="#s96" class="c3"/><use href="#s96" class="h3"/>
<use href="#s97" class="o3"/><use href="#s97" class="c3"/><use href="#s97" class="h3"/>
<use href="#s98" class="o3"/><use href="#s98" class="c3"/><use href="#s98" class="h3"/>
<use href="#s99" class="o2"/><use href="#s99" class="c2"/><use href="#s99" class="h2"/>
<use href="#s100" class="o2"/><use href="#s100" class="c2"/><use href="#s100" class="h2"/>
<use href="#s101" class="o4"/><use href="#s101" class="c4"/><use href="#s101" class="h4"/>
<use href="#s102" class="o1"/><use href="#s102" class="c1"/><use href="#s102" class="h1"/>
<use href="#s103" class="o4"/><use href="#s103" class="c4"/><use href="#s103" class="h4"/>
<use href="#s104" class="o4"/><use href="#s104" class="c4"/><use href="#s104" class="h4"/>
<use href="#s105" class="o3"/><use href="#s105" class="c3"/><use href="#s105" class="h3"/>
<use href="#s106" class="o2"/><use href="#s106" class="c2"/><use href="#s106" class="h2"/>
<use href="#s107" class="o4"/><use href="#s107" class="c4"/><use href="#s107" class="h4"/>
<use href="#s108" class="o3"/><use href="#s108" class="c3"/><use href="#s108" class="h3"/>
<use href="#s109" class="o3"/><use href="#s109" class="c3"/><use href="#s109" class="h3"/>
<use href="#s110" class="o3"/><use href="#s110" class="c3"/><use href="#s110" class="h3"/>
<use href="#s111" class="o3"/><use href="#s111" class="c3"/><use href="#s111" class="h3"/>
<use href="#s112" class="o3"/><use href="#s112" class="c3"/><use href="#s112" class="h3"/>
<use href="#s113" class="o3"/><use href="#s113" class="c3"/><use href="#s113" class="h3"/>
<use href="#s114" class="o3"/><use href="#s114" class="c3"/><use href="#s114" class="h3"/>
<use href="#s115" class="o3"/><use href="#s115" class="c3"/><use href="#s115" class="h3"/>
<use href="#s116" class="o3"/><use href="#s116" class="c3"/><use href="#s116" class="h3"/>
<use href="#s117" class="o2"/><use href="#s117" class="c2"/><use href="#s117" class="h2"/>
<use href="#s118" class="o2"/><use href="#s118" class="c2"/><use href="#s118" class="h2"/>
<use href="#s119" class="o4"/><use href="#s119" class="c4"/><use href="#s119" class="h4"/>
<use href="#s120" class="o4"/><use href="#s120" class="c4"/><use href="#s120" class="h4"/>
<use href="#s121" class="o3"/><use href="#s121" class="c3"/><use href="#s121" class="h3"/>
<use href="#s122" class="o4"/><use href="#s122" class="c4"/><use href="#s122" class="h4"/>
<use href="#s123" class="o3"/><use href="#s123" class="c3"/><use href="#s123" class="h3"/>
<use href="#s124" class="o3"/><use href="#s124" class="c3"/><use href="#s124" class="h3"/>
<use href="#s125" class="o4"/><use href="#s125" class="c4"/><use href="#s125" class="h4"/>
<use href="#s126" class="o2"/><use href="#s126" class="c2"/><use href="#s126" class="h2"/>
<use href="#s127" class="o4"/><use href="#s127" class="c4"/><use href="#s127" class="h4"/>
<use href="#s128" class="o2"/><use href="#s128" class="c2"/><use href="#s128" class="h2"/>
<use href="#s129" class="o2"/><use href="#s129" class="c2"/><use href="#s129" class="h2"/>
<use href="#s130" class="o1"/><use href="#s130" class="c1"/><use href="#s130" class="h1"/>
<use href="#s131" class="o3"/><use href="#s131" class="c3"/><use href="#s131" class="h3"/>
<use href="#s132" class="o3"/><use href="#s132" class="c3"/><use href="#s132" class="h3"/>
<use href="#s133" class="o2"/><use href="#s133" class="c2"/><use href="#s133" class="h2"/>
<use href="#s134" class="o3"/><use href="#s134" class="c3"/><use href="#s134" class="h3"/>
<use href="#s135" class="o3"/><use href="#s135" class="c3"/><use href="#s135" class="h3"/>
<use href="#s136" class="o4"/><use href="#s136" class="c4"/><use href="#s136" class="h4"/>
<use href="#s137" class="o2"/><use href="#s137" class="c2"/><use href="#s137" class="h2"/>
<use href="#s138" class="o3"/><use href="#s138" class="c3"/><use href="#s138" class="h3"/>
<use href="#s139" class="o3"/><use href="#s139" class="c3"/><use href="#s139" class="h3"/>
<use href="#s140" class="o3"/><use href="#s140" class="c3"/><use href="#s140" class="h3"/>
<use href="#s141" class="o3"/><use href="#s141" class="c3"/><use href="#s141" class="h3"/>
<use href="#s142" class="o4"/><use href="#s142" class="c4"/><use href="#s142" class="h4"/>
<use href="#s143" class="o3"/><use href="#s143" class="c3"/><use href="#s143" class="h3"/>
<use href="#s144" class="o3"/><use href="#s144" class="c3"/><use href="#s144" class="h3"/>
<use href="#s145" class="o4"/><use href="#s145" class="c4"/><use href="#s145" class="h4"/>
<use href="#s146" class="o3"/><use href="#s146" class="c3"/><use href="#s146" class="h3"/>
<use href="#s147" class="o3"/><use href="#s147" class="c3"/><use href="#s147" class="h3"/>
<use href="#s148" class="o1"/><use href="#s148" class="c1"/><use href="#s148" class="h1"/>
<use href="#s149" class="o3"/><use href="#s149" class="c3"/><use href="#s149" class="h3"/>
<use href="#s150" class="o2"/><use href="#s150" class="c2"/><use href="#s150" class="h2"/>
<use href="#s151" class="o4"/><use href="#s151" class="c4"/><use href="#s151" class="h4"/>
<use href="#s152" class="o5"/><use href="#s152" class="c5"/><use href="#s152" class="h5"/>
<use href="#s153" class="o2"/><use href="#s153" class="c2"/><use href="#s153" class="h2"/>
<use href="#s154" class="o3"/><use href="#s154" class="c3"/><use href="#s154" class="h3"/>
<use href="#s155" class="o3"/><use href="#s155" class="c3"/><use href="#s155" class="h3"/>
<use href="#s156" class="o3"/><use href="#s156" class="c3"/><use href="#s156" class="h3"/>
<use href="#s157" class="o2"/><use href="#s157" class="c2"/><use href="#s157" class="h2"/>
<use href="#s158" class="o3"/><use href="#s158" class="c3"/><use href="#s158" class="h3"/>
<use href="#s159" class="o3"/><use href="#s159" class="c3"/><use href="#s159" class="h3"/>
<use href="#s160" class="o4"/><use href="#s160" class="c4"/><use href="#s160" class="h4"/>
<use href="#s161" class="o3"/><use href="#s161" class="c3"/><use href="#s161" class="h3"/>
<use href="#s162" class="o2"/><use href="#s162" class="c2"/><use href="#s162" class="h2"/>
<use href="#s163" class="o3"/><use href="#s163" class="c3"/><use href="#s163" class="h3"/>
<use href="#s164" class="o2"/><use href="#s164" class="c2"/><use href="#s164" class="h2"/>
<use href="#s165" class="o2"/><use href="#s165" class="c2"/><use href="#s165" class="h2"/>
<use href="#s166" class="o3"/><use href="#s166" class="c3"/><use href="#s166" class="h3"/>
<use href="#s167" class="o4"/><use href="#s167" class="c4"/><use href="#s167" class="h4"/>
<use href="#s168" class="o4"/><use href="#s168" class="c4"/><use href="#s168" class="h4"/>
<use href="#s169" class="o4"/><use href="#s169" class="c4"/><use href="#s169" class="h4"/>
<use href="#s170" class="o4"/><use href="#s170" class="c4"/><use href="#s170" class="h4"/>
<use href="#s171" class="o4"/><use href="#s171" class="c4"/><use href="#s171" class="h4"/>
<use href="#s172" class="o3"/><use href="#s172" class="c3"/><use href="#s172" class="h3"/>
<use href="#s173" class="o5"/><use href="#s173" class="c5"/><use href="#s173" class="h5"/>
<use href="#s174" class="o3"/><use href="#s174" class="c3"/><use href="#s174" class="h3"/>
<use href="#s175" class="o2"/><use href="#s175" class="c2"/><use href="#s175" class="h2"/>
<use href="#s176" class="o2"/><use href="#s176" class="c2"/><use href="#s176" class="h2"/>
<use href="#s177" class="o3"/><use href="#s177" class="c3"/><use href="#s177" class="h3"/>
<use href="#s178" class="o4"/><use href="#s178" class="c4"/><use href="#s178" class="h4"/>
<use href="#s179" class="o3"/><use href="#s179" class="c3"/><use href="#s179" class="h3"/>
<use href="#s180" class="o2"/><use href="#s180" class="c2"/><use href="#s180" class="h2"/>
<use href="#s181" class="o3"/><use href="#s181" class="c3"/><use href="#s181" class="h3"/>
<use href="#s182" class="o5"/><use href="#s182" class="c5"/><use href="#s182" class="h5"/>
<use href="#s183" class="o4"/><use href="#s183" class="c4"/><use href="#s183" class="h4"/>
<use href="#s184" class="o5"/><use href="#s184" class="c5"/><use href="#s184" class="h5"/>
<use href="#s185" class="o4"/><use href="#s185" class="c4"/><use href="#s185" class="h4"/>
<use href="#s186" class="o4"/><use href="#s186" class="c4"/><use href="#s186" class="h4"/>
<use href="#s187" class="o3"/><use href="#s187" class="c3"/><use href="#s187" class="h3"/>
<use href="#s188" class="o3"/><use href="#s188" class="c3"/><use href="#s188" class="h3"/>
<use href="#s189" class="o5"/><use href="#s189" class="c5"/><use href="#s189" class="h5"/>
<use href="#s190" class="o4"/><use href="#s190" class="c4"/><use href="#s190" class="h4"/>
<use href="#s191" class="o3"/><use href="#s191" class="c3"/><use href="#s191" class="h3"/>
<use href="#s192" class="o5"/><use href="#s192" class="c5"/><use href="#s192" class="h5"/>
<use href="#s193" class="o3"/><use href="#s193" class="c3"/><use href="#s193" class="h3"/>
<use href="#s194" class="o3"/><use href="#s194" class="c3"/><use href="#s194" class="h3"/>
<use href="#s195" class="o1"/><use href="#s195" class="c1"/><use href="#s195" class="h1"/>
<use href="#s196" class="o1"/><use href="#s196" class="c1"/><use href="#s196" class="h1"/>
<use href="#s197" class="o3"/><use href="#s197" class="c3"/><use href="#s197" class="h3"/>
<use href="#s198" class="o4"/><use href="#s198" class="c4"/><use href="#s198" class="h4"/>
<use href="#s199" class="o4"/><use href="#s199" class="c4"/><use href="#s199" class="h4"/>
<use href="#s200" class="o2"/><use href="#s200" class="c2"/><use href="#s200" class="h2"/>
<use href="#s201" class="o2"/><use href="#s201" class="c2"/><use href="#s201" class="h2"/>
<use href="#s202" class="o3"/><use href="#s202" class="c3"/><use href="#s202" class="h3"/>
<use href="#s203" class="o3"/><use href="#s203" class="c3"/><use href="#s203" class="h3"/>
<use href="#s204" class="o2"/><use href="#s204" class="c2"/><use href="#s204" class="h2"/>
<use href="#s205" class="o4"/><use href="#s205" class="c4"/><use href="#s205" class="h4"/>
<use href="#s206" class="o3"/><use href="#s206" class="c3"/><use href="#s206" class="h3"/>
<use href="#s207" class="o1"/><use href="#s207" class="c1"/><use href="#s207" class="h1"/>
<use href="#s208" class="o4"/><use href="#s208" class="c4"/><use href="#s208" class="h4"/>
<use href="#s209" class="o4"/><use href="#s209" class="c4"/><use href="#s209" class="h4"/>
<use href="#s210" class="o3"/><use href="#s210" class="c3"/><use href="#s210" class="h3"/>
<use href="#s211" class="o3"/><use href="#s211" class="c3"/><use href="#s211" class="h3"/>
<use href="#s212" class="o3"/><use href="#s212" class="c3"/><use href="#s212" class="h3"/>
<use href="#s213" class="o2"/><use href="#s213" class="c2"/><use href="#s213" class="h2"/>
<use href="#s214" class="o1"/><use href="#s214" class="c1"/><use href="#s214" class="h1"/>
<use href="#s215" class="o4"/><use href="#s215" class="c4"/><use href="#s215" class="h4"/>
<use href="#s216" class="o3"/><use href="#s216" class="c3"/><use href="#s216" class="h3"/>
<use href="#s217" class="o2"/><use href="#s217" class="c2"/><use href="#s217" class="h2"/>
<use href="#s218" class="o4"/><use href="#s218" class="c4"/><use href="#s218" class="h4"/>
<use href="#s219" class="o4"/><use href="#s219" class="c4"/><use href="#s219" class="h4"/>
<use href="#s220" class="o3"/><use href="#s220" class="c3"/><use href="#s220" class="h3"/>
<use href="#s221" class="o3"/><use href="#s221" class="c3"/><use href="#s221" class="h3"/>
<use href="#s222" class="o3"/><use href="#s222" class="c3"/><use href="#s222" class="h3"/>
<use href="#s223" class="o3"/><use href="#s223" class="c3"/><use href="#s223" class="h3"/>
<use href="#s224" class="o3"/><use href="#s224" class="c3"/><use href="#s224" class="h3"/>
<use href="#s225" class="o5"/><use href="#s225" class="c5"/><use href="#s225" class="h5"/>
<use href="#s226" class="o3"/><use href="#s226" class="c3"/><use href="#s226" class="h3"/>
<use href="#s227" class="o3"/><use href="#s227" class="c3"/><use href="#s227" class="h3"/>
<use href="#s228" class="o4"/><use href="#s228" class="c4"/><use href="#s228" class="h4"/>
<use href="#s229" class="o2"/><use href="#s229" class="c2"/><use href="#s229" class="h2"/>
<use href="#s230" class="o4"/><use href="#s230" class="c4"/><use href="#s230" class="h4"/>
<use href="#s231" class="o3"/><use href="#s231" class="c3"/><use href="#s231" class="h3"/>
<use href="#s232" class="o4"/><use href="#s232" class="c4"/><use href="#s232" class="h4"/>
<use href="#s233" class="o4"/><use href="#s233" class="c4"/><use href="#s233" class="h4"/>
<use href="#s234" class="o3"/><use href="#s234" class="c3"/><use href="#s234" class="h3"/>
<use href="#s235" class="o3"/><use href="#s235" class="c3"/><use href="#s235" class="h3"/>
<use href="#s236" class="o5"/><use href="#s236" class="c5"/><use href="#s236" class="h5"/>
<use href="#s237" class="o3"/><use href="#s237" class="c3"/><use href="#s237" class="h3"/>
<use href="#s238" class="o4"/><use href="#s238" class="c4"/><use href="#s238" class="h4"/>
<use href="#s239" class="o4"/><use href="#s239" class="c4"/><use href="#s239" class="h4"/>
<use href="#s240" class="o3"/><use href="#s240" class="c3"/><use href="#s240" class="h3"/>
<use href="#s241" class="o3"/><use href="#s241" class="c3"/><use href="#s241" class="h3"/>
<use href="#s242" class="o4"/><use href="#s242" class="c4"/><use href="#s242" class="h4"/>
<use href="#s243" class="o3"/><use href="#s243" class="c3"/><use href="#s243" class="h3"/>
<use href="#s244" class="o4"/><use href="#s244" class="c4"/><use href="#s244" class="h4"/>
<use href="#s245" class="o4"/><use href="#s245" class="c4"/><use href="#s245" class="h4"/>
<use href="#s246" class="o4"/><use href="#s246" class="c4"/><use href="#s246" class="h4"/>
<use href="#s247" class="o4"/><use href="#s247" class="c4"/><use href="#s247" class="h4"/>
<use href="#s248" class="o4"/><use href="#s248" class="c4"/><use href="#s248" class="h4"/>
<use href="#s249" class="o3"/><use href="#s249" class="c3"/><use href="#s249" class="h3"/>
<use href="#s250" class="o2"/><use href="#s250" class="c2"/><use href="#s250" class="h2"/>
<use href="#s251" class="o3"/><use href="#s251" class="c3"/><use href="#s251" class="h3"/>
<use href="#s252" class="o3"/><use href="#s252" class="c3"/><use href="#s252" class="h3"/>
<use href="#s253" class="o4"/><use href="#s253" class="c4"/><use href="#s253" class="h4"/>
<use href="#s254" class="o3"/><use href="#s254" class="c3"/><use href="#s254" class="h3"/>
<use href="#s255" class="o4"/><use href="#s255" class="c4"/><use href="#s255" class="h4"/>
<use href="#s256" class="o4"/><use href="#s256" class="c4"/><use href="#s256" class="h4"/>
<use href="#s257" class="o4"/><use href="#s257" class="c4"/><use href="#s257" class="h4"/>
<use href="#s258" class="o4"/><use href="#s258" class="c4"/><use href="#s258" class="h4"/>
<use href="#s259" class="o3"/><use href="#s259" class="c3"/><use href="#s259" class="h3"/>
<use href="#s260" class="o3"/><use href="#s260" class="c3"/><use href="#s260" class="h3"/>
<use href="#s261" class="o5"/><use href="#s261" class="c5"/><use href="#s261" class="h5"/>
<use href="#s262" class="o4"/><use href="#s262" class="c4"/><use href="#s262" class="h4"/>
<use href="#s263" class="o3"/><use href="#s263" class="c3"/><use href="#s263" class="h3"/>
<use href="#s264" class="o2"/><use href="#s264" class="c2"/><use href="#s264" class="h2"/>
<use href="#s265" class="o5"/><use href="#s265" class="c5"/><use href="#s265" class="h5"/>
<use href="#s266" class="o2"/><use href="#s266" class="c2"/><use href="#s266" class="h2"/>
<use href="#s267" class="o2"/><use href="#s267" class="c2"/><use href="#s267" class="h2"/>
<use href="#s268" class="o3"/><use href="#s268" class="c3"/><use href="#s268" class="h3"/>
<use href="#s269" class="o2"/><use href="#s269" class="c2"/><use href="#s269" class="h2"/>
<use href="#s270" class="o2"/><use href="#s270" class="c2"/><use href="#s270" class="h2"/>
<use href="#s271" class="o5"/><use href="#s271" class="c5"/><use href="#s271" class="h5"/>
<use href="#s272" class="o4"/><use href="#s272" class="c4"/><use href="#s272" class="h4"/>
<use href="#s273" class="o3"/><use href="#s273" class="c3"/><use href="#s273" class="h3"/>
<use href="#s274" class="o3"/><use href="#s274" class="c3"/><use href="#s274" class="h3"/>
<use href="#s275" class="o2"/><use href="#s275" class="c2"/><use href="#s275" class="h2"/>
<use href="#s276" class="o4"/><use href="#s276" class="c4"/><use href="#s276" class="h4"/>
<use href="#s277" class="o4"/><use href="#s277" class="c4"/><use href="#s277" class="h4"/>
<use href="#s278" class="o3"/><use href="#s278" class="c3"/><use href="#s278" class="h3"/>
<use href="#s279" class="o4"/><use href="#s279" class="c4"/><use href="#s279" class="h4"/>
<use href="#s280" class="o4"/><use href="#s280" class="c4"/><use href="#s280" class="h4"/>
<use href="#s281" class="o3"/><use href="#s281" class="c3"/><use href="#s281" class="h3"/>
<use href="#s282" class="o3"/><use href="#s282" class="c3"/><use href="#s282" class="h3"/>
<use href="#s283" class="o1"/><use href="#s283" class="c1"/><use href="#s283" class="h1"/>
<use href="#s284" class="o5"/><use href="#s284" class="c5"/><use href="#s284" class="h5"/>
<use href="#s285" class="o3"/><use href="#s285" class="c3"/><use href="#s285" class="h3"/>
<use href="#s286" class="o4"/><use href="#s286" class="c4"/><use href="#s286" class="h4"/>
<use href="#s287" class="o3"/><use href="#s287" class="c3"/><use href="#s287" class="h3"/>
<use href="#s288" class="o3"/><use href="#s288" class="c3"/><use href="#s288" class="h3"/>
<use href="#s289" class="o5"/><use href="#s289" class="c5"/><use href="#s289" class="h5"/>
<use href="#s290" class="o5"/><use href="#s290" class="c5"/><use href="#s290" class="h5"/>
<use href="#s291" class="o2"/><use href="#s291" class="c2"/><use href="#s291" class="h2"/>
<use href="#s292" class="o3"/><use href="#s292" class="c3"/><use href="#s292" class="h3"/>
<use href="#s293" class="o3"/><use href="#s293" class="c3"/><use href="#s293" class="h3"/>
<use href="#s294" class="o5"/><use href="#s294" class="c5"/><use href="#s294" class="h5"/>
<use href="#s295" class="o3"/><use href="#s295" class="c3"/><use href="#s295" class="h3"/>
<use href="#s296" class="o3"/><use href="#s296" class="c3"/><use href="#s296" class="h3"/>
<use href="#s297" class="o3"/><use href="#s297" class="c3"/><use href="#s297" class="h3"/>
<use href="#s298" class="o3"/><use href="#s298" class="c3"/><use href="#s298" class="h3"/>
<use href="#s299" class="o3"/><use href="#s299" class="c3"/><use href="#s299" class="h3"/>
<use href="#s300" class="o2"/><use href="#s300" class="c2"/><use href="#s300" class="h2"/>
<use href="#s301" class="o1"/><use href="#s301" class="c1"/><use href="#s301" class="h1"/>
<use href="#s302" class="o2"/><use href="#s302" class="c2"/><use href="#s302" class="h2"/>
<use href="#s303" class="o2"/><use href="#s303" class="c2"/><use href="#s303" class="h2"/>
<use href="#s304" class="o4"/><use href="#s304" class="c4"/><use href="#s304" class="h4"/>
<use href="#s305" class="o3"/><use href="#s305" class="c3"/><use href="#s305" class="h3"/>
<use href="#s306" class="o5"/><use href="#s306" class="c5"/><use href="#s306" class="h5"/>
<use href="#s307" class="o3"/><use href="#s307" class="c3"/><use href="#s307" class="h3"/>
<use href="#s308" class="o5"/><use href="#s308" class="c5"/><use href="#s308" class="h5"/>
<use href="#s309" class="o2"/><use href="#s309" class="c2"/><use href="#s309" class="h2"/>
<use href="#s310" class="o3"/><use href="#s310" class="c3"/><use href="#s310" class="h3"/>
<use href="#s311" class="o4"/><use href="#s311" class="c4"/><use href="#s311" class="h4"/>
<use href="#s312" class="o5"/><use href="#s312" class="c5"/><use href="#s312" class="h5"/>
<use href="#s313" class="o2"/><use href="#s313" class="c2"/><use href="#s313" class="h2"/>
<use href="#s314" class="o5"/><use href="#s314" class="c5"/><use href="#s314" class="h5"/>
<use href="#s315" class="o3"/><use href="#s315" class="c3"/><use href="#s315" class="h3"/>
<use href="#s316" class="o3"/><use href="#s316" class="c3"/><use href="#s316" class="h3"/>
<use href="#s317" class="o3"/><use href="#s317" class="c3"/><use href="#s317" class="h3"/>
<use href="#s318" class="o5"/><use href="#s318" class="c5"/><use href="#s318" class="h5"/>
<use href="#s319" class="o5"/><use href="#s319" class="c5"/><use href="#s319" class="h5"/>
<use href="#s320" class="o3"/><use href="#s320" class="c3"/><use href="#s320" class="h3"/>
<use href="#s321" class="o3"/><use href="#s321" class="c3"/><use href="#s321" class="h3"/>
<use href="#s322" class="o2"/><use href="#s322" class="c2"/><use href="#s322" class="h2"/>
<use href="#s323" class="o5"/><use href="#s323" class="c5"/><use href="#s323" class="h5"/>
<use href="#s324" class="o3"/><use href="#s324" class="c3"/><use href="#s324" class="h3"/>
<use href="#s325" class="o3"/><use href="#s325" class="c3"/><use href="#s325" class="h3"/>
<use href="#s326" class="o2"/><use href="#s326" class="c2"/><use href="#s326" class="h2"/>
<use href="#s327" class="o4"/><use href="#s327" class="c4"/><use href="#s327" class="h4"/>
<use href="#s328" class="o4"/><use href="#s328" class="c4"/><use href="#s328" class="h4"/>
<use href="#s329" class="o3"/><use href="#s329" class="c3"/><use href="#s329" class="h3"/>
<use href="#s330" class="o4"/><use href="#s330" class="c4"/><use href="#s330" class="h4"/>
<use href="#s331" class="o3"/><use href="#s331" class="c3"/><use href="#s331" class="h3"/>
<use href="#s332" class="o2"/><use href="#s332" class="c2"/><use href="#s332" class="h2"/>
<use href="#s333" class="o4"/><use href="#s333" class="c4"/><use href="#s333" class="h4"/>
<use href="#s334" class="o3"/><use href="#s334" class="c3"/><use href="#s334" class="h3"/>
<use href="#s335" class="o5"/><use href="#s335" class="c5"/><use href="#s335" class="h5"/>
<use href="#s336" class="o4"/><use href="#s336" class="c4"/><use href="#s336" class="h4"/>
<use href="#s337" class="o4"/><use href="#s337" class="c4"/><use href="#s337" class="h4"/>
<use href="#s338" class="o3"/><use href="#s338" class="c3"/><use href="#s338" class="h3"/>
<use href="#s339" class="o5"/><use href="#s339" class="c5"/><use href="#s339" class="h5"/>
<use href="#s340" class="o3"/><use href="#s340" class="c3"/><use href="#s340" class="h3"/>
<use href="#s341" class="o4"/><use href="#s341" class="c4"/><use href="#s341" class="h4"/>
<use href="#s342" class="o3"/><use href="#s342" class="c3"/><use href="#s342" class="h3"/>
<use href="#s343" class="o3"/><use href="#s343" class="c3"/><use href="#s343" class="h3"/>
<use href="#s344" class="o2"/><use href="#s344" class="c2"/><use href="#s344" class="h2"/>
<use href="#s345" class="o5"/><use href="#s345" class="c5"/><use href="#s345" class="h5"/>
<use href="#s346" class="o3"/><use href="#s346" class="c3"/><use href="#s346" class="h3"/>
<use href="#s347" class="o5"/><use href="#s347" class="c5"/><use href="#s347" class="h5"/>
<use href="#s348" class="o3"/><use href="#s348" class="c3"/><use href="#s348" class="h3"/>
<use href="#s349" class="o4"/><use href="#s349" class="c4"/><use href="#s349" class="h4"/>
<use href="#s350" class="o5"/><use href="#s350" class="c5"/><use href="#s350" class="h5"/>
<use href="#s351" class="o2"/><use href="#s351" class="c2"/><use href="#s351" class="h2"/>
<use href="#s352" class="o5"/><use href="#s352" class="c5"/><use href="#s352" class="h5"/>
<use href="#s353" class="o2"/><use href="#s353" class="c2"/><use href="#s353" class="h2"/>
<use href="#s354" class="o2"/><use href="#s354" class="c2"/><use href="#s354" class="h2"/>
<use href="#s355" class="o3"/><use href="#s355" class="c3"/><use href="#s355" class="h3"/>
<use href="#s356" class="o1"/><use href="#s356" class="c1"/><use href="#s356" class="h1"/>
<use href="#s357" class="o5"/><use href="#s357" class="c5"/><use href="#s357" class="h5"/>
<use href="#s358" class="o4"/><use href="#s358" class="c4"/><use href="#s358" class="h4"/>
<use href="#s359" class="o3"/><use href="#s359" class="c3"/><use href="#s359" class="h3"/>
<use href="#s360" class="o3"/><use href="#s360" class="c3"/><use href="#s360" class="h3"/>
<use href="#s361" class="o3"/><use href="#s361" class="c3"/><use href="#s361" class="h3"/>
<use href="#s362" class="o2"/><use href="#s362" class="c2"/><use href="#s362" class="h2"/>
<use href="#s363" class="o4"/><use href="#s363" class="c4"/><use href="#s363" class="h4"/>
<use href="#s364" class="o3"/><use href="#s364" class="c3"/><use href="#s364" class="h3"/>
<use href="#s365" class="o5"/><use href="#s365" class="c5"/><use href="#s365" class="h5"/>
<use href="#s366" class="o3"/><use href="#s366" class="c3"/><use href="#s366" class="h3"/>
<use href="#s367" class="o4"/><use href="#s367" class="c4"/><use href="#s367" class="h4"/>
<use href="#s368" class="o4"/><use href="#s368" class="c4"/><use href="#s368" class="h4"/>
<use href="#s369" class="o5"/><use href="#s369" class="c5"/><use href="#s369" class="h5"/>
<use href="#s370" class="o4"/><use href="#s370" class="c4"/><use href="#s370" class="h4"/>
<use href="#s371" class="o2"/><use href="#s371" class="c2"/><use href="#s371" class="h2"/>
<use href="#s372" class="o3"/><use href="#s372" class="c3"/><use href="#s372" class="h3"/>
<use href="#s373" class="o4"/><use href="#s373" class="c4"/><use href="#s373" class="h4"/>
<use href="#s374" class="o4"/><use href="#s374" class="c4"/><use href="#s374" class="h4"/>
<use href="#s375" class="o4"/><use href="#s375" class="c4"/><use href="#s375" class="h4"/>
<use href="#s376" class="o5"/><use href="#s376" class="c5"/><use href="#s376" class="h5"/>
<use href="#s377" class="o5"/><use href="#s377" class="c5"/><use href="#s377" class="h5"/>
<use href="#s378" class="o5"/><use href="#s378" class="c5"/><use href="#s378" class="h5"/>
<use href="#s379" class="o4"/><use href="#s379" class="c4"/><use href="#s379" class="h4"/>
<use href="#s380" class="o2"/><use href="#s380" class="c2"/><use href="#s380" class="h2"/>
<use href="#s381" class="o4"/><use href="#s381" class="c4"/><use href="#s381" class="h4"/>
<use href="#s382" class="o2"/><use href="#s382" class="c2"/><use href="#s382" class="h2"/>
<use href="#s383" class="o2"/><use href="#s383" class="c2"/><use href="#s383" class="h2"/>
<use href="#s384" class="o3"/><use href="#s384" class="c3"/><use href="#s384" class="h3"/>
<use href="#s385" class="o3"/><use href="#s385" class="c3"/><use href="#s385" class="h3"/>
<use href="#s386" class="o4"/><use href="#s386" class="c4"/><use href="#s386" class="h4"/>
<use href="#s387" class="o3"/><use href="#s387" class="c3"/><use href="#s387" class="h3"/>
<use href="#s388" class="o5"/><use href="#s388" class="c5"/><use href="#s388" class="h5"/>
<use href="#s389" class="o5"/><use href="#s389" class="c5"/><use href="#s389" class="h5"/>
<use href="#s390" class="o2"/><use href="#s390" class="c2"/><use href="#s390" class="h2"/>
<use href="#s391" class="o4"/><use href="#s391" class="c4"/><use href="#s391" class="h4"/>
<use href="#s392" class="o3"/><use href="#s392" class="c3"/><use href="#s392" class="h3"/>
<use href="#s393" class="o3"/><use href="#s393" class="c3"/><use href="#s393" class="h3"/>
<use href="#s394" class="o4"/><use href="#s394" class="c4"/><use href="#s394" class="h4"/>
<use href="#s395" class="o3"/><use href="#s395" class="c3"/><use href="#s395" class="h3"/>
<use href="#s396" class="o4"/><use href="#s396" class="c4"/><use href="#s396" class="h4"/>
<use href="#s397" class="o4"/><use href="#s397" class="c4"/><use href="#s397" class="h4"/>
<use href="#s398" class="o3"/><use href="#s398" class="c3"/><use href="#s398" class="h3"/>
<use href="#s399" class="o3"/><use href="#s399" class="c3"/><use href="#s399" class="h3"/>
<use href="#s400" class="o4"/><use href="#s400" class="c4"/><use href="#s400" class="h4"/>
<use href="#s401" class="o3"/><use href="#s401" class="c3"/><use href="#s401" class="h3"/>
<use href="#s402" class="o4"/><use href="#s402" class="c4"/><use href="#s402" class="h4"/>
<use href="#s403" class="o4"/><use href="#s403" class="c4"/><use href="#s403" class="h4"/>
<use href="#s404" class="o3"/><use href="#s404" class="c3"/><use href="#s404" class="h3"/>
<use href="#s405" class="o4"/><use href="#s405" class="c4"/><use href="#s405" class="h4"/>
<use href="#s406" class="o3"/><use href="#s406" class="c3"/><use href="#s406" class="h3"/>
<use href="#s407" class="o5"/><use href="#s407" class="c5"/><use href="#s407" class="h5"/>
<use href="#s408" class="o4"/><use href="#s408" class="c4"/><use href="#s408" class="h4"/>
<use href="#s409" class="o3"/><use href="#s409" class="c3"/><use href="#s409" class="h3"/>
<use href="#s410" class="o3"/><use href="#s410" class="c3"/><use href="#s410" class="h3"/>
<use href="#s411" class="o5"/><use href="#s411" class="c5"/><use href="#s411" class="h5"/>
<use href="#s412" class="o4"/><use href="#s412" class="c4"/><use href="#s412" class="h4"/>
<use href="#s413" class="o4"/><use href="#s413" class="c4"/><use href="#s413" class="h4"/>
<use href="#s414" class="o3"/><use href="#s414" class="c3"/><use href="#s414" class="h3"/>
<use href="#s415" class="o3"/><use href="#s415" class="c3"/><use href="#s415" class="h3"/>
<use href="#s416" class="o5"/><use href="#s416" class="c5"/><use href="#s416" class="h5"/>
<use href="#s417" class="o4"/><use href="#s417" class="c4"/><use href="#s417" class="h4"/>
<use href="#s418" class="o4"/><use href="#s418" class="c4"/><use href="#s418" class="h4"/>
<use href="#s419" class="o4"/><use href="#s419" class="c4"/><use href="#s419" class="h4"/>
<use href="#s420" class="o5"/><use href="#s420" class="c5"/><use href="#s420" class="h5"/>
<use href="#s421" class="o3"/><use href="#s421" class="c3"/><use href="#s421" class="h3"/>
<use href="#s422" class="o5"/><use href="#s422" class="c5"/><use href="#s422" class="h5"/>
<use href="#s423" class="o4"/><use href="#s423" class="c4"/><use href="#s423" class="h4"/>
<use href="#s424" class="o6"/><use href="#s424" class="c6"/><use href="#s424" class="h6"/>
<use href="#s425" class="o5"/><use href="#s425" class="c5"/><use href="#s425" class="h5"/>
<use href="#s426" class="o3"/><use href="#s426" class="c3"/><use href="#s426" class="h3"/>
<use href="#s427" class="o4"/><use href="#s427" class="c4"/><use href="#s427" class="h4"/>
<use href="#s428" class="o5"/><use href="#s428" class="c5"/><use href="#s428" class="h5"/>
<use href="#s429" class="o3"/><use href="#s429" class="c3"/><use href="#s429" class="h3"/>
<use href="#s430" class="o4"/><use href="#s430" class="c4"/><use href="#s430" class="h4"/>
<use href="#s431" class="o5"/><use href="#s431" class="c5"/><use href="#s431" class="h5"/>
<use href="#s432" class="o4"/><use href="#s432" class="c4"/><use href="#s432" class="h4"/>
<use href="#s433" class="o3"/><use href="#s433" class="c3"/><use href="#s433" class="h3"/>
<use href="#s434" class="o5"/><use href="#s434" class="c5"/><use href="#s434" class="h5"/>
<use href="#s435" class="o3"/><use href="#s435" class="c3"/><use href="#s435" class="h3"/>
<use href="#s436" class="o3"/><use href="#s436" class="c3"/><use href="#s436" class="h3"/>
<use href="#s437" class="o3"/><use href="#s437" class="c3"/><use href="#s437" class="h3"/>
<use href="#s438" class="o5"/><use href="#s438" class="c5"/><use href="#s438" class="h5"/>
<use href="#s439" class="o4"/><use href="#s439" class="c4"/><use href="#s439" class="h4"/>
<use href="#s440" class="o3"/><use href="#s440" class="c3"/><use href="#s440" class="h3"/>
<use href="#s441" class="o5"/><use href="#s441" class="c5"/><use href="#s441" class="h5"/>
<use href="#s442" class="o4"/><use href="#s442" class="c4"/><use href="#s442" class="h4"/>
<use href="#s443" class="o4"/><use href="#s443" class="c4"/><use href="#s443" class="h4"/>
<use href="#s444" class="o4"/><use href="#s444" class="c4"/><use href="#s444" class="h4"/>
<use href="#s445" class="o4"/><use href="#s445" class="c4"/><use href="#s445" class="h4"/>
<use href="#s446" class="o3"/><use href="#s446" class="c3"/><use href="#s446" class="h3"/>
<use href="#s447" class="o4"/><use href="#s447" class="c4"/><use href="#s447" class="h4"/>
<use href="#s448" class="o5"/><use href="#s448" class="c5"/><use href="#s448" class="h5"/>
<use href="#s449" class="o3"/><use href="#s449" class="c3"/><use href="#s449" class="h3"/>
<use href="#s450" class="o4"/><use href="#s450" class="c4"/><use href="#s450" class="h4"/>
<use href="#s451" class="o4"/><use href="#s451" class="c4"/><use href="#s451" class="h4"/>
<use href="#s452" class="o4"/><use href="#s452" class="c4"/><use href="#s452" class="h4"/>
<use href="#s453" class="o4"/><use href="#s453" class="c4"/><use href="#s453" class="h4"/>
<use href="#s454" class="o3"/><use href="#s454" class="c3"/><use href="#s454" class="h3"/>
<use href="#s455" class="o4"/><use href="#s455" class="c4"/><use href="#s455" class="h4"/>
<use href="#s456" class="o4"/><use href="#s456" class="c4"/><use href="#s456" class="h4"/>
<use href="#s457" class="o3"/><use href="#s457" class="c3"/><use href="#s457" class="h3"/>
<use href="#s458" class="o4"/><use href="#s458" class="c4"/><use href="#s458" class="h4"/>
<use href="#s459" class="o3"/><use href="#s459" class="c3"/><use href="#s459" class="h3"/>
<use href="#s460" class="o5"/><use href="#s460" class="c5"/><use href="#s460" class="h5"/>
<use href="#s461" class="o4"/><use href="#s461" class="c4"/><use href="#s461" class="h4"/>
<use href="#s462" class="o4"/><use href="#s462" class="c4"/><use href="#s462" class="h4"/>
<use href="#s463" class="o4"/><use href="#s463" class="c4"/><use href="#s463" class="h4"/>
<use href="#s464" class="o3"/><use href="#s464" class="c3"/><use href="#s464" class="h3"/>
<use href="#s465" class="o5"/><use href="#s465" class="c5"/><use href="#s465" class="h5"/>
<use href="#s466" class="o4"/><use href="#s466" class="c4"/><use href="#s466" class="h4"/>
<use href="#s467" class="o3"/><use href="#s467" class="c3"/><use href="#s467" class="h3"/>
<use href="#s468" class="o4"/><use href="#s468" class="c4"/><use href="#s468" class="h4"/>
<use href="#s469" class="o4"/><use href="#s469" class="c4"/><use href="#s469" class="h4"/>
<use href="#s470" class="o6"/><use href="#s470" class="c6"/><use href="#s470" class="h6"/>
<use href="#s471" class="o5"/><use href="#s471" class="c5"/><use href="#s471" class="h5"/>
<use href="#s472" class="o5"/><use href="#s472" class="c5"/><use href="#s472" class="h5"/>
<use href="#s473" class="o4"/><use href="#s473" class="c4"/><use href="#s473" class="h4"/>
<use href="#s474" class="o4"/><use href="#s474" class="c4"/><use href="#s474" class="h4"/>
<use href="#s475" class="o4"/><use href="#s475" class="c4"/><use href="#s475" class="h4"/>
<use href="#s476" class="o4"/><use href="#s476" class="c4"/><use href="#s476" class="h4"/>
<use href="#s477" class="o5"/><use href="#s477" class="c5"/><use href="#s477" class="h5"/>
<use href="#s478" class="o4"/><use href="#s478" class="c4"/><use href="#s478" class="h4"/>
<use href="#s479" class="o3"/><use href="#s479" class="c3"/><use href="#s479" class="h3"/>
<use href="#s480" class="o4"/><use href="#s480" class="c4"/><use href="#s480" class="h4"/>
<use href="#s481" class="o5"/><use href="#s481" class="c5"/><use href="#s481" class="h5"/>
<use href="#s482" class="o5"/><use href="#s482" class="c5"/><use href="#s482" class="h5"/>
<use href="#s483" class="o4"/><use href="#s483" class="c4"/><use href="#s483" class="h4"/>
<use href="#s484" class="o4"/><use href="#s484" class="c4"/><use href="#s484" class="h4"/>
<use href="#s485" class="o5"/><use href="#s485" class="c5"/><use href="#s485" class="h5"/>
<use href="#s486" class="o5"/><use href="#s486" class="c5"/><use href="#s486" class="h5"/>
<use href="#s487" class="o4"/><use href="#s487" class="c4"/><use href="#s487" class="h4"/>
<use href="#s488" class="o5"/><use href="#s488" class="c5"/><use href="#s488" class="h5"/>
<use href="#s489" class="o5"/><use href="#s489" class="c5"/><use href="#s489" class="h5"/>
<use href="#s490" class="o4"/><use href="#s490" class="c4"/><use href="#s490" class="h4"/>
<use href="#s491" class="o5"/><use href="#s491" class="c5"/><use href="#s491" class="h5"/>
<use href="#s492" class="o4"/><use href="#s492" class="c4"/><use href="#s492" class="h4"/>
<use href="#s493" class="o3"/><use href="#s493" class="c3"/><use href="#s493" class="h3"/>
<use href="#s494" class="o2"/><use href="#s494" class="c2"/><use href="#s494" class="h2"/>
<use href="#s495" class="o5"/><use href="#s495" class="c5"/><use href="#s495" class="h5"/>
<use href="#s496" class="o4"/><use href="#s496" class="c4"/><use href="#s496" class="h4"/>
<use href="#s497" class="o4"/><use href="#s497" class="c4"/><use href="#s497" class="h4"/>
<use href="#s498" class="o4"/><use href="#s498" class="c4"/><use href="#s498" class="h4"/>
<use href="#s499" class="o5"/><use href="#s499" class="c5"/><use href="#s499" class="h5"/>
<use href="#s500" class="o5"/><use href="#s500" class="c5"/><use href="#s500" class="h5"/>
<use href="#s501" class="o5"/><use href="#s501" class="c5"/><use href="#s501" class="h5"/>
<use href="#s502" class="o4"/><use href="#s502" class="c4"/><use href="#s502" class="h4"/>
<use href="#s503" class="o5"/><use href="#s503" class="c5"/><use href="#s503" class="h5"/>
<use href="#s504" class="o4"/><use href="#s504" class="c4"/><use href="#s504" class="h4"/>
<use href="#s505" class="o3"/><use href="#s505" class="c3"/><use href="#s505" class="h3"/>
<use href="#s506" class="o4"/><use href="#s506" class="c4"/><use href="#s506" class="h4"/>
<use href="#s507" class="o5"/><use href="#s507" class="c5"/><use href="#s507" class="h5"/>
<use href="#s508" class="o3"/><use href="#s508" class="c3"/><use href="#s508" class="h3"/>
<use href="#s509" class="o5"/><use href="#s509" class="c5"/><use href="#s509" class="h5"/>
<use href="#s510" class="o5"/><use href="#s510" class="c5"/><use href="#s510" class="h5"/>
<use href="#s511" class="o4"/><use href="#s511" class="c4"/><use href="#s511" class="h4"/>
<use href="#s512" class="o4"/><use href="#s512" class="c4"/><use href="#s512" class="h4"/>
<use href="#s513" class="o5"/><use href="#s513" class="c5"/><use href="#s513" class="h5"/>
<use href="#s514" class="o3"/><use href="#s514" class="c3"/><use href="#s514" class="h3"/>
<use href="#s515" class="o5"/><use href="#s515" class="c5"/><use href="#s515" class="h5"/>
<use href="#s516" class="o5"/><use href="#s516" class="c5"/><use href="#s516" class="h5"/>
<use href="#s517" class="o4"/><use href="#s517" class="c4"/><use href="#s517" class="h4"/>
<use href="#s518" class="o5"/><use href="#s518" class="c5"/><use href="#s518" class="h5"/>
<use href="#s519" class="o6"/><use href="#s519" class="c6"/><use href="#s519" class="h6"/>
<use href="#s520" class="o4"/><use href="#s520" class="c4"/><use href="#s520" class="h4"/>
<use href="#s521" class="o4"/><use href="#s521" class="c4"/><use href="#s521" class="h4"/>
<use href="#s522" class="o5"/><use href="#s522" class="c5"/><use href="#s522" class="h5"/>
<use href="#s523" class="o6"/><use href="#s523" class="c6"/><use href="#s523" class="h6"/>
<use href="#s524" class="o6"/><use href="#s524" class="c6"/><use href="#s524" class="h6"/>
<use href="#s525" class="o5"/><use href="#s525" class="c5"/><use href="#s525" class="h5"/>
<use href="#s526" class="o4"/><use href="#s526" class="c4"/><use href="#s526" class="h4"/>
<use href="#s527" class="o4"/><use href="#s527" class="c4"/><use href="#s527" class="h4"/>
<use href="#s528" class="o4"/><use href="#s528" class="c4"/><use href="#s528" class="h4"/>
<use href="#s529" class="o4"/><use href="#s529" class="c4"/><use href="#s529" class="h4"/>
<use href="#s530" class="o6"/><use href="#s530" class="c6"/><use href="#s530" class="h6"/>
<use href="#s531" class="o5"/><use href="#s531" class="c5"/><use href="#s531" class="h5"/>
<use href="#s532" class="o4"/><use href="#s532" class="c4"/><use href="#s532" class="h4"/>
<use href="#s533" class="o4"/><use href="#s533" class="c4"/><use href="#s533" class="h4"/>
<use href="#s534" class="o4"/><use href="#s534" class="c4"/><use href="#s534" class="h4"/>
<use href="#s535" class="o4"/><use href="#s535" class="c4"/><use href="#s535" class="h4"/>
<use href="#s536" class="o3"/><use href="#s536" class="c3"/><use href="#s536" class="h3"/>
<use href="#s537" class="o6"/><use href="#s537" class="c6"/><use href="#s537" class="h6"/>
<use href="#s538" class="o3"/><use href="#s538" class="c3"/><use href="#s538" class="h3"/>
<use href="#s539" class="o5"/><use href="#s539" class="c5"/><use href="#s539" class="h5"/>
<use href="#s540" class="o5"/><use href="#s540" class="c5"/><use href="#s540" class="h5"/>
<use href="#s541" class="o4"/><use href="#s541" class="c4"/><use href="#s541" class="h4"/>
<use href="#s542" class="o3"/><use href="#s542" class="c3"/><use href="#s542" class="h3"/>
<use href="#s543" class="o5"/><use href="#s543" class="c5"/><use href="#s543" class="h5"/>
<use href="#s544" class="o3"/><use href="#s544" class="c3"/><use href="#s544" class="h3"/>
<use href="#s545" class="o5"/><use href="#s545" class="c5"/><use href="#s545" class="h5"/>
<use href="#s546" class="o6"/><use href="#s546" class="c6"/><use href="#s546" class="h6"/>
<use href="#s547" class="o5"/><use href="#s547" class="c5"/><use href="#s547" class="h5"/>
<use href="#s548" class="o4"/><use href="#s548" class="c4"/><use href="#s548" class="h4"/>
<use href="#s549" class="o5"/><use href="#s549" class="c5"/><use href="#s549" class="h5"/>
<use href="#s550" class="o4"/><use href="#s550" class="c4"/><use href="#s550" class="h4"/>
<use href="#s551" class="o5"/><use href="#s551" class="c5"/><use href="#s551" class="h5"/>
<use href="#s552" class="o4"/><use href="#s552" class="c4"/><use href="#s552" class="h4"/>
<use href="#s553" class="o4"/><use href="#s553" class="c4"/><use href="#s553" class="h4"/>
<use href="#s554" class="o5"/><use href="#s554" class="c5"/><use href="#s554" class="h5"/>
<use href="#s555" class="o3"/><use href="#s555" class="c3"/><use href="#s555" class="h3"/>
<use href="#s556" class="o6"/><use href="#s556" class="c6"/><use href="#s556" class="h6"/>
<use href="#s557" class="o4"/><use href="#s557" class="c4"/><use href="#s557" class="h4"/>
<use href="#s558" class="o4"/><use href="#s558" class="c4"/><use href="#s558" class="h4"/>
<use href="#s559" class="o3"/><use href="#s559" class="c3"/><use href="#s559" class="h3"/>
<use href="#s560" class="o6"/><use href="#s560" class="c6"/><use href="#s560" class="h6"/>
<use href="#s561" class="o5"/><use href="#s561" class="c5"/><use href="#s561" class="h5"/>
<use href="#s562" class="o4"/><use href="#s562" class="c4"/><use href="#s562" class="h4"/>
<use href="#s563" class="o5"/><use href="#s563" class="c5"/><use href="#s563" class="h5"/>
<use href="#s564" class="o4"/><use href="#s564" class="c4"/><use href="#s564" class="h4"/>
<use href="#s565" class="o4"/><use href="#s565" class="c4"/><use href="#s565" class="h4"/>
<use href="#s566" class="o4"/><use href="#s566" class="c4"/><use href="#s566" class="h4"/>
<use href="#s567" class="o5"/><use href="#s567" class="c5"/><use href="#s567" class="h5"/>
<use href="#s568" class="o4"/><use href="#s568" class="c4"/><use href="#s568" class="h4"/>
<use href="#s569" class="o5"/><use href="#s569" class="c5"/><use href="#s569" class="h5"/>
<use href="#s570" class="o6"/><use href="#s570" class="c6"/><use href="#s570" class="h6"/>
<use href="#s571" class="o5"/><use href="#s571" class="c5"/><use href="#s571" class="h5"/>
<use href="#s572" class="o4"/><use href="#s572" class="c4"/><use href="#s572" class="h4"/>
<use href="#s573" class="o4"/><use href="#s573" class="c4"/><use href="#s573" class="h4"/>
<use href="#s574" class="o4"/><use href="#s574" class="c4"/><use href="#s574" class="h4"/>
<use href="#s575" class="o4"/><use href="#s575" class="c4"/><use href="#s575" class="h4"/>
<use href="#s576" class="o3"/><use href="#s576" class="c3"/><use href="#s576" class="h3"/>
<use href="#s577" class="o5"/><use href="#s577" class="c5"/><use href="#s577" class="h5"/>
<use href="#s578" class="o5"/><use href="#s578" class="c5"/><use href="#s578" class="h5"/>
<use href="#s579" class="o5"/><use href="#s579" class="c5"/><use href="#s579" class="h5"/>
<use href="#s580" class="o4"/><use href="#s580" class="c4"/><use href="#s580" class="h4"/>
<use href="#s581" class="o6"/><use href="#s581" class="c6"/><use href="#s581" class="h6"/>
<use href="#s582" class="o5"/><use href="#s582" class="c5"/><use href="#s582" class="h5"/>
<use href="#s583" class="o5"/><use href="#s583" class="c5"/><use href="#s583" class="h5"/>
<use href="#s584" class="o4"/><use href="#s584" class="c4"/><use href="#s584" class="h4"/>
<use href="#s585" class="o5"/><use href="#s585" class="c5"/><use href="#s585" class="h5"/>
<use href="#s586" class="o6"/><use href="#s586" class="c6"/><use href="#s586" class="h6"/>
<use href="#s587" class="o5"/><use href="#s587" class="c5"/><use href="#s587" class="h5"/>
<use href="#s588" class="o5"/><use href="#s588" class="c5"/><use href="#s588" class="h5"/>
<use href="#s589" class="o4"/><use href="#s589" class="c4"/><use href="#s589" class="h4"/>
<use href="#s590" class="o6"/><use href="#s590" class="c6"/><use href="#s590" class="h6"/>
<use href="#s591" class="o5"/><use href="#s591" class="c5"/><use href="#s591" class="h5"/>
<use href="#s592" class="o4"/><use href="#s592" class="c4"/><use href="#s592" class="h4"/>
<use href="#s593" class="o5"/><use href="#s593" class="c5"/><use href="#s593" class="h5"/>
<use href="#s594" class="o6"/><use href="#s594" class="c6"/><use href="#s594" class="h6"/>
<use href="#s595" class="o6"/><use href="#s595" class="c6"/><use href="#s595" class="h6"/>
<use href="#s596" class="o5"/><use href="#s596" class="c5"/><use href="#s596" class="h5"/>
<use href="#s597" class="o5"/><use href="#s597" class="c5"/><use href="#s597" class="h5"/>
<use href="#s598" class="o5"/><use href="#s598" class="c5"/><use href="#s598" class="h5"/>
<use href="#s599" class="o5"/><use href="#s599" class="c5"/><use href="#s599" class="h5"/>
<use href="#s600" class="o5"/><use href="#s600" class="c5"/><use href="#s600" class="h5"/>
<use href="#s601" class="o5"/><use href="#s601" class="c5"/><use href="#s601" class="h5"/>
<use href="#s602" class="o6"/><use href="#s602" class="c6"/><use href="#s602" class="h6"/>
<use href="#s603" class="o4"/><use href="#s603" class="c4"/><use href="#s603" class="h4"/>
<use href="#s604" class="o5"/><use href="#s604" class="c5"/><use href="#s604" class="h5"/>
<use href="#s605" class="o5"/><use href="#s605" class="c5"/><use href="#s605" class="h5"/>
</g></svg>
</div>
<div id="ne" class="a"><svg class="a" style="left:0;top:0" width="553" height="583"><defs><pattern id="dg" x="5.7" y="14.8" width="14.83" height="14.83" patternUnits="userSpaceOnUse"><circle cx="0" cy="0" r="1.9" fill="#1a1a1a"/><circle cx="0" cy="0" r="1.05" fill="#2b2b2b"/><circle cx="14.83" cy="0" r="1.9" fill="#1a1a1a"/><circle cx="14.83" cy="0" r="1.05" fill="#2b2b2b"/><circle cx="0" cy="14.83" r="1.9" fill="#1a1a1a"/><circle cx="0" cy="14.83" r="1.05" fill="#2b2b2b"/><circle cx="14.83" cy="14.83" r="1.9" fill="#1a1a1a"/><circle cx="14.83" cy="14.83" r="1.05" fill="#2b2b2b"/></pattern></defs><rect width="553" height="583" fill="url(#dg)"/></svg></div>
<!-- viewport header -->
<div class="a hb" style="left:5px;top:1.5px;width:14px;height:8px"></div>
<svg class="a" style="left:5px;top:1.5px" width="14" height="8"><path d="M2.3 3.2L5 2V6.5L2.3 7.4Z" fill="#ccc"/><circle cx="6.4" cy="2.4" r="1.6" fill="#ddd"/><path d="M9.5 3.5L11 5L12.5 3.5" stroke="#bbb" stroke-width=".9" fill="none"/></svg>
<div class="a hb" style="left:23.5px;top:1.5px;width:50px;height:8px"></div>
<svg class="a" style="left:24px;top:1.5px" width="9" height="8"><rect x="2.6" y="2.3" width="3.4" height="3.4" fill="#eee"/><path d="M1 2V1H2M6.6 1H7.6V2M7.6 6V7H6.6M2 7H1V6" stroke="#aaa" stroke-width=".8" fill="none"/></svg>
<div class="a ht" style="left:34px;">Object Mode</div>
<svg class="a" style="left:68px;top:1.5px" width="6" height="8"><path d="M1 3.5L2.7 5L4.4 3.5" stroke="#bbb" stroke-width=".9" fill="none"/></svg>
<div class="a ht" style="left:80px;">View</div>
<div class="a ht" style="left:99.7px;">Select</div>
<div class="a ht" style="left:121.7px;">Add</div>
<div class="a ht" style="left:138.5px;">Object</div>

<div class="a hb" style="left:167px;top:1.5px;width:36.3px;height:8px"></div>
<svg class="a" style="left:167px;top:1.5px" width="37" height="8"><path d="M2 1V6.8H7.5M2 6.8L5.5 3.5" stroke="#ddd" stroke-width=".8" fill="none"/><circle cx="2" cy="1.3" r=".8" fill="#ddd"/><circle cx="7.3" cy="6.8" r=".8" fill="#ddd"/><path d="M32 3.5L33.8 5L35.6 3.5" stroke="#bbb" stroke-width=".9" fill="none"/></svg>
<div class="a ht" style="left:178.1px;color:#d0d0d0">Global</div>
<div class="a hb" style="left:207px;top:1.5px;width:14px;height:8px"></div>
<svg class="a" style="left:207px;top:1.5px" width="14" height="8"><circle cx="4" cy="5" r="2.2" stroke="#ddd" stroke-width=".8" fill="none"/><circle cx="6.5" cy="3" r="2.2" stroke="#ddd" stroke-width=".8" fill="none"/><path d="M10 3.5L11.6 5L13.2 3.5" stroke="#bbb" stroke-width=".9" fill="none"/></svg>
<div class="a" style="left:224.3px;top:1.5px;width:8.8px;height:8px;background:#4e4e4e;border-radius:2px 0 0 2px"></div>
<svg class="a" style="left:224.3px;top:1.5px" width="9" height="8"><path d="M2.2 5.5A2.6 2.6 0 0 1 6.8 2.8" stroke="#888" stroke-width="1.6" fill="none"/></svg>
<div class="a hb" style="left:233.1px;top:1.5px;width:15px;height:8px;border-radius:0 2px 2px 0"></div>
<svg class="a" style="left:233px;top:1.5px" width="15" height="8"><path d="M1.5 5H6.5M1.5 4V6M4 4V6M6.5 4V6" stroke="#ddd" stroke-width=".7" fill="none"/><circle cx="5.5" cy="2.2" r="1.2" fill="#fff"/><path d="M10 3.5L11.6 5L13.2 3.5" stroke="#bbb" stroke-width=".9" fill="none"/></svg>
<div class="a" style="left:251.2px;top:1.5px;width:8.8px;height:8px;background:#4e4e4e;border-radius:2px 0 0 2px"></div>
<svg class="a" style="left:251.2px;top:1.5px" width="9" height="8"><circle cx="4.4" cy="4" r="2.6" fill="#666"/><circle cx="4.4" cy="4" r="1" fill="#ccc"/></svg>
<div class="a hb" style="left:260px;top:1.5px;width:14.5px;height:8px;border-radius:0 2px 2px 0;background:#2c2c2c"></div>
<svg class="a" style="left:260px;top:1.5px" width="15" height="8"><path d="M1.3 7C2.8 7 3 1 4.5 1S6.2 7 7.7 7" stroke="#888" stroke-width=".8" fill="none"/><path d="M10 3.5L11.6 5L13.2 3.5" stroke="#666" stroke-width=".9" fill="none"/></svg>

<div class="a hb" style="left:329.6px;top:1.2px;width:13.7px;height:8px"></div>
<svg class="a" style="left:329.6px;top:1.2px" width="14" height="8"><path d="M1.5 5.5L4 4.3L3.6 7.3Z" fill="#ddd"/><ellipse cx="4.5" cy="3" rx="2.6" ry="1.7" fill="#e8e8e8"/><circle cx="4.7" cy="2.8" r=".7" fill="#444"/><path d="M9.5 3.5L11.1 5L12.7 3.5" stroke="#bbb" stroke-width=".9" fill="none"/></svg>
<div class="a" style="left:346.7px;top:1.2px;width:8.7px;height:8px;background:#4772b3;border-radius:2px 0 0 2px"></div>
<svg class="a" style="left:346.7px;top:1.2px" width="9" height="8"><path d="M1.5 6.7L7 1.5M1.5 1.5L4 3.5M7 6.5L5 4.8" stroke="#fff" stroke-width=".8" fill="none"/><circle cx="7" cy="1.5" r=".9" fill="#fff"/></svg>
<div class="a hb" style="left:355.4px;top:1.2px;width:8.8px;height:8px;border-radius:0 2px 2px 0"></div>
<svg class="a" style="left:355.4px;top:1.2px" width="9" height="8"><path d="M2.5 3.5L4.2 5L5.9 3.5" stroke="#bbb" stroke-width=".9" fill="none"/></svg>
<div class="a" style="left:367.8px;top:1.2px;width:9.1px;height:8px;background:#4a4a4a;border-radius:2px 0 0 2px"></div>
<svg class="a" style="left:367.8px;top:1.2px" width="9" height="8"><circle cx="3.6" cy="4.8" r="2.2" stroke="#aaa" stroke-width=".8" fill="none"/><circle cx="5.3" cy="3.3" r="2.3" fill="#e6e6e6"/></svg>
<div class="a hb" style="left:376.9px;top:1.2px;width:8.8px;height:8px;border-radius:0 2px 2px 0;background:#2c2c2c"></div>
<svg class="a" style="left:376.9px;top:1.2px" width="9" height="8"><path d="M2.5 3.5L4.2 5L5.9 3.5" stroke="#777" stroke-width=".9" fill="none"/></svg>
<div class="a" style="left:389.3px;top:1.2px;width:8.3px;height:8px;background:#4a4a4a;border-radius:2px"></div>
<svg class="a" style="left:389.3px;top:1.2px" width="9" height="8"><rect x="1.6" y="2.2" width="4.4" height="4.4" stroke="#aaa" stroke-width=".8" fill="none"/><rect x="3" y="1.2" width="4" height="4" stroke="#999" stroke-width=".7" fill="none"/></svg>
<div class="a" style="left:401.8px;top:1.2px;width:35.2px;height:8px;background:#545454;border-radius:2px"></div>
<div class="a" style="left:410.5px;top:1.2px;width:8.7px;height:8px;background:#4772b3"></div>
<svg class="a" style="left:401.8px;top:1.2px" width="36" height="8"><circle cx="4.3" cy="4" r="2.6" stroke="#ccc" stroke-width=".6" fill="none"/><path d="M1.7 4H6.9M4.3 1.4V6.6" stroke="#ccc" stroke-width=".5"/><circle cx="13" cy="4" r="2.8" fill="#fff"/><circle cx="21.7" cy="4" r="2.7" fill="#ccc"/><path d="M21.7 1.3V4H24.4A2.7 2.7 0 0 0 21.7 1.3Z" fill="#555"/><circle cx="30.4" cy="4" r="2.7" fill="#aaa"/><path d="M28.5 5.9L32.3 2.1" stroke="#666" stroke-width=".8"/></svg>
<div class="a hb" style="left:438.4px;top:1.2px;width:7.6px;height:8px"></div>
<svg class="a" style="left:438.4px;top:1.2px" width="8" height="8"><path d="M2.2 3.5L3.9 5L5.6 3.5" stroke="#bbb" stroke-width=".9" fill="none"/></svg>

<!-- select mode buttons -->
<div class="a" style="left:21.5px;top:14px;width:44.5px;height:8.3px;background:#545454;border-radius:2px"></div>
<div class="a" style="left:21.5px;top:14px;width:8.5px;height:8.3px;background:#4772b3;border-radius:2px 0 0 2px"></div>
<svg class="a" style="left:21.5px;top:14px" width="45" height="9"><rect x="1.7" y="1.6" width="5" height="5" stroke="#cfdcef" stroke-width=".6" stroke-dasharray="1 .6" fill="none"/>
<rect x="10.3" y="3.4" width="4" height="3.2" fill="#ddd"/><rect x="12" y="1.8" width="4" height="3.2" fill="#eee"/>
<rect x="19.5" y="1.8" width="5.5" height="5" fill="#777"/><rect x="22" y="1.8" width="3" height="2.5" fill="#eee"/><rect x="19.5" y="4.3" width="2.5" height="2.5" fill="#eee"/>
<rect x="28.5" y="1.8" width="5" height="5" fill="#eee"/><rect x="30" y="3.3" width="2" height="2" fill="#555"/>
<rect x="37" y="1.8" width="5" height="5" stroke="#999" stroke-width=".6" stroke-dasharray="1 .6" fill="none"/><circle cx="39.5" cy="4.3" r="1.2" fill="#eee"/></svg>

<!-- options -->
<div class="a hb" style="left:418.2px;top:14.2px;width:28.5px;height:7.4px;background:#282828"></div>
<div class="a ht" style="left:421px;top:13.2px;color:#d8d8d8">Options</div>
<svg class="a" style="left:441px;top:14.5px" width="7" height="8"><path d="M1.5 3L3.1 4.5L4.7 3" stroke="#bbb" stroke-width=".9" fill="none"/></svg>
<svg class="a" style="left:446px;top:29.5px" width="4" height="8"><path d="M4 1.2A3 3 0 0 0 4 6.8" stroke="#aaa" stroke-width="1.1" fill="none"/></svg>

<!-- toolbar -->
<div class="a tb" style="top:28px;height:16px;background:#4772b3"></div>
<div class="a tb" style="top:44.5px;height:15.5px"></div>
<div class="a tb" style="top:63.6px;height:15.3px"></div>
<div class="a tb" style="top:79.6px;height:15.4px"></div>
<div class="a tb" style="top:96.6px;height:15.4px"></div>
<div class="a tb" style="top:113.6px;height:15.4px"></div>
<div class="a tb" style="top:133px;height:15.2px"></div>
<div class="a tb" style="top:149.2px;height:15.3px"></div>
<div class="a tb" style="top:168.8px;height:15px"></div>
<svg class="a" style="left:0;top:0" width="30" height="190">
<rect x="8.2" y="31.6" width="10.6" height="9.3" stroke="#e0a030" stroke-width=".9" stroke-dasharray="1.4 1" fill="none"/>
<path d="M12 33.5L16.2 37L14 37.3L13 39.3Z" fill="#fff"/>
<path d="M21.5 42.6L22.5 42.6L22.5 43.6Z" fill="#bcd"/>
<circle cx="13.4" cy="52.3" r="4.5" stroke="#fff" stroke-width=".9" stroke-dasharray="1.6 1.1" fill="none"/>
<circle cx="13.4" cy="52.3" r="4.5" stroke="#d03030" stroke-width=".9" stroke-dasharray="1.1 1.6" stroke-dashoffset="1.6" fill="none"/>
<path d="M13.4 49V50.8M13.4 53.8V55.6M10.1 52.3H11.9M14.9 52.3H16.7" stroke="#ccc" stroke-width=".6"/>
<path d="M13.4 66V76.6M8 71.3H18.8" stroke="#e6e6e6" stroke-width=".8"/>
<path d="M13.4 65.5L11.9 67.3H14.9ZM13.4 77.1L11.9 75.3H14.9ZM7.5 71.3L9.3 69.8V72.8ZM19.3 71.3L17.5 69.8V72.8Z" fill="#eee"/>
<path d="M9.3 86.5A4.3 4.3 0 0 1 17.5 85.3M17.6 88.5A4.3 4.3 0 0 1 9.3 89.8" stroke="#ddd" stroke-width=".8" fill="none"/>
<circle cx="13.4" cy="87.3" r="1.6" fill="#eee"/><path d="M8 86.3L9.4 88L10.8 86.3ZM16.2 88.5L17.6 86.8L19 88.5Z" fill="#ddd"/>
<rect x="9" y="103.6" width="5.3" height="5.3" fill="#e8e8e8"/><rect x="9" y="99.6" width="9.3" height="9.3" stroke="#999" stroke-width=".7" fill="none"/><path d="M14.8 103.3L17.8 100.3" stroke="#ddd" stroke-width=".8"/>
<path d="M21.7 110.3V111.3H20.7" stroke="#aaa" stroke-width=".6" fill="none"/>
<circle cx="13.4" cy="121.3" r="4.6" stroke="#ddd" stroke-width=".8" fill="none"/><rect x="11.2" y="119.1" width="4.4" height="4.4" fill="#eee"/>
<path d="M9 146.5L15.5 137L17 138.3L10.5 147.6Z" fill="#e6e6e6"/><path d="M9 145.5C11 145 13 143 15 144S17.5 146.5 19 145" stroke="#5cb88a" stroke-width=".9" fill="none"/>
<path d="M9 152V161.5H18.5" stroke="#eee" stroke-width="1.2" fill="none"/><path d="M10.3 155.3A6 6 0 0 1 15.6 160.4H10.3Z" fill="#59c38f"/>
<path d="M11 172.5L16.5 172.5L18 174.2V180.8H12.5L11 179.3Z" stroke="#8ad0a8" stroke-width=".8" fill="none"/><path d="M11 172.5L12.5 174.2H18M12.5 174.2V180.8" stroke="#8ad0a8" stroke-width=".8" fill="none"/><path d="M9.7 170.5H12.3M11 169.2V171.8" stroke="#8fc" stroke-width=".8"/>
<path d="M21.8 147.6V148.3H21.1M21.8 182.3V183H21.1" stroke="#aaa" stroke-width=".6" fill="none"/>
</svg>

<!-- last op panel -->
<div class="a" style="left:6px;top:190px;width:16.4px;height:184px;background:#323232;border-radius:2px"></div>
<svg class="a" style="left:0;top:190px" width="30" height="190"><path d="M7.6 4L9.1 5.5L10.6 4" stroke="#ccc" stroke-width=".8" fill="none"/></svg>
<div class="a ht" style="left:12.2px;top:190px;font-size:5.5px;">AE2</div>
<div class="a" style="left:8px;top:205.8px;width:11px;height:7.2px;background:#4a4a4a;border-radius:1px"></div>
<div class="a" style="left:8px;top:217.5px;width:11px;height:7.9px;background:#444;border-radius:1px"></div>
<div class="a ht" style="left:14px;top:216.6px;font-size:5.5px">M</div>
<div class="a" style="left:8px;top:227px;width:11px;height:7.4px;background:#444;border-radius:1px"></div>
<div class="a" style="left:8px;top:237px;width:11px;height:7.6px;background:#444;border-radius:1px"></div>
<div class="a ht" style="left:8.6px;top:236.2px;font-size:5.5px;">Ca..</div>
<div class="a ht" style="left:8px;top:248px;font-size:5.5px;color:#bbb">Del..</div>
<div class="a" style="left:8px;top:260px;width:11px;height:8px;background:#444;border-radius:1px"></div>
<div class="a" style="left:8px;top:260px;width:5px;height:8px;background:#4772b3;border-radius:1px 0 0 1px"></div>
<div class="a ht" style="left:8.5px;top:259px;font-size:5.5px">0</div>
<div class="a ht" style="left:14px;top:259px;font-size:5.5px">X</div>
<div class="a ht" style="left:8px;top:270px;font-size:5.5px;color:#bbb">Sta..</div>
<div class="a" style="left:8px;top:284.3px;width:11px;height:8px;background:#444;border-radius:1px"></div>
<div class="a" style="left:8px;top:284.3px;width:4.5px;height:8px;background:#4772b3;border-radius:1px 0 0 1px"></div>
<div class="a ht" style="left:14px;top:283.3px;font-size:5.5px">C</div>
<div class="a ht" style="left:8px;top:294.7px;font-size:5.5px;color:#bbb">Sta..</div>
<div class="a" style="left:8px;top:307.8px;width:11px;height:8.8px;background:#444;border-radius:1px"></div>
<div class="a" style="left:8px;top:307.8px;width:4.5px;height:8.8px;background:#4772b3;border-radius:1px 0 0 1px"></div>
<div class="a ht" style="left:13.8px;top:307.2px;font-size:5.5px">Pl</div>
<div class="a" style="left:8px;top:322px;width:11px;height:8.5px;background:#444;border-radius:1px"></div>
<svg class="a" style="left:0;top:320px" width="30" height="60"><path d="M11.5 4.5H16M11.5 6.5H16M11.5 8.5H16" stroke="#ddd" stroke-width="1"/><path d="M10 18V24H15M10 24L13.8 20.4" stroke="#ddd" stroke-width=".8" fill="none"/><rect x="9.6" y="26.3" width="6.2" height="6.2" stroke="#ddd" stroke-width=".8" fill="none"/><path d="M9.8 38A3 3 0 0 1 15.8 37M15.8 38.8L9.8 37.5M10.5 40H16" stroke="#ddd" stroke-width=".8" fill="none"/><rect x="9.8" y="46.8" width="5" height="5" fill="#ccc"/><path d="M13.5 51L16 53" stroke="#ccc" stroke-width=".8"/></svg>

<!-- navigation gizmo -->
<svg class="a" style="left:400px;top:20px" width="50" height="110">
<circle cx="11.5" cy="27.5" r="3.6" fill="#7a3540" stroke="#c23a50" stroke-width=".9"/>
<circle cx="26.5" cy="42.3" r="3.6" fill="#34506f" stroke="#3b78c8" stroke-width=".9"/>
<circle cx="26.5" cy="23.5" r="3.4" fill="#5b7f25"/>
<text x="26.5" y="25.5" font-size="5" text-anchor="middle" fill="#2a3a10" font-family="Liberation Sans" font-weight="bold">Y</text>
<circle cx="26.5" cy="31" r="3.9" fill="#5a6b3c" stroke="#86c51f" stroke-width="1"/>
<path d="M26.5 28V13.5" stroke="#3a8ee8" stroke-width="1"/>
<path d="M27 27.6H42" stroke="#e03a52" stroke-width="1"/>
<circle cx="26.5" cy="12.8" r="3.9" fill="#2f86e8"/>
<text x="26.5" y="14.8" font-size="5.6" text-anchor="middle" fill="#123058" font-family="Liberation Sans" font-weight="bold">Z</text>
<circle cx="42" cy="27.6" r="3.9" fill="#e23a52"/>
<text x="42" y="29.6" font-size="5.6" text-anchor="middle" fill="#4a1018" font-family="Liberation Sans" font-weight="bold">X</text>
<circle cx="39.6" cy="53.2" r="5.2" fill="#2b2b2b"/>
<circle cx="39.6" cy="68" r="5.2" fill="#2b2b2b"/>
<circle cx="39.6" cy="82.3" r="5.2" fill="#2b2b2b"/>
<circle cx="39.6" cy="96.3" r="5.2" fill="#2b2b2b"/>
<circle cx="40.6" cy="52.2" r="2.3" stroke="#eee" stroke-width="1" fill="none"/><path d="M38.9 53.9L36.6 56.2" stroke="#eee" stroke-width="1.2" stroke-linecap="round"/><path d="M40.6 51.2V53.2M39.6 52.2H41.6" stroke="#eee" stroke-width=".6"/>
<path d="M37.2 68.8V66.3M38.6 68V64.6M40 68V64.3M41.4 68.2V65" stroke="#eee" stroke-width="1.1" stroke-linecap="round" fill="none"/><path d="M36.7 68.2H42.2L43.6 66.8L44 67.4L42.6 70.6C42 71.8 41 72.2 39.8 72.2C38 72.2 36.7 71 36.7 69.2Z" fill="#eee"/>
<circle cx="38" cy="80.3" r="1.5" fill="#eee"/><circle cx="41" cy="80.3" r="1.5" fill="#eee"/><rect x="36.8" y="81.8" width="5.2" height="3" fill="#eee"/><path d="M42 82.3L43.5 81.5V85L42 84.3" fill="#eee"/>
<path d="M37 94.5H42.3L43 98.5H36.3Z" stroke="#eee" stroke-width=".8" fill="none"/><path d="M36.8 96.5H42.5" stroke="#eee" stroke-width=".6"/>
</svg>
<!-- node editor header -->
<div class="a" style="left:452px;top:0;width:553px;height:11.5px;background:#1e1e1e"></div>
<div class="a hb" style="left:456px;top:1.2px;width:14.2px;height:9.2px;background:#1a1a1a;box-shadow:inset 0 0 0 .6px #2a2a2a"></div>
<svg class="a" style="left:456px;top:1.2px" width="15" height="10"><rect x="2" y="1.6" width="5" height="3" rx="1" fill="#eee"/><rect x="2" y="5.3" width="5" height="3" rx="1" fill="#eee"/><path d="M7 3.1H8.5V6.8H7" stroke="#ccc" stroke-width=".8" fill="none"/><path d="M10 4.2L11.4 5.6L12.8 4.2" stroke="#bbb" stroke-width=".8" fill="none"/></svg>
<div class="a ht" style="left:476.3px;top:0.6px;">View</div>
<div class="a ht" style="left:494.9px;top:0.6px;">Select</div>
<div class="a ht" style="left:516.7px;top:0.6px;">Add</div>
<div class="a ht" style="left:533px;top:0.6px;">Node</div>

<div class="a hb" style="left:668.6px;top:1.3px;width:14.2px;height:8.4px;background:#1a1a1a;box-shadow:inset 0 0 0 .6px #2a2a2a"></div>
<svg class="a" style="left:668.6px;top:1.3px" width="15" height="9"><rect x="2" y="1.4" width="5" height="2.8" rx="1" fill="#eee"/><rect x="2" y="4.9" width="5" height="2.8" rx="1" fill="#eee"/><path d="M7 2.8H8.5V6.3H7" stroke="#ccc" stroke-width=".8" fill="none"/><path d="M10 3.8L11.4 5.2L12.8 3.8" stroke="#bbb" stroke-width=".8" fill="none"/></svg>
<div class="a" style="left:683.7px;top:1.3px;width:55.3px;height:8.4px;background:#1d1d1d;box-shadow:inset 0 0 0 .5px #262626"></div>
<div class="a ht" style="left:686.5px;top:0.5px;">Geometry Nodes</div>
<div class="a" style="left:739px;top:1.3px;width:28.5px;height:8.4px;background:#3d3d3d;border-radius:0 2px 2px 0"></div>
<svg class="a" style="left:739px;top:1.3px" width="29" height="9"><path d="M4.6 1.3L7.6 2.3V4.5C7.6 6.3 6.2 7.3 4.6 7.8C3 7.3 1.6 6.3 1.6 4.5V2.3Z" stroke="#888" stroke-width=".8" fill="none"/><rect x="12" y="3" width="3.6" height="4" stroke="#ccc" stroke-width=".7" fill="none"/><path d="M13.5 3V1.5H17V5.5H15.6" stroke="#ccc" stroke-width=".7" fill="none"/><path d="M21.5 2.8L24.3 5.6M24.3 2.8L21.5 5.6" stroke="#ccc" stroke-width=".8"/></svg>
<svg class="a" style="left:771px;top:1.3px" width="9" height="9"><path d="M2 7.5L4 5.5M3 4.5L5.5 2L7.3 3.8L4.8 6.3ZM4.5 2.3L7 4.8" stroke="#aaa" stroke-width=".8" fill="none"/></svg>

<div class="a" style="left:944.7px;top:1px;width:8.5px;height:8.7px;background:#262626;border-radius:2px"></div>
<svg class="a" style="left:944.7px;top:1px" width="9" height="9"><path d="M3 3.5L4.3 2.2L5.6 3.5M4.3 2.2V6.5H6.5" stroke="#555" stroke-width=".8" fill="none"/></svg>
<div class="a" style="left:956.2px;top:1px;width:8.8px;height:8.7px;background:#4a4a4a;border-radius:2px 0 0 2px"></div>
<svg class="a" style="left:956.2px;top:1px" width="9" height="9"><path d="M2.2 6A2.6 2.6 0 0 1 6.8 3" stroke="#777" stroke-width="1.5" fill="none"/></svg>
<div class="a hb" style="left:965px;top:1px;width:15.3px;height:8.7px;background:#1a1a1a;border-radius:0 2px 2px 0"></div>
<svg class="a" style="left:965px;top:1px" width="16" height="9"><rect x="1.3" y="1.5" width="2.2" height="2.2" fill="#eee"/><path d="M4.5 1V7.8M1.3 5.8H7.5" stroke="#ccc" stroke-width=".7"/><path d="M10.6 4L12.1 5.4L13.6 4" stroke="#bbb" stroke-width=".8" fill="none"/></svg>
<div class="a" style="left:983.7px;top:1px;width:8.5px;height:8.7px;background:#4772b3;border-radius:2px 0 0 2px"></div>
<svg class="a" style="left:983.7px;top:1px" width="9" height="9"><circle cx="3.5" cy="5.5" r="2.3" stroke="#cde" stroke-width=".7" fill="none"/><circle cx="5.3" cy="3.5" r="2.3" fill="#fff"/></svg>
<div class="a hb" style="left:992.2px;top:1px;width:9.3px;height:8.7px;background:#1a1a1a;border-radius:0 2px 2px 0"></div>
<svg class="a" style="left:992.2px;top:1px" width="10" height="9"><path d="M2.8 4L4.5 5.4L6.2 4" stroke="#bbb" stroke-width=".8" fill="none"/></svg>

<!-- breadcrumbs -->
<svg class="a" style="left:452px;top:17px" width="170" height="10">
<path d="M0.8 3.3L2.4 5L0.8 6.7" stroke="#aaa" stroke-width=".8" fill="none"/>
<rect x="9.5" y="3.4" width="3.3" height="3.3" fill="#eee"/><path d="M8.3 3.2V2H9.5M12.8 2H14V3.2M14 6.9V8.1H12.8M9.5 8.1H8.3V6.9" stroke="#aaa" stroke-width=".7" fill="none"/>
<path d="M39.5 3.3L41.1 5L39.5 6.7" stroke="#bbb" stroke-width=".8" fill="none"/>
<path d="M46.5 8.6L50.6 4.5" stroke="#eee" stroke-width="1.5" stroke-linecap="round"/><path d="M49.6 5.2A2.3 2.3 0 0 1 51 1.3L50.6 3.1L52.1 4.6L53.9 4.2A2.3 2.3 0 0 1 50 5.6Z" fill="#eee"/>
<path d="M104.5 3.3L106.1 5L104.5 6.7" stroke="#bbb" stroke-width=".8" fill="none"/>
<rect x="111.5" y="1.8" width="5" height="2.8" rx="1" fill="#eee"/><rect x="111.5" y="5.4" width="5" height="2.8" rx="1" fill="#eee"/><path d="M116.5 3.2H118V6.8H116.5" stroke="#ccc" stroke-width=".7" fill="none"/>
</svg>
<div class="a ht" style="left:471.3px;top:16.7px;color:#c8c8c8">Cube</div>
<div class="a ht" style="left:509px;top:16.7px;color:#c8c8c8">GeometryNodes</div>
<div class="a ht" style="left:574px;top:16.7px;color:#c8c8c8">Geometry Nodes</div>
<svg class="a" style="left:1001px;top:18px" width="4" height="7"><path d="M4 1.2L1.6 3.5L4 5.8" stroke="#bbb" stroke-width="1.1" fill="none"/></svg>
<!-- links -->
<svg class="a" style="left:0;top:0" width="1005" height="585">
<g stroke="#17ab86" stroke-width="1.7" fill="none" stroke-linecap="round">
<line x1="577" y1="328" x2="598" y2="334"/>
<line x1="726" y1="293.3" x2="756.5" y2="318.5"/>
<line x1="860" y1="299.6" x2="882.4" y2="299.3"/>
<line x1="757" y1="334.7" x2="856" y2="394.8"/>
</g></svg>

<!-- Ico Sphere -->
<div class="a node" style="left:473px;top:302px;width:104px;height:72px">
 <div class="a nh" style="height:15.5px;background:#1e7962"></div>
 <svg class="a" style="left:7px;top:6px" width="8" height="5"><path d="M1 1L4 4L7 1" stroke="#d8e8e0" stroke-width="1.1" fill="none"/></svg>
 <div class="a nt" style="left:19.4px;top:2.6px">Ico Sphere</div>
 <div class="a nt" style="right:8.6px;top:21px">Mesh</div>
 <div class="a fld" style="left:7.8px;top:38px;width:88.2px;height:14px"></div>
 <div class="a nt" style="left:19.4px;top:40px">Radius</div>
 <div class="a nt" style="right:18.6px;top:40px">1 m</div>
 <div class="a fld" style="left:7.8px;top:54px;width:88.2px;height:14px"></div>
 <div class="a nt" style="left:19.4px;top:56px;letter-spacing:-0.22px">Subdivisions</div>
 <div class="a nt" style="right:18.6px;top:56px">5</div>
</div>

<!-- Spaghettify -->
<div class="a node" style="left:598px;top:268px;width:128px;height:142px">
 <div class="a nh" style="height:14.3px;background:#3a5226"></div>
 <svg class="a" style="left:8px;top:5px" width="8" height="5"><path d="M1 1L4 4L7 1" stroke="#dde6d6" stroke-width="1.1" fill="none"/></svg>
 <div class="a nt" style="left:18.7px;top:1.2px;letter-spacing:-0.12px">Spaghettify...ppend this}</div>
 <svg class="a" style="left:111.5px;top:2px" width="12" height="11"><rect x="1" y="1" width="6" height="4" rx="1" fill="#e6e6e6"/><rect x="1" y="6" width="6" height="4" rx="1" fill="#e6e6e6"/><path d="M7 3.2h2.5v5H7" stroke="#e6e6e6" stroke-width="1" fill="none"/></svg>
 <div class="a nt" style="right:10px;top:20px;letter-spacing:-0.05px">Geometry</div>
 <div class="a" style="left:8px;top:40.7px;width:22px;height:13.3px;background:#282828;border-radius:3px 0 0 3px"></div>
 <svg class="a" style="left:10px;top:42px" width="18" height="11"><rect x="1" y="1" width="6" height="4" rx="1" fill="#e0e0e0"/><rect x="1" y="6" width="6" height="4" rx="1" fill="#e0e0e0"/><path d="M7 3.2h2.5v5H7" stroke="#e0e0e0" stroke-width="1" fill="none"/><path d="M11.5 5L13.5 7L15.5 5" stroke="#ccc" stroke-width="0.9" fill="none"/></svg>
 <div class="a" style="left:31px;top:40.7px;width:74px;height:13.3px;background:#1d1d1d"></div>
 <div class="a nt" style="left:36px;top:42.2px;letter-spacing:-0.15px">Spaghettify Ge...</div>
 <div class="a" style="left:105px;top:40.7px;width:14px;height:13.3px;background:#4772b3;border-radius:0 3px 3px 0"></div>
 <svg class="a" style="left:106px;top:41.5px" width="12" height="12"><path d="M6 1.3L10.3 2.8V6C10.3 8.6 8.3 10 6 10.9C3.7 10 1.7 8.6 1.7 6V2.8Z" fill="#fff"/><path d="M3.8 6L5.4 7.6L8.4 4.4" stroke="#4772b3" stroke-width="1.2" fill="none"/></svg>
 <div class="a nt" style="left:7.5px;top:61px;letter-spacing:-0.05px">Geometry</div>
 <div class="a" style="left:7.5px;top:77.9px;width:9.5px;height:9.3px;background:#4772b3;border-radius:2px"></div>
 <svg class="a" style="left:7.5px;top:77.9px" width="10" height="10"><path d="M2 5L4 7.2L8 2.6" stroke="#fff" stroke-width="1.3" fill="none"/></svg>
 <div class="a nt" style="left:19.9px;top:77.3px">Bezier</div>
 <div class="a" style="left:7.5px;top:94px;width:9.5px;height:9.3px;background:#4772b3;border-radius:2px"></div>
 <svg class="a" style="left:7.5px;top:94px" width="10" height="10"><path d="M2 5L4 7.2L8 2.6" stroke="#fff" stroke-width="1.3" fill="none"/></svg>
 <div class="a nt" style="left:19.9px;top:93.8px">Cyclic</div>
 <div class="a fld" style="left:7.3px;top:108px;width:111.7px;height:13.6px"></div>
 <div class="a nt" style="left:18.7px;top:110px;letter-spacing:-0.1px">Randomize Iteratio</div>
 <div class="a nt" style="right:19px;top:110px">10</div>
 <div class="a fld" style="left:7.3px;top:124px;width:111.7px;height:13.7px"></div>
 <div class="a nt" style="left:18.7px;top:126px">Seed</div>
 <div class="a nt" style="right:19px;top:126px">0</div>
</div>

<!-- Curve to Mesh -->
<div class="a node" style="left:757px;top:274px;width:103px;height:88px">
 <div class="a nh" style="height:15px;background:#1e7962"></div>
 <svg class="a" style="left:7px;top:5.5px" width="8" height="5"><path d="M1 1L4 4L7 1" stroke="#d8e8e0" stroke-width="1.1" fill="none"/></svg>
 <div class="a nt" style="left:18.5px;top:2px;letter-spacing:-0.22px">Curve to Mesh</div>
 <div class="a nt" style="right:7.8px;top:20.6px">Mesh</div>
 <div class="a nt" style="left:7.4px;top:39.3px">Curve</div>
 <div class="a nt" style="left:7.4px;top:55.7px">Profile Curve</div>
 <div class="a" style="left:7.4px;top:72px;width:10px;height:10px;background:#545454;border-radius:2px"></div>
 <div class="a nt" style="left:19.8px;top:72.2px">Fill Caps</div>
</div>

<!-- Curve Circle -->
<div class="a node" style="left:753px;top:369px;width:103px;height:95px">
 <div class="a nh" style="height:15px;background:#1e7962"></div>
 <svg class="a" style="left:7px;top:5.5px" width="8" height="5"><path d="M1 1L4 4L7 1" stroke="#d8e8e0" stroke-width="1.1" fill="none"/></svg>
 <div class="a nt" style="left:18.5px;top:2.3px">Curve Circle</div>
 <div class="a nt" style="right:8px;top:20.8px">Curve</div>
 <div class="a" style="left:7.4px;top:43px;width:44.4px;height:13.8px;background:#545454;border-radius:3px 0 0 3px"></div>
 <div class="a" style="left:51.8px;top:43px;width:44.5px;height:13.8px;background:#4772b3;border-radius:0 3px 3px 0"></div>
 <div class="a nt" style="left:7.4px;width:44.4px;text-align:center;top:45px">Points</div>
 <div class="a nt" style="left:51.8px;width:44.5px;text-align:center;top:45px">Radius</div>
 <div class="a fld" style="left:7.4px;top:61.2px;width:88.9px;height:13.8px"></div>
 <div class="a nt" style="left:19.3px;top:63.3px">Resolution</div>
 <div class="a nt" style="right:17.9px;top:63.3px">8</div>
 <div class="a fld" style="left:7.4px;top:77.6px;width:88.9px;height:13.7px"></div>
 <div class="a nt" style="left:19.3px;top:79.5px">Radius</div>
 <div class="a nt" style="right:17.9px;top:79.5px">0.01 m</div>
</div>

<!-- Group Output -->
<div class="a node" style="left:882.4px;top:277px;width:103.6px;height:50px">
 <div class="a nh" style="height:15.8px;background:#1f1f1f"></div>
 <svg class="a" style="left:7.5px;top:6px" width="8" height="5"><path d="M1 1L4 4L7 1" stroke="#d8d8d8" stroke-width="1.1" fill="none"/></svg>
 <div class="a nt" style="left:19.1px;top:2.5px;letter-spacing:-0.15px">Group Output</div>
 <div class="a nt" style="left:8px;top:17.3px;letter-spacing:-0.05px">Geometry</div>
</div>

<!-- sockets -->
<svg class="a" style="left:0;top:0" width="1005" height="585">
<g stroke="#1a1a1a" stroke-width="0.6">
<circle cx="577" cy="328" r="3.3" fill="#00d6a3"/>
<circle cx="473" cy="347" r="3.3" fill="#a1a1a1"/>
<circle cx="473" cy="363" r="3.3" fill="#5f9f63"/>
<circle cx="726" cy="293.3" r="3.3" fill="#00d6a3"/>
<circle cx="598" cy="334" r="3.3" fill="#00d6a3"/>
<circle cx="598" cy="350.3" r="3.3" fill="#cca6d6"/>
<path d="M598 362.8L602 366.8L598 370.8L594 366.8Z" fill="#cca6d6"/>
<circle cx="598" cy="383" r="3.3" fill="#5f9f63"/>
<path d="M598 395L602 399L598 403L594 399Z" fill="#5f9f63"/>
<circle cx="860" cy="299.6" r="3.3" fill="#00d6a3"/>
<circle cx="757" cy="318.3" r="3.3" fill="#00d6a3"/>
<circle cx="757" cy="334.7" r="3.3" fill="#00d6a3"/>
<circle cx="757" cy="351.2" r="3.3" fill="#cca6d6"/>
<circle cx="856" cy="394.8" r="3.3" fill="#00d6a3"/>
<circle cx="753" cy="437.3" r="3.3" fill="#5f9f63"/>
<circle cx="753" cy="453.5" r="3.3" fill="#a1a1a1"/>
<circle cx="882.4" cy="299.3" r="3.3" fill="#00d6a3"/>
</g>
<circle cx="882.4" cy="315.5" r="3" fill="none" stroke="#888" stroke-width="1"/>
<circle cx="598" cy="366.8" r="0.9" fill="#222"/>
<circle cx="598" cy="399.1" r="0.9" fill="#222"/>
</svg>

</body></html>
